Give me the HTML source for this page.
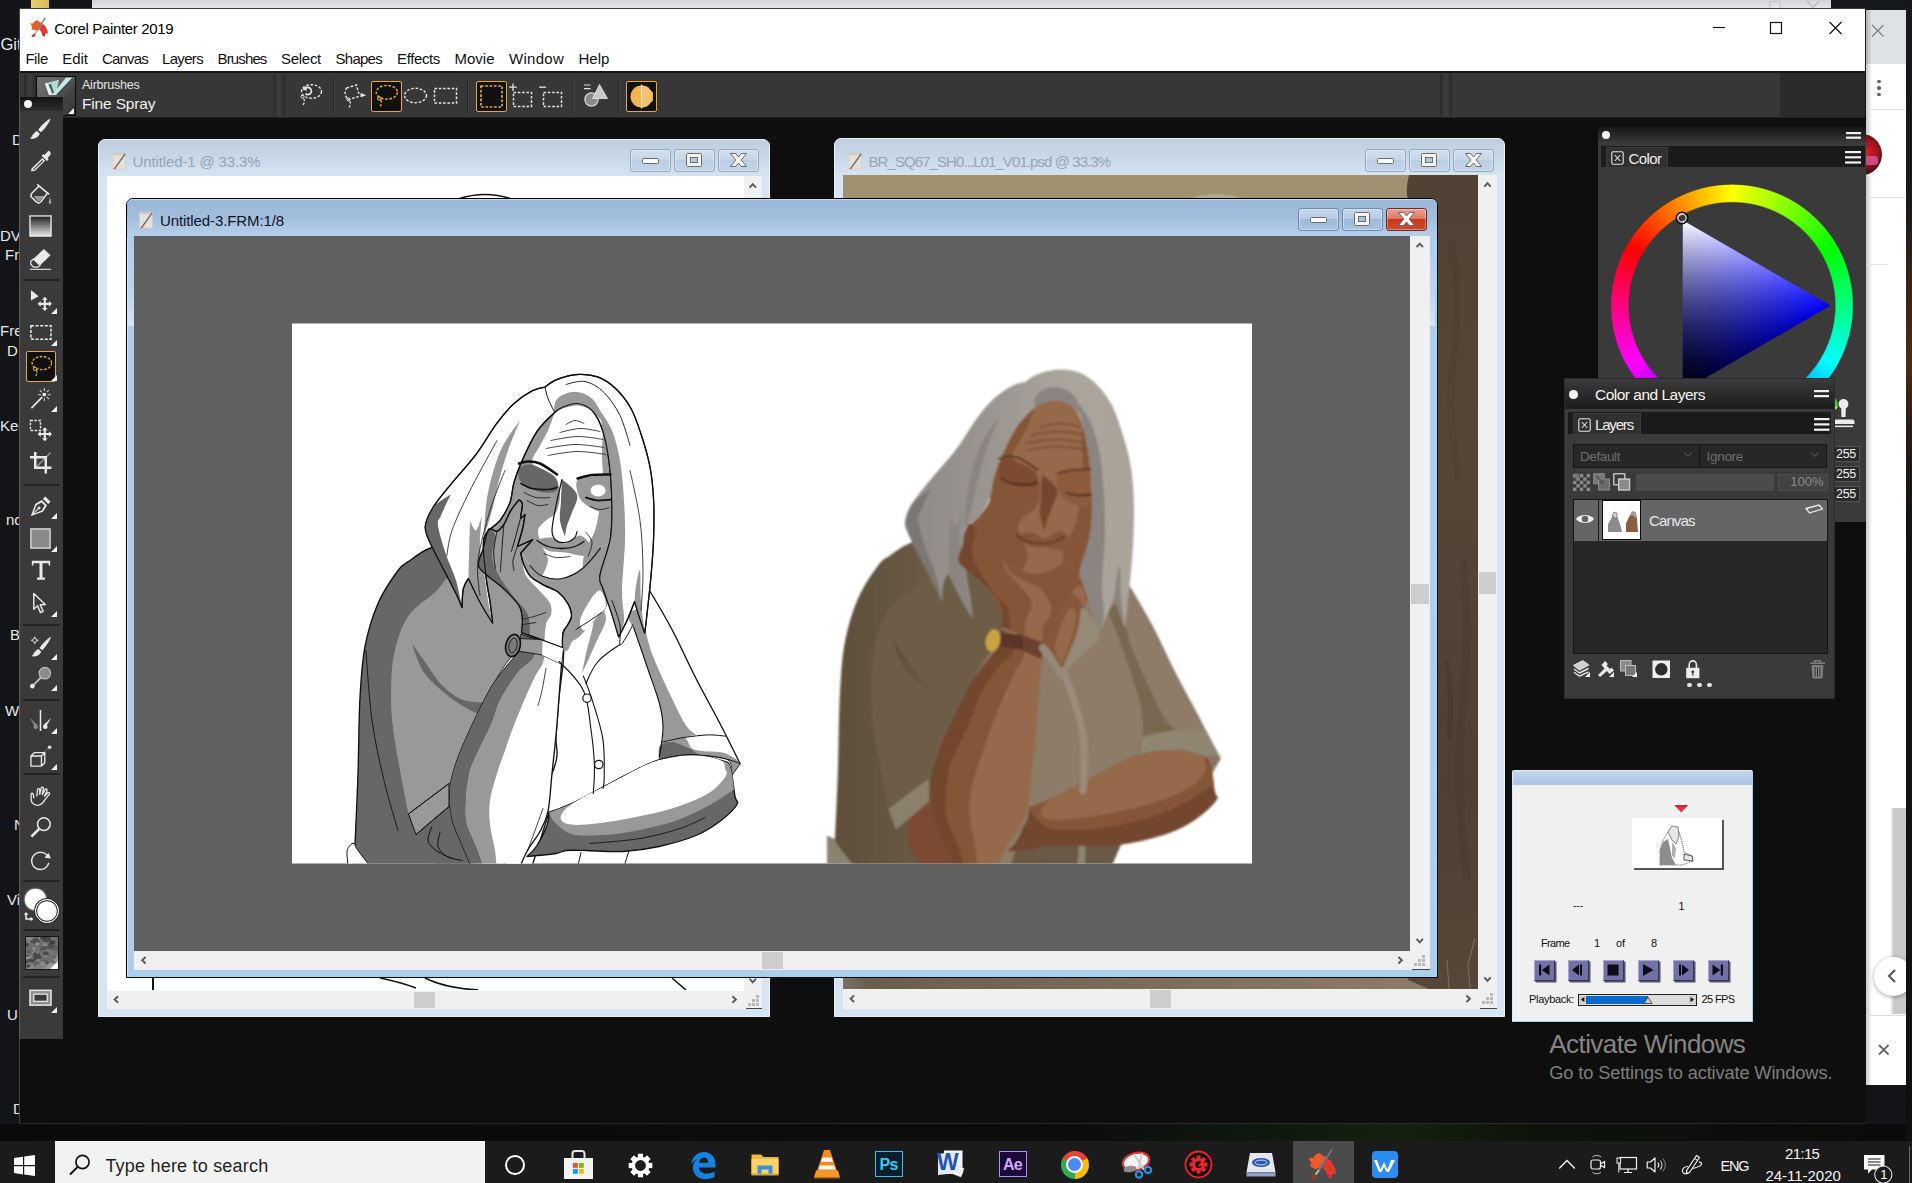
<!DOCTYPE html>
<html>
<head>
<meta charset="utf-8">
<title>Corel Painter 2019</title>
<style>
*{box-sizing:border-box;margin:0;padding:0}
html,body{width:1912px;height:1183px;overflow:hidden;background:#0c0c0f;font-family:"Liberation Sans",sans-serif;}
.abs{position:absolute}
#root{position:absolute;left:0;top:0;width:1912px;height:1183px;overflow:hidden;background:#0c0c0f}
.t{position:absolute;white-space:nowrap;line-height:1}
</style>
</head>
<body>
<div id="root">
<!-- p1_main -->
<div class="abs" style="left:0.00px;top:0.00px;width:1912.00px;height:1183.00px;background:#121417;"></div>
<div class="abs" style="left:0.00px;top:1124.00px;width:1912.00px;height:17.00px;background:linear-gradient(90deg,#0a0a0c 0%,#0c0c0c 55%,#101a10 68%,#15200f 73%,#0e130c 80%,#0a0a0a 100%);"></div>
<div class="abs" style="left:92.00px;top:0.00px;width:1739.00px;height:9.00px;background:linear-gradient(#d3d4da,#e8e9ec);"></div>
<div class="abs" style="left:92.00px;top:8.00px;width:1739.00px;height:1.00px;background:#777;"></div>
<div class="abs" style="left:31.00px;top:0.00px;width:18.00px;height:8.00px;background:linear-gradient(90deg,#e8cf7a,#d9b84d);"></div>
<div class="abs" style="left:1831.00px;top:0.00px;width:81.00px;height:10.00px;background:#16181c;"></div>
<svg class="abs" style="left:1765.00px;top:0.00px;" width="60" height="8" viewBox="0 0 60 8"><rect x="4.8" y="1.5" width="10.6" height="12" rx="2" fill="none" stroke="#c2c3c9" stroke-width="1.2"/><path d="M42 1 L48.2 7.5 L54.4 1" stroke="#b9babf" stroke-width="1.2" fill="none"/></svg>
<div class="abs" style="left:0;top:33px;width:19px;height:22px;overflow:hidden"><div class="t" style="left:0.50px;top:2.53px;font-size:16.50px;color:#e8e8e8;">Git</div></div>
<div class="abs" style="left:0;top:130px;width:19px;height:21px;overflow:hidden"><div class="t" style="left:12.00px;top:2.30px;font-size:15.00px;color:#e8e8e8;">D</div></div>
<div class="abs" style="left:0;top:226px;width:19px;height:21px;overflow:hidden"><div class="t" style="left:0.00px;top:2.30px;font-size:15.00px;color:#e8e8e8;">DV</div></div>
<div class="abs" style="left:0;top:245px;width:19px;height:21px;overflow:hidden"><div class="t" style="left:5.00px;top:2.30px;font-size:15.00px;color:#e8e8e8;">Fr</div></div>
<div class="abs" style="left:0;top:321px;width:19px;height:21px;overflow:hidden"><div class="t" style="left:0.00px;top:2.30px;font-size:15.00px;color:#e8e8e8;">Fre</div></div>
<div class="abs" style="left:0;top:341px;width:19px;height:21px;overflow:hidden"><div class="t" style="left:7.00px;top:2.30px;font-size:15.00px;color:#e8e8e8;">D</div></div>
<div class="abs" style="left:0;top:416px;width:19px;height:21px;overflow:hidden"><div class="t" style="left:0.00px;top:2.30px;font-size:15.00px;color:#e8e8e8;">Kee</div></div>
<div class="abs" style="left:0;top:510px;width:19px;height:21px;overflow:hidden"><div class="t" style="left:6.00px;top:2.30px;font-size:15.00px;color:#e8e8e8;">no</div></div>
<div class="abs" style="left:0;top:625px;width:19px;height:21px;overflow:hidden"><div class="t" style="left:10.00px;top:2.30px;font-size:15.00px;color:#e8e8e8;">B</div></div>
<div class="abs" style="left:0;top:701px;width:19px;height:21px;overflow:hidden"><div class="t" style="left:5.00px;top:2.30px;font-size:15.00px;color:#e8e8e8;">W</div></div>
<div class="abs" style="left:0;top:815px;width:19px;height:21px;overflow:hidden"><div class="t" style="left:14.00px;top:2.30px;font-size:15.00px;color:#e8e8e8;">N</div></div>
<div class="abs" style="left:0;top:890px;width:19px;height:21px;overflow:hidden"><div class="t" style="left:7.00px;top:2.30px;font-size:15.00px;color:#e8e8e8;">Vi</div></div>
<div class="abs" style="left:0;top:1005px;width:19px;height:21px;overflow:hidden"><div class="t" style="left:7.00px;top:2.30px;font-size:15.00px;color:#e8e8e8;">U</div></div>
<div class="abs" style="left:0;top:1099px;width:19px;height:21px;overflow:hidden"><div class="t" style="left:13.00px;top:2.30px;font-size:15.00px;color:#e8e8e8;">D</div></div>
<div class="abs" style="left:1865.50px;top:10.00px;width:40.50px;height:1075.00px;background:#ffffff;"></div>
<div class="abs" style="left:1865.50px;top:10.00px;width:40.50px;height:54.00px;background:#dee1e6;"></div>
<div class="abs" style="left:1865.50px;top:10.00px;width:6.00px;height:1075.00px;background:linear-gradient(90deg,rgba(0,0,0,0.22),rgba(0,0,0,0));"></div>
<svg class="abs" style="left:1870.00px;top:23.00px;" width="16" height="16" viewBox="0 0 16 16"><path d="M2 2 L13.5 13.5 M13.5 2 L2 13.5" stroke="#7d8085" stroke-width="1.3"/></svg>
<div class="abs" style="left:1865.50px;top:108.50px;width:40.50px;height:1.00px;background:#e3e3e3;"></div>
<div class="abs" style="left:1877.2px;top:79.5px;width:3.6px;height:3.6px;border-radius:50%;background:#5f6368"></div>
<div class="abs" style="left:1877.2px;top:86px;width:3.6px;height:3.6px;border-radius:50%;background:#5f6368"></div>
<div class="abs" style="left:1877.2px;top:92.5px;width:3.6px;height:3.6px;border-radius:50%;background:#5f6368"></div>
<div class="abs" style="left:1842px;top:134px;width:40px;height:41px;border-radius:50%;background:radial-gradient(circle at 60% 45%,#d8202a 0%,#a0141c 35%,#4a1014 60%,#1c1012 100%);overflow:hidden"><div class="abs" style="left:22px;top:22px;width:14px;height:9px;background:#d45a9a;border-radius:3px;opacity:0.8"></div></div>
<div class="abs" style="left:1865.50px;top:196.50px;width:40.50px;height:1.00px;background:#e2e2e2;"></div>
<div class="abs" style="left:1865.50px;top:263.50px;width:21.00px;height:1.50px;background:#e6e6e6;"></div>
<div class="abs" style="left:1891.00px;top:808.00px;width:15.00px;height:206.00px;background:#c9c9c9;border-left:2px solid #e6e6e6"></div>
<div class="abs" style="left:1865.50px;top:1014.50px;width:40.50px;height:1.00px;background:#dcdcdc;"></div>
<div class="abs" style="left:1873.5px;top:956.5px;width:39px;height:39px;border-radius:50%;background:#fff;box-shadow:0 1px 4px rgba(0,0,0,0.35)"></div>
<svg class="abs" style="left:1886.00px;top:968.00px;" width="12" height="16" viewBox="0 0 12 16"><path d="M9 2 L3 8 L9 14" fill="none" stroke="#555" stroke-width="2"/></svg>
<svg class="abs" style="left:1877.00px;top:1043.00px;" width="14" height="14" viewBox="0 0 14 14"><path d="M2 2 L11.5 11.5 M11.5 2 L2 11.5" stroke="#666" stroke-width="1.8"/></svg>
<div class="abs" style="left:1906.00px;top:0.00px;width:6.00px;height:1141.00px;background:linear-gradient(#15171b 0%,#1b1a1a 18%,#3a2415 25%,#4a2a14 32%,#2a1a12 38%,#141414 45%,#101010 100%);"></div>
<div class="abs" style="left:19.00px;top:9.00px;width:1846.00px;height:1115.00px;background:#0e0e0e;border-left:1px solid #444"></div>
<div class="abs" style="left:19.00px;top:8.00px;width:1846.00px;height:1.00px;background:#3c3c3c;"></div>
<div class="abs" style="left:19.00px;top:1123.00px;width:1847.00px;height:1.00px;background:#2a2a2a;"></div>
<div class="abs" style="left:20.00px;top:9.00px;width:1845.00px;height:62.00px;background:#ffffff;"></div>
<svg class="abs" style="left:29.00px;top:17.00px;" width="21" height="25" viewBox="0 0 21 25"><path d="M1.2 6.2 L4 6.6 L6 4 L8.5 3 L10 5 L12.5 5.5 L9 12 L6 13.5 L2.5 12 L3 9.5 Z" fill="#f05a28"/>
<path d="M13 7 L15.5 8 L18.5 13.5 L18.8 16.5 L16.5 16.5 L15.8 19.5 L14 19 L12 14.5 L10 12.5 Z" fill="#e03a28"/>
<path d="M15.8 19.5 L14 19 L13 16.5 L15 17 Z" fill="#c8245a"/>
<path d="M16.9 1 L15.7 0.6 L7.4 13.6 L8.6 14.3 Z" fill="#6f7480"/>
<path d="M7.4 13.6 L8.6 14.3 L6.4 17.4 L5.2 16.6 Z" fill="#bda89a"/>
<path d="M5.2 16.6 L6.4 17.4 L5.8 19.6 L2.2 20 L3.4 18 Z" fill="#9a3a24"/></svg>
<div class="t" style="left:54.30px;top:20.90px;font-size:15.00px;color:#000;letter-spacing:-0.338px;">Corel Painter 2019</div>
<div class="t" style="left:25.40px;top:51.00px;font-size:15.00px;color:#111;letter-spacing:-0.443px;">File</div>
<div class="t" style="left:62.30px;top:51.00px;font-size:15.00px;color:#111;letter-spacing:-0.087px;">Edit</div>
<div class="t" style="left:102.00px;top:51.00px;font-size:15.00px;color:#111;letter-spacing:-0.810px;">Canvas</div>
<div class="t" style="left:162.00px;top:51.00px;font-size:15.00px;color:#111;letter-spacing:-0.670px;">Layers</div>
<div class="t" style="left:217.50px;top:51.00px;font-size:15.00px;color:#111;letter-spacing:-0.861px;">Brushes</div>
<div class="t" style="left:281.00px;top:51.00px;font-size:15.00px;color:#111;letter-spacing:-0.282px;">Select</div>
<div class="t" style="left:335.50px;top:51.00px;font-size:15.00px;color:#111;letter-spacing:-0.729px;">Shapes</div>
<div class="t" style="left:397.00px;top:51.00px;font-size:15.00px;color:#111;letter-spacing:-0.368px;">Effects</div>
<div class="t" style="left:454.50px;top:51.00px;font-size:15.00px;color:#111;letter-spacing:-0.003px;">Movie</div>
<div class="t" style="left:509.00px;top:51.00px;font-size:15.00px;color:#111;letter-spacing:0.275px;">Window</div>
<div class="t" style="left:578.50px;top:51.00px;font-size:15.00px;color:#111;letter-spacing:0.038px;">Help</div>
<svg class="abs" style="left:1700.00px;top:14.00px;" width="150" height="30" viewBox="0 0 150 30">
<path d="M13 13.5 H25" stroke="#111" stroke-width="1.1"/>
<rect x="70.5" y="8.5" width="11" height="11" fill="none" stroke="#111" stroke-width="1.2"/>
<path d="M129.5 8 L141.5 20 M141.5 8 L129.5 20" stroke="#111" stroke-width="1.2"/></svg>
<div class="abs" style="left:20.00px;top:71.00px;width:1845.00px;height:2.00px;background:#161616;"></div>
<div class="abs" style="left:20.00px;top:73.00px;width:1760.00px;height:45.00px;background:#373737;"></div>
<div class="abs" style="left:1780.00px;top:73.00px;width:85.00px;height:45.00px;background:#2b2b2b;"></div>
<div class="abs" style="left:20.00px;top:117.00px;width:1845.00px;height:1.00px;background:#222;"></div>
<div class="abs" style="left:24.00px;top:74.00px;width:12.00px;height:43.00px;background:linear-gradient(90deg,#2a2a2a,#3e3e3e 50%,#2a2a2a);"></div>
<div class="abs" style="left:273.00px;top:74.00px;width:12.00px;height:43.00px;background:linear-gradient(90deg,#2a2a2a,#3e3e3e 50%,#2a2a2a);"></div>
<div class="abs" style="left:1440.00px;top:74.00px;width:12.00px;height:43.00px;background:linear-gradient(90deg,#2a2a2a,#3e3e3e 50%,#2a2a2a);"></div>
<div class="abs" style="left:36.00px;top:76.00px;width:40.00px;height:40.00px;background:linear-gradient(135deg,#727272 0%,#5e5e5e 40%,#444242 65%,#3a3838 100%);border:1.6px solid #0a0a0a"></div>
<svg class="abs" style="left:36.00px;top:76.00px;" width="40" height="40" viewBox="0 0 40 40">
<path d="M9 7.5 L23 3.8 L20 19 L13 19 Z" fill="#b9d8d5"/>
<path d="M9 7.5 L11.5 6.9 L15.5 19 L13 19 Z" fill="#e6f2f0"/>
<path d="M12.5 8.5 L15 8 L18 17 L16.5 17.5 Z" fill="#3d5856"/>
<path d="M16 19 L30 1.5 L38.5 1.5 L22 19 Z" fill="#c8e6e3"/>
<path d="M20 19 L36.5 1.5 L38.5 1.5 L23.5 19 Z" fill="#344c4a"/>
<path d="M31 38.4 L38.4 38.4 L38.4 31 Z" fill="#fff" stroke="#0a0a0a" stroke-width="0.8"/></svg>
<div class="t" style="left:82.00px;top:78.92px;font-size:12.50px;color:#e6e6e6;letter-spacing:-0.225px;">Airbrushes</div>
<div class="t" style="left:82.00px;top:96.48px;font-size:15.50px;color:#f0f0f0;letter-spacing:-0.165px;">Fine Spray</div>
<div class="abs" style="left:333.00px;top:77.00px;width:1.00px;height:37.00px;background:#262626;"></div>
<div class="abs" style="left:334.00px;top:77.00px;width:1.00px;height:37.00px;background:#434343;"></div>
<div class="abs" style="left:467.00px;top:77.00px;width:1.00px;height:37.00px;background:#262626;"></div>
<div class="abs" style="left:468.00px;top:77.00px;width:1.00px;height:37.00px;background:#434343;"></div>
<div class="abs" style="left:572.00px;top:77.00px;width:1.00px;height:37.00px;background:#262626;"></div>
<div class="abs" style="left:573.00px;top:77.00px;width:1.00px;height:37.00px;background:#434343;"></div>
<div class="abs" style="left:618.00px;top:77.00px;width:1.00px;height:37.00px;background:#262626;"></div>
<div class="abs" style="left:619.00px;top:77.00px;width:1.00px;height:37.00px;background:#434343;"></div>
<!-- p2_docs -->
<div class="abs" style="left:98.00px;top:138.50px;width:671.50px;height:878.00px;background:#d7e4f2;border:1px solid #e9f0f8;border-radius:7px 7px 0 0;"></div><div class="abs" style="left:99.00px;top:139.50px;width:669.50px;height:36.50px;background:linear-gradient(#bfcedd 0%,#c9d8e8 50%,#d6e3f1 100%);border-radius:6px 6px 0 0;"></div><svg class="abs" style="left:111.50px;top:152.00px;" width="15" height="18" viewBox="0 0 15 18"><rect x="0.5" y="1" width="13" height="16" fill="#e4e0dc" stroke="#d2cdc8" stroke-width="0.6"/>
<rect x="1" y="1" width="12" height="2.2" fill="#cfcac6"/>
<path d="M12.6 1.6 L13.6 2.4 L5 14.5 L3.8 13.8 Z" fill="#6f6a6a"/>
<path d="M5 14.5 L3.8 13.8 L1.6 17 L3 17.2 Z" fill="#c8402e"/></svg><div class="t" style="left:132.50px;top:154.10px;font-size:15.00px;color:#98a4b2;letter-spacing:-0.127px;">Untitled-1 @ 33.3%</div><div class="abs" style="left:629.50px;top:149.00px;width:41.00px;height:23.00px;background:linear-gradient(#d0ddeb 0%,#c8d7e8 45%,#bccee4 50%,#c3d4e8 100%);border:1px solid #94a8c0;border-radius:3px;box-shadow:inset 0 0 0 1px rgba(255,255,255,0.35)"></div><svg class="abs" style="left:629.50px;top:149.00px;" width="41" height="23" viewBox="0 0 41 23"><rect x="12.5" y="9.5" width="16" height="5" rx="1" fill="#fafafa" stroke="#6b6b6b" stroke-width="1"/></svg><div class="abs" style="left:673.50px;top:149.00px;width:41.00px;height:23.00px;background:linear-gradient(#d0ddeb 0%,#c8d7e8 45%,#bccee4 50%,#c3d4e8 100%);border:1px solid #94a8c0;border-radius:3px;box-shadow:inset 0 0 0 1px rgba(255,255,255,0.35)"></div><svg class="abs" style="left:673.50px;top:149.00px;" width="41" height="23" viewBox="0 0 41 23"><rect x="12.5" y="4.5" width="15" height="13" rx="1" fill="#f4f4f4" stroke="#6b6b6b" stroke-width="1"/><rect x="16.5" y="8.5" width="7" height="5" fill="#b5c9e1" stroke="#6b6b6b" stroke-width="1"/></svg><div class="abs" style="left:717.50px;top:149.00px;width:41.00px;height:23.00px;background:linear-gradient(#d0ddeb 0%,#c8d7e8 45%,#bccee4 50%,#c3d4e8 100%);border:1px solid #94a8c0;border-radius:3px;box-shadow:inset 0 0 0 1px rgba(255,255,255,0.35)"></div><svg class="abs" style="left:717.50px;top:149.00px;" width="41" height="23" viewBox="0 0 41 23"><path d="M12.5 4.5 L17.6 4.5 L20.5 8 L23.4 4.5 L28.5 4.5 L23.2 11 L28.5 17.5 L23.4 17.5 L20.5 14 L17.6 17.5 L12.5 17.5 L17.8 11 Z" fill="#f6f6f6" stroke="#6b6b6b" stroke-width="1" stroke-linejoin="round"/></svg><div class="abs" style="left:106.5px;top:176px;width:637.5px;height:814.5px;overflow:hidden;background:#fff"><svg class="abs" style="left:0;top:0" width="637" height="814" viewBox="107 176 637 814">
<path d="M458 199 Q485 190 512 199" fill="none" stroke="#111" stroke-width="1.6"/>
<path d="M153 978 L153 990" stroke="#111" stroke-width="2"/>
<path d="M380 978 Q400 982 416 988" fill="none" stroke="#111" stroke-width="1.4"/>
<path d="M425 978 Q445 988 478 990" fill="none" stroke="#111" stroke-width="1.8"/>
<path d="M672 978 L686 990" stroke="#111" stroke-width="1.6"/>
</svg></div><div class="abs" style="left:744.00px;top:176.00px;width:17.50px;height:832.50px;background:#f0f0f0;"></div><div class="abs" style="left:106.50px;top:990.50px;width:637.50px;height:18.00px;background:#f0f0f0;"></div><div class="abs" style="left:745.00px;top:0.00px;width:15.50px;height:0.00px;background:#cdcdcd;"></div><div class="abs" style="left:414.00px;top:991.50px;width:21.00px;height:16.00px;background:#cdcdcd;"></div><svg class="abs" style="left:0;top:0" width="1912" height="1183"><path d="M749.55 187.6 L752.75 184.1 L755.95 187.6" fill="none" stroke="#5a5a5a" stroke-width="1.9"/><path d="M749.55 978.9 L752.75 982.4 L755.95 978.9" fill="none" stroke="#5a5a5a" stroke-width="1.9"/><path d="M118.1 996.3 L114.6 999.5 L118.1 1002.7" fill="none" stroke="#5a5a5a" stroke-width="1.9"/><path d="M732.4 996.3 L735.9 999.5 L732.4 1002.7" fill="none" stroke="#5a5a5a" stroke-width="1.9"/></svg><svg class="abs" style="left:745.00px;top:991.50px;" width="17" height="17" viewBox="0 0 17 17"><rect x="11" y="3" width="3" height="3" fill="#b8b8b8"/><rect x="7" y="7" width="3" height="3" fill="#b8b8b8"/><rect x="11" y="7" width="3" height="3" fill="#b8b8b8"/><rect x="3" y="11" width="3" height="3" fill="#b8b8b8"/><rect x="7" y="11" width="3" height="3" fill="#b8b8b8"/><rect x="11" y="11" width="3" height="3" fill="#b8b8b8"/></svg><div class="abs" style="left:746.00px;top:1007.50px;width:15.50px;height:1.00px;background:#444;"></div>
<div class="abs" style="left:834.00px;top:138.00px;width:671.00px;height:878.50px;background:#d7e4f2;border:1px solid #e9f0f8;border-radius:7px 7px 0 0;"></div><div class="abs" style="left:835.00px;top:139.00px;width:669.00px;height:36.00px;background:linear-gradient(#bfcedd 0%,#c9d8e8 50%,#d6e3f1 100%);border-radius:6px 6px 0 0;"></div><svg class="abs" style="left:847.50px;top:151.50px;" width="15" height="18" viewBox="0 0 15 18"><rect x="0.5" y="1" width="13" height="16" fill="#e4e0dc" stroke="#d2cdc8" stroke-width="0.6"/>
<rect x="1" y="1" width="12" height="2.2" fill="#cfcac6"/>
<path d="M12.6 1.6 L13.6 2.4 L5 14.5 L3.8 13.8 Z" fill="#6f6a6a"/>
<path d="M5 14.5 L3.8 13.8 L1.6 17 L3 17.2 Z" fill="#c8402e"/></svg><div class="t" style="left:868.50px;top:153.60px;font-size:15.00px;color:#98a4b2;letter-spacing:-0.920px;">BR_SQ67_SH0...L01_V01.psd @ 33.3%</div><div class="abs" style="left:1365.00px;top:148.50px;width:41.00px;height:23.00px;background:linear-gradient(#d0ddeb 0%,#c8d7e8 45%,#bccee4 50%,#c3d4e8 100%);border:1px solid #94a8c0;border-radius:3px;box-shadow:inset 0 0 0 1px rgba(255,255,255,0.35)"></div><svg class="abs" style="left:1365.00px;top:148.50px;" width="41" height="23" viewBox="0 0 41 23"><rect x="12.5" y="9.5" width="16" height="5" rx="1" fill="#fafafa" stroke="#6b6b6b" stroke-width="1"/></svg><div class="abs" style="left:1409.00px;top:148.50px;width:41.00px;height:23.00px;background:linear-gradient(#d0ddeb 0%,#c8d7e8 45%,#bccee4 50%,#c3d4e8 100%);border:1px solid #94a8c0;border-radius:3px;box-shadow:inset 0 0 0 1px rgba(255,255,255,0.35)"></div><svg class="abs" style="left:1409.00px;top:148.50px;" width="41" height="23" viewBox="0 0 41 23"><rect x="12.5" y="4.5" width="15" height="13" rx="1" fill="#f4f4f4" stroke="#6b6b6b" stroke-width="1"/><rect x="16.5" y="8.5" width="7" height="5" fill="#b5c9e1" stroke="#6b6b6b" stroke-width="1"/></svg><div class="abs" style="left:1453.00px;top:148.50px;width:41.00px;height:23.00px;background:linear-gradient(#d0ddeb 0%,#c8d7e8 45%,#bccee4 50%,#c3d4e8 100%);border:1px solid #94a8c0;border-radius:3px;box-shadow:inset 0 0 0 1px rgba(255,255,255,0.35)"></div><svg class="abs" style="left:1453.00px;top:148.50px;" width="41" height="23" viewBox="0 0 41 23"><path d="M12.5 4.5 L17.6 4.5 L20.5 8 L23.4 4.5 L28.5 4.5 L23.2 11 L28.5 17.5 L23.4 17.5 L20.5 14 L17.6 17.5 L12.5 17.5 L17.8 11 Z" fill="#f6f6f6" stroke="#6b6b6b" stroke-width="1" stroke-linejoin="round"/></svg><div class="abs" style="left:842.5px;top:175px;width:635.5px;height:814px;overflow:hidden;background:#a09170"><svg class="abs" style="left:0;top:0" width="636" height="814" viewBox="842 175 636 814">
<defs><linearGradient id="brn" x1="0" y1="0" x2="0" y2="1"><stop offset="0" stop-color="#504234"/><stop offset="0.3" stop-color="#554738"/><stop offset="0.75" stop-color="#4e4033"/><stop offset="1" stop-color="#564739"/></linearGradient>
<linearGradient id="flr" x1="0" y1="0" x2="1" y2="0"><stop offset="0" stop-color="#7a7266"/><stop offset="0.04" stop-color="#6b5d4c"/><stop offset="0.5" stop-color="#7e6d5a"/><stop offset="0.9" stop-color="#8d7b67"/><stop offset="1" stop-color="#7b6a58"/></linearGradient></defs>
<rect x="842" y="175" width="636" height="814" fill="#a09170"/>
<rect x="842" y="970" width="636" height="20" fill="url(#flr)"/>
<path d="M1408 175 Q1404 190 1407 200 L1407 980 L1428 989 L1478 989 L1478 175 Z" fill="url(#brn)"/>
<path d="M1190 198 Q1215 190 1240 198 Z" fill="#b0a78f"/>
<path d="M1450 240 Q1462 300 1452 360 Q1446 420 1458 480" fill="none" stroke="#45382c" stroke-width="7" opacity="0.28"/>
<path d="M1462 560 Q1470 640 1460 720 Q1455 800 1466 880" fill="none" stroke="#433428" stroke-width="8" opacity="0.25"/>
<path d="M1446 660 Q1452 700 1448 740" fill="none" stroke="#3e3027" stroke-width="5" opacity="0.3"/>
<path d="M1474 938 L1467 965 L1469 989 M1446 960 L1448 989" fill="none" stroke="#8a7a68" stroke-width="1" opacity="0.8"/>
</svg></div><div class="abs" style="left:1478.00px;top:175.00px;width:19.00px;height:833.50px;background:#f0f0f0;"></div><div class="abs" style="left:842.50px;top:989.00px;width:635.50px;height:19.50px;background:#f0f0f0;"></div><div class="abs" style="left:1479.00px;top:572.00px;width:17.00px;height:22.00px;background:#cdcdcd;"></div><div class="abs" style="left:1150.00px;top:990.00px;width:21.00px;height:17.50px;background:#cdcdcd;"></div><svg class="abs" style="left:0;top:0" width="1912" height="1183"><path d="M1484.3 186.6 L1487.5 183.1 L1490.7 186.6" fill="none" stroke="#5a5a5a" stroke-width="1.9"/><path d="M1484.3 977.4 L1487.5 980.9 L1490.7 977.4" fill="none" stroke="#5a5a5a" stroke-width="1.9"/><path d="M854.1 995.55 L850.6 998.75 L854.1 1001.95" fill="none" stroke="#5a5a5a" stroke-width="1.9"/><path d="M1466.4 995.55 L1469.9 998.75 L1466.4 1001.95" fill="none" stroke="#5a5a5a" stroke-width="1.9"/></svg><svg class="abs" style="left:1479.00px;top:990.00px;" width="17" height="17" viewBox="0 0 17 17"><rect x="11" y="3" width="3" height="3" fill="#b8b8b8"/><rect x="7" y="7" width="3" height="3" fill="#b8b8b8"/><rect x="11" y="7" width="3" height="3" fill="#b8b8b8"/><rect x="3" y="11" width="3" height="3" fill="#b8b8b8"/><rect x="7" y="11" width="3" height="3" fill="#b8b8b8"/><rect x="11" y="11" width="3" height="3" fill="#b8b8b8"/></svg><div class="abs" style="left:1480.00px;top:1007.50px;width:17.00px;height:1.00px;background:#444;"></div>
<div class="abs" style="left:125.50px;top:197.50px;width:1312.00px;height:780.50px;background:#b1cdea;border:1px solid #000;border-radius:7px 7px 0 0;"></div><div class="abs" style="left:126.50px;top:198.50px;width:1310.00px;height:37.00px;background:linear-gradient(#9bb7d7 0%,#a3bedd 50%,#b6d0ea 100%);border-radius:6px 6px 0 0;border-top:1px solid #c5d9ee"></div><div class="abs" style="left:126.50px;top:975.00px;width:1310.00px;height:2.00px;background:#8fd9f8;"></div><div class="abs" style="left:1434.50px;top:237.50px;width:2.00px;height:738.50px;background:#9adcf7;"></div><div class="abs" style="left:126.50px;top:237.50px;width:1.00px;height:738.50px;background:#d4e6f7;"></div><div class="abs" style="left:127.50px;top:239.50px;width:6.00px;height:86.00px;background:linear-gradient(rgba(255,255,255,0) 0%,rgba(255,255,255,0.15) 60%,rgba(255,255,255,0.5) 100%);"></div><div class="abs" style="left:1428.50px;top:239.50px;width:6.00px;height:86.00px;background:linear-gradient(rgba(255,255,255,0) 0%,rgba(255,255,255,0.15) 60%,rgba(255,255,255,0.5) 100%);"></div><svg class="abs" style="left:139.00px;top:211.00px;" width="15" height="18" viewBox="0 0 15 18"><rect x="0.5" y="1" width="13" height="16" fill="#e4e0dc" stroke="#d2cdc8" stroke-width="0.6"/>
<rect x="1" y="1" width="12" height="2.2" fill="#cfcac6"/>
<path d="M12.6 1.6 L13.6 2.4 L5 14.5 L3.8 13.8 Z" fill="#6f6a6a"/>
<path d="M5 14.5 L3.8 13.8 L1.6 17 L3 17.2 Z" fill="#c8402e"/></svg><div class="t" style="left:160.00px;top:213.10px;font-size:15.00px;color:#0c1424;letter-spacing:-0.104px;">Untitled-3.FRM:1/8</div><div class="abs" style="left:1297.50px;top:208.00px;width:41.00px;height:23.00px;background:linear-gradient(#c3d6ec 0%,#b7cde6 45%,#9fbbdb 50%,#a9c3e0 100%);border:1px solid #6f8cad;border-radius:3px;box-shadow:inset 0 0 0 1px rgba(255,255,255,0.35)"></div><svg class="abs" style="left:1297.50px;top:208.00px;" width="41" height="23" viewBox="0 0 41 23"><rect x="12.5" y="9.5" width="16" height="5" rx="1" fill="#fafafa" stroke="#6b6b6b" stroke-width="1"/></svg><div class="abs" style="left:1341.50px;top:208.00px;width:41.00px;height:23.00px;background:linear-gradient(#c3d6ec 0%,#b7cde6 45%,#9fbbdb 50%,#a9c3e0 100%);border:1px solid #6f8cad;border-radius:3px;box-shadow:inset 0 0 0 1px rgba(255,255,255,0.35)"></div><svg class="abs" style="left:1341.50px;top:208.00px;" width="41" height="23" viewBox="0 0 41 23"><rect x="12.5" y="4.5" width="15" height="13" rx="1" fill="#f4f4f4" stroke="#6b6b6b" stroke-width="1"/><rect x="16.5" y="8.5" width="7" height="5" fill="#a9c2df" stroke="#6b6b6b" stroke-width="1"/></svg><div class="abs" style="left:1385.50px;top:208.00px;width:41.00px;height:23.00px;background:linear-gradient(#e9a090 0%,#dd7a66 45%,#c9381c 50%,#cf4a2c 100%);border:1px solid #6e2a1f;border-radius:3px;box-shadow:inset 0 0 0 1px rgba(255,255,255,0.35)"></div><svg class="abs" style="left:1385.50px;top:208.00px;" width="41" height="23" viewBox="0 0 41 23"><path d="M12.5 4.5 L17.6 4.5 L20.5 8 L23.4 4.5 L28.5 4.5 L23.2 11 L28.5 17.5 L23.4 17.5 L20.5 14 L17.6 17.5 L12.5 17.5 L17.8 11 Z" fill="#f6f6f6" stroke="#6b6b6b" stroke-width="1" stroke-linejoin="round"/></svg><div class="abs" style="left:134px;top:235.5px;width:1276px;height:715px;overflow:hidden;background:#606060"><svg class="abs" style="left:0;top:0" width="1276" height="715" viewBox="134 235.5 1276 715">
<defs><filter id="pb" x="-5%" y="-5%" width="110%" height="110%"><feGaussianBlur stdDeviation="0.9"/></filter><linearGradient id="hairg" x1="0" y1="0" x2="1" y2="0"><stop offset="0" stop-color="#8f8a85"/><stop offset="0.45" stop-color="#9d9892"/><stop offset="0.7" stop-color="#aaa59c"/><stop offset="1" stop-color="#a9a399"/></linearGradient><linearGradient id="backg" x1="0" y1="0" x2="1" y2="0"><stop offset="0" stop-color="#5d4e3a"/><stop offset="0.5" stop-color="#695a44"/><stop offset="1" stop-color="#6d5d47"/></linearGradient><clipPath id="cv"><rect x="292" y="323" width="960" height="540"/></clipPath></defs>
<rect x="292" y="323" width="960" height="540" fill="#fff"/>
<g clip-path="url(#cv)">
<g><path d="M490.0 560.0 C477.0 553.0 450.5 549.8 440.0 548.0 C429.5 546.2 432.0 547.0 427.0 549.0 C422.0 551.0 414.8 556.5 410.0 560.0 C405.2 563.5 403.3 562.8 398.0 570.0 C392.7 577.2 383.5 590.3 378.0 603.0 C372.5 615.7 368.0 630.3 365.0 646.0 C362.0 661.7 361.2 675.8 360.0 697.0 C358.8 718.2 358.8 748.5 358.0 773.0 C357.2 797.5 355.7 827.5 355.0 844.0 C354.3 860.5 354.0 872.0 354.0 872.0 C354.0 872.0 480.0 872.0 480.0 872.0 C480.0 872.0 466.7 853.0 462.0 844.0 C457.3 835.0 454.0 827.3 452.0 818.0 C450.0 808.7 449.2 797.7 450.0 788.0 C450.8 778.3 453.3 770.5 457.0 760.0 C460.7 749.5 466.5 736.8 472.0 725.0 C477.5 713.2 484.5 699.2 490.0 689.0 C495.5 678.8 500.3 671.2 505.0 664.0 C509.7 656.8 514.5 653.8 518.0 646.0 C521.5 638.2 526.0 617.0 526.0 617.0 C526.0 617.0 524.0 599.5 518.0 590.0 C512.0 580.5 503.0 567.0 490.0 560.0 Z" fill="#676767" stroke="#111" stroke-width="1.35" stroke-linejoin="round" />
<path d="M480.0 560.0 C468.7 557.2 457.3 569.8 450.0 575.0 C442.7 580.2 443.0 584.2 436.0 591.0 C429.0 597.8 415.0 605.5 408.0 616.0 C401.0 626.5 396.8 640.5 394.0 654.0 C391.2 667.5 391.0 683.5 391.0 697.0 C391.0 710.5 392.0 720.2 394.0 735.0 C396.0 749.8 400.6 772.9 403.0 786.0 C405.4 799.1 408.5 813.5 408.5 813.5 C408.5 813.5 416.0 834.0 416.0 834.0 C416.0 834.0 443.5 812.5 449.0 806.0 C454.5 799.5 448.8 798.0 449.0 795.0 C449.2 792.0 448.7 793.8 450.0 788.0 C451.3 782.2 453.3 770.5 457.0 760.0 C460.7 749.5 466.5 736.8 472.0 725.0 C477.5 713.2 484.5 699.2 490.0 689.0 C495.5 678.8 500.3 671.2 505.0 664.0 C509.7 656.8 514.5 653.8 518.0 646.0 C521.5 638.2 526.0 617.0 526.0 617.0 C526.0 617.0 525.7 601.5 518.0 592.0 C510.3 582.5 491.3 562.8 480.0 560.0 Z" fill="#999999" />
<path d="M412.0 643.0 C412.0 643.0 417.9 662.9 423.7 671.4 C429.4 679.9 440.1 688.4 446.5 694.0 C452.9 699.6 456.9 701.8 462.0 705.0 C467.1 708.2 477.0 713.0 477.0 713.0 C477.0 713.0 484.6 702.0 484.6 702.0 C484.6 702.0 468.9 702.0 461.7 699.0 C454.5 696.0 447.7 690.5 441.4 684.0 C435.1 677.5 428.9 666.8 424.0 660.0 C419.1 653.2 412.0 643.0 412.0 643.0 Z" fill="#676767" />
<path d="M430.0 822.0 C433.5 815.5 445.3 806.7 449.0 806.0 C452.7 805.3 449.8 811.7 452.0 818.0 C454.2 824.3 458.3 835.0 462.0 844.0 C465.7 853.0 474.0 872.0 474.0 872.0 C474.0 872.0 440.0 872.0 440.0 872.0 C440.0 872.0 429.7 853.3 428.0 845.0 C426.3 836.7 426.5 828.5 430.0 822.0 Z" fill="#676767" />
<path d="M408.5 813.5 L449.0 783.0 L449.0 806.0 L416.0 834.0 Z" fill="#999999" stroke="#111" stroke-width="1" stroke-linejoin="round"/>
<path d="M350.0 845.0 C351.2 843.5 352.7 842.2 354.0 843.0 C355.3 843.8 354.5 845.2 358.0 850.0 C361.5 854.8 375.0 872.0 375.0 872.0 C375.0 872.0 349.0 872.0 349.0 872.0 C349.0 872.0 346.8 856.5 347.0 852.0 C347.2 847.5 348.8 846.5 350.0 845.0 Z" fill="#fff" stroke="#111" stroke-width="1" stroke-linejoin="round" />
<path d="M600.0 590.0 C612.4 585.8 649.5 590.0 649.5 590.0 C649.5 590.0 664.2 614.3 672.0 629.0 C679.8 643.7 687.8 662.0 696.0 678.0 C704.2 694.0 713.7 710.8 721.0 725.0 C728.3 739.2 740.0 763.0 740.0 763.0 C740.0 763.0 732.0 774.0 732.0 774.0 C732.0 774.0 733.3 762.2 728.0 759.0 C722.7 755.8 709.3 755.5 700.0 755.0 C690.7 754.5 680.8 754.5 672.0 756.0 C663.2 757.5 657.3 759.5 647.0 764.0 C636.7 768.5 622.2 776.7 610.0 783.0 C597.8 789.3 584.2 797.2 574.0 802.0 C563.8 806.8 549.0 812.0 549.0 812.0 C549.0 812.0 530.0 872.0 530.0 872.0 C530.0 872.0 500.0 872.0 500.0 872.0 C500.0 872.0 542.7 795.8 552.0 773.0 C561.3 750.2 554.8 747.7 556.0 735.0 C557.2 722.3 557.8 708.8 559.0 697.0 C560.2 685.2 562.0 673.5 563.0 664.0 C564.0 654.5 563.0 648.2 565.0 640.0 C567.0 631.8 569.2 623.3 575.0 615.0 C580.8 606.7 587.6 594.2 600.0 590.0 Z" fill="#fff" stroke="#111" stroke-width="1.35" stroke-linejoin="round" />
<path d="M628.0 615.0 C629.0 612.0 636.0 605.7 640.0 612.0 C644.0 618.3 646.7 638.7 652.0 653.0 C657.3 667.3 666.3 686.0 672.0 698.0 C677.7 710.0 682.0 719.0 686.0 725.0 C690.0 731.0 696.0 734.0 696.0 734.0 C696.0 734.0 689.7 735.7 684.0 737.0 C678.3 738.3 662.0 742.0 662.0 742.0 C662.0 742.0 663.5 733.5 663.0 727.0 C662.5 720.5 661.7 713.2 659.0 703.0 C656.3 692.8 651.2 678.2 647.0 666.0 C642.8 653.8 637.2 638.5 634.0 630.0 C630.8 621.5 627.0 618.0 628.0 615.0 Z" fill="#999999" />
<path d="M660.0 745.0 C662.2 742.0 667.0 740.5 672.0 741.0 C677.0 741.5 685.3 745.8 690.0 748.0 C694.7 750.2 703.0 752.7 700.0 754.0 C697.0 755.3 678.8 755.2 672.0 756.0 C665.2 756.8 659.0 759.0 659.0 759.0 C659.0 759.0 657.8 748.0 660.0 745.0 Z" fill="#676767" />
<path d="M663.0 740.0 C665.0 739.3 678.8 735.5 684.0 737.0 C689.2 738.5 687.7 746.5 694.0 749.0 C700.3 751.5 715.2 750.5 722.0 752.0 C728.8 753.5 732.0 756.2 735.0 758.0 C738.0 759.8 740.0 763.0 740.0 763.0 C740.0 763.0 732.0 774.0 732.0 774.0 C732.0 774.0 733.3 762.3 728.0 759.0 C722.7 755.7 706.3 755.8 700.0 754.0 C693.7 752.2 694.7 750.2 690.0 748.0 C685.3 745.8 676.5 742.3 672.0 741.0 C667.5 739.7 661.0 740.7 663.0 740.0 Z" fill="#999999" />
<path d="M598.0 604.0 C595.7 606.0 594.0 621.8 592.0 630.0 C590.0 638.2 587.7 645.8 586.0 653.0 C584.3 660.2 582.0 673.0 582.0 673.0 C582.0 673.0 585.5 665.5 588.0 660.0 C590.5 654.5 594.0 647.0 597.0 640.0 C600.0 633.0 605.8 624.0 606.0 618.0 C606.2 612.0 600.3 602.0 598.0 604.0 Z" fill="#999999" />
<path d="M554.7 412.0 C561.5 407.3 571.2 403.2 577.5 403.0 C583.8 402.8 588.5 406.0 592.7 410.7 C597.0 415.4 599.8 416.2 603.0 431.0 C606.2 445.8 610.5 481.8 611.8 499.5 C613.0 517.2 612.0 522.8 610.5 537.5 C609.0 552.2 603.6 576.8 603.0 588.0 C602.4 599.2 609.2 598.8 607.0 605.0 C604.8 611.2 595.7 619.2 590.0 625.0 C584.3 630.8 577.5 635.8 573.0 640.0 C568.5 644.2 570.8 652.5 563.0 650.0 C555.2 647.5 535.4 635.3 526.0 625.0 C516.6 614.7 513.2 598.3 506.5 588.0 C499.8 577.7 489.8 571.4 486.0 563.0 C482.2 554.6 481.7 544.7 484.0 537.5 C486.3 530.3 495.3 526.2 500.0 520.0 C504.7 513.8 508.4 509.8 512.0 500.0 C515.6 490.2 517.5 472.5 521.7 461.0 C525.9 449.5 531.5 439.2 537.0 431.0 C542.5 422.8 548.0 416.7 554.7 412.0 Z" fill="#999999" />
<path d="M545.0 578.0 C545.0 575.0 555.7 579.7 562.0 578.0 C568.3 576.3 576.3 573.0 582.6 568.0 C588.9 563.0 596.6 544.7 600.0 548.0 C603.4 551.3 601.8 578.5 603.0 588.0 C604.2 597.5 609.2 598.8 607.0 605.0 C604.8 611.2 595.7 619.2 590.0 625.0 C584.3 630.8 577.2 639.7 573.0 640.0 C568.8 640.3 565.2 631.5 565.0 627.0 C564.8 622.5 572.5 618.2 572.0 613.0 C571.5 607.8 566.5 601.8 562.0 596.0 C557.5 590.2 545.0 581.0 545.0 578.0 Z" fill="#999999" />
<path d="M590.0 600.0 C593.3 595.0 597.3 589.2 600.0 590.0 C602.7 590.8 606.3 600.8 606.0 605.0 C605.7 609.2 601.5 610.8 598.0 615.0 C594.5 619.2 588.0 629.2 585.0 630.0 C582.0 630.8 579.2 625.0 580.0 620.0 C580.8 615.0 586.7 605.0 590.0 600.0 Z" fill="#fff" />
<path d="M549.0 812.0 C549.0 812.0 563.8 806.8 574.0 802.0 C584.2 797.2 597.8 789.3 610.0 783.0 C622.2 776.7 636.7 768.4 647.0 764.0 C657.3 759.6 663.8 758.1 672.0 756.5 C680.2 754.9 687.8 754.0 696.0 754.6 C704.2 755.2 715.3 758.1 721.0 760.0 C726.7 761.9 727.7 760.0 730.0 766.0 C732.3 772.0 733.8 789.7 735.0 796.0 C736.2 802.3 739.3 800.0 737.0 804.0 C734.7 808.0 727.8 814.8 721.0 820.0 C714.2 825.2 706.3 830.7 696.0 835.0 C685.7 839.3 671.2 843.3 659.0 846.0 C646.8 848.7 635.2 850.3 623.0 851.0 C610.8 851.7 595.5 850.2 586.0 850.0 C576.5 849.8 571.0 849.5 566.0 850.0 C561.0 850.5 562.5 852.0 556.0 853.0 C549.5 854.0 527.0 856.0 527.0 856.0 C527.0 856.0 533.7 850.2 537.0 845.0 C540.3 839.8 545.0 830.5 547.0 825.0 C549.0 819.5 549.0 812.0 549.0 812.0 Z" fill="#676767" stroke="#111" stroke-width="1.35" stroke-linejoin="round" />
<path d="M549.0 812.0 C549.0 812.0 563.8 806.8 574.0 802.0 C584.2 797.2 597.8 789.3 610.0 783.0 C622.2 776.7 636.7 768.4 647.0 764.0 C657.3 759.6 663.8 758.1 672.0 756.5 C680.2 754.9 687.8 754.0 696.0 754.6 C704.2 755.2 715.3 758.1 721.0 760.0 C726.7 761.9 727.8 761.2 730.0 766.0 C732.2 770.8 734.0 789.0 734.0 789.0 C734.0 789.0 718.3 800.1 708.0 805.5 C697.7 810.9 686.2 817.0 672.0 821.5 C657.8 826.0 637.3 830.2 623.0 832.5 C608.7 834.8 595.0 835.0 586.0 835.0 C577.0 835.0 574.2 834.7 569.0 832.5 C563.8 830.3 558.3 825.4 555.0 822.0 C551.7 818.6 549.0 812.0 549.0 812.0 Z" fill="#999999" />
<path d="M561.0 815.0 C562.3 811.5 565.8 807.3 574.0 802.0 C582.2 796.7 597.8 789.3 610.0 783.0 C622.2 776.7 636.7 768.4 647.0 764.0 C657.3 759.6 663.8 758.1 672.0 756.5 C680.2 754.9 687.8 754.0 696.0 754.6 C704.2 755.2 716.2 757.8 721.0 760.0 C725.8 762.2 724.2 765.3 725.0 768.0 C725.8 770.7 728.3 771.8 725.5 776.0 C722.7 780.2 716.9 787.7 708.0 793.0 C699.1 798.3 686.2 803.7 672.0 808.0 C657.8 812.3 637.3 816.3 623.0 819.0 C608.7 821.7 595.5 823.3 586.0 824.0 C576.5 824.7 570.2 824.5 566.0 823.0 C561.8 821.5 559.7 818.5 561.0 815.0 Z" fill="#fff" />
<path d="M521.0 634.0 C521.0 634.0 520.7 645.3 518.0 651.0 C515.3 656.7 509.7 661.7 505.0 668.0 C500.3 674.3 495.5 679.5 490.0 689.0 C484.5 698.5 477.5 713.2 472.0 725.0 C466.5 736.8 460.7 749.5 457.0 760.0 C453.3 770.5 450.8 778.3 450.0 788.0 C449.2 797.7 450.0 808.7 452.0 818.0 C454.0 827.3 458.3 835.0 462.0 844.0 C465.7 853.0 474.0 872.0 474.0 872.0 C474.0 872.0 517.5 872.0 517.5 872.0 C517.5 872.0 524.2 855.8 528.0 849.0 C531.8 842.2 536.7 837.3 540.0 831.0 C543.3 824.7 546.0 820.7 548.0 811.0 C550.0 801.3 550.7 785.7 552.0 773.0 C553.3 760.3 554.8 747.7 556.0 735.0 C557.2 722.3 558.1 708.8 559.0 697.0 C559.9 685.2 560.9 672.3 561.5 664.0 C562.1 655.7 562.5 647.0 562.5 647.0 C562.5 647.0 521.0 634.0 521.0 634.0 Z" fill="#fff" stroke="#111" stroke-width="1.35" stroke-linejoin="round" />
<path d="M537.0 640.0 C537.0 640.0 536.2 652.7 533.0 658.0 C529.8 663.3 523.5 665.0 518.0 672.0 C512.5 679.0 504.3 691.7 500.0 700.0 C495.7 708.3 496.3 712.0 492.0 722.0 C487.7 732.0 477.8 751.2 474.0 760.0 C470.2 768.8 470.3 768.3 469.0 775.0 C467.7 781.7 466.3 792.0 466.0 800.0 C465.7 808.0 465.0 814.7 467.0 823.0 C469.0 831.3 475.0 841.8 478.0 850.0 C481.0 858.2 485.0 872.0 485.0 872.0 C485.0 872.0 497.0 872.0 497.0 872.0 C497.0 872.0 496.2 858.0 495.0 850.0 C493.8 842.0 490.8 832.3 490.0 824.0 C489.2 815.7 488.8 808.5 490.0 800.0 C491.2 791.5 494.5 781.3 497.0 773.0 C499.5 764.7 502.0 758.5 505.0 750.0 C508.0 741.5 510.3 733.7 515.0 722.0 C519.7 710.3 528.3 690.0 533.0 680.0 C537.7 670.0 540.8 668.2 543.0 662.0 C545.2 655.8 546.0 643.0 546.0 643.0 C546.0 643.0 537.0 640.0 537.0 640.0 Z" fill="#999999" />
<path d="M521.0 634.0 C521.0 634.0 520.7 645.3 518.0 651.0 C515.3 656.7 509.7 661.7 505.0 668.0 C500.3 674.3 495.5 679.5 490.0 689.0 C484.5 698.5 477.5 713.2 472.0 725.0 C466.5 736.8 460.7 749.5 457.0 760.0 C453.3 770.5 450.8 778.3 450.0 788.0 C449.2 797.7 450.0 808.7 452.0 818.0 C454.0 827.3 458.3 835.0 462.0 844.0 C465.7 853.0 474.0 872.0 474.0 872.0 C474.0 872.0 485.0 872.0 485.0 872.0 C485.0 872.0 481.0 858.2 478.0 850.0 C475.0 841.8 469.0 831.3 467.0 823.0 C465.0 814.7 465.7 808.0 466.0 800.0 C466.3 792.0 467.7 781.7 469.0 775.0 C470.3 768.3 470.2 768.8 474.0 760.0 C477.8 751.2 487.7 732.0 492.0 722.0 C496.3 712.0 495.7 708.3 500.0 700.0 C504.3 691.7 512.5 679.0 518.0 672.0 C523.5 665.0 529.8 663.3 533.0 658.0 C536.2 652.7 537.0 640.0 537.0 640.0 C537.0 640.0 521.0 634.0 521.0 634.0 Z" fill="#676767" />
<path d="M554.7 412.0 C558.9 408.0 558.2 408.5 562.0 407.0 C565.8 405.5 572.4 402.4 577.5 403.0 C582.6 403.6 588.5 406.0 592.7 410.7 C597.0 415.4 600.3 422.6 603.0 431.0 C605.7 439.4 607.5 449.6 609.0 461.0 C610.5 472.4 611.5 486.8 611.8 499.5 C612.0 512.2 612.4 529.5 610.5 537.5 C608.6 545.5 603.8 544.0 600.4 547.7 C597.0 551.5 593.0 556.6 590.0 560.0 C587.0 563.4 587.3 565.0 582.6 568.0 C577.9 571.0 568.8 576.7 562.0 578.0 C555.2 579.3 547.3 577.8 542.0 575.6 C536.7 573.4 533.5 569.3 530.0 565.0 C526.5 560.7 524.0 555.8 521.0 550.0 C518.0 544.2 513.8 538.0 512.0 530.0 C510.2 522.0 509.7 510.0 510.0 502.0 C510.3 494.0 512.0 488.8 514.0 482.0 C516.0 475.2 517.9 469.5 521.7 461.0 C525.5 452.5 531.5 439.2 537.0 431.0 C542.5 422.8 550.5 416.0 554.7 412.0 Z" fill="#fff" />
<path d="M554.7 412.0 C554.7 412.0 542.5 422.8 537.0 431.0 C531.5 439.2 525.5 452.5 521.7 461.0 C517.9 469.5 516.0 475.2 514.0 482.0 C512.0 488.8 510.3 494.0 510.0 502.0 C509.7 510.0 510.2 522.0 512.0 530.0 C513.8 538.0 518.0 544.2 521.0 550.0 C524.0 555.8 526.5 560.7 530.0 565.0 C533.5 569.3 542.0 575.6 542.0 575.6 C542.0 575.6 548.0 565.1 548.0 560.0 C548.0 554.9 543.7 550.0 542.0 545.0 C540.3 540.0 537.3 534.2 538.0 530.0 C538.7 525.8 543.0 523.0 546.0 520.0 C549.0 517.0 553.7 516.2 556.0 512.0 C558.3 507.8 560.0 500.7 560.0 495.0 C560.0 489.3 558.5 482.2 556.0 478.0 C553.5 473.8 549.0 472.7 545.0 470.0 C541.0 467.3 532.8 466.2 532.0 462.0 C531.2 457.8 537.3 450.3 540.0 445.0 C542.7 439.7 545.5 435.5 548.0 430.0 C550.5 424.5 554.7 412.0 554.7 412.0 Z" fill="#999999" />
<path d="M603.0 431.0 C603.0 431.0 607.5 449.6 609.0 461.0 C610.5 472.4 611.5 486.8 611.8 499.5 C612.0 512.2 612.4 529.5 610.5 537.5 C608.6 545.5 603.8 544.0 600.4 547.7 C597.0 551.5 593.0 556.6 590.0 560.0 C587.0 563.4 582.6 568.0 582.6 568.0 C582.6 568.0 582.9 556.3 585.0 550.0 C587.1 543.7 592.5 537.5 595.0 530.0 C597.5 522.5 598.7 513.3 600.0 505.0 C601.3 496.7 602.7 488.3 603.0 480.0 C603.3 471.7 602.0 463.2 602.0 455.0 C602.0 446.8 603.0 431.0 603.0 431.0 Z" fill="#999999" />
<path d="M519.0 468.0 C520.7 465.3 525.7 463.7 530.0 464.0 C534.3 464.3 540.7 467.7 545.0 470.0 C549.3 472.3 554.0 474.7 556.0 478.0 C558.0 481.3 558.8 487.7 557.0 490.0 C555.2 492.3 549.5 492.3 545.0 492.0 C540.5 491.7 534.2 490.0 530.0 488.0 C525.8 486.0 521.8 483.3 520.0 480.0 C518.2 476.7 517.3 470.7 519.0 468.0 Z" fill="#676767" />
<path d="M577.0 480.0 C579.0 476.3 586.5 476.7 592.0 476.0 C597.5 475.3 606.8 472.0 610.0 476.0 C613.2 480.0 611.7 494.0 611.0 500.0 C610.3 506.0 609.2 510.7 606.0 512.0 C602.8 513.3 596.3 510.3 592.0 508.0 C587.7 505.7 582.5 502.7 580.0 498.0 C577.5 493.3 575.0 483.7 577.0 480.0 Z" fill="#999999" />
<path d="M562.0 479.0 C562.0 479.0 575.3 488.5 577.0 494.0 C578.7 499.5 573.7 506.8 572.0 512.0 C570.3 517.2 568.2 521.0 567.0 525.0 C565.8 529.0 565.0 536.0 565.0 536.0 C565.0 536.0 560.7 526.0 560.0 520.0 C559.3 514.0 560.7 506.8 561.0 500.0 C561.3 493.2 562.0 479.0 562.0 479.0 Z" fill="#676767" />
<path d="M538.0 540.0 C538.7 537.8 547.5 536.5 552.0 537.0 C556.5 537.5 560.3 543.3 565.0 543.0 C569.7 542.7 575.8 534.7 580.0 535.0 C584.2 535.3 589.2 541.7 590.0 545.0 C590.8 548.3 589.2 553.8 585.0 555.0 C580.8 556.2 571.2 552.8 565.0 552.0 C558.8 551.2 552.5 552.0 548.0 550.0 C543.5 548.0 537.3 542.2 538.0 540.0 Z" fill="#999999" />
<path d="M545.0 386.6 C545.0 386.6 551.6 381.1 557.0 379.0 C562.4 376.9 570.7 374.4 577.5 374.0 C584.3 373.6 591.6 374.2 598.0 376.5 C604.4 378.8 610.1 382.8 615.6 388.0 C621.1 393.2 626.8 400.4 631.0 408.0 C635.2 415.6 637.8 423.8 641.0 433.5 C644.2 443.2 647.9 455.5 650.0 466.5 C652.1 477.5 653.0 487.7 653.6 499.5 C654.2 511.3 654.0 524.8 653.6 537.5 C653.2 550.2 652.1 562.9 651.0 575.6 C649.9 588.3 648.0 604.1 647.0 613.6 C646.0 623.1 644.7 632.6 644.7 632.6 C644.7 632.6 640.1 618.9 638.4 613.6 C636.7 608.3 634.6 601.0 634.6 601.0 C634.6 601.0 629.7 614.1 627.0 620.0 C624.3 625.9 618.6 636.4 618.6 636.4 C618.6 636.4 614.4 621.7 611.8 613.6 C609.2 605.5 605.0 594.4 603.0 588.0 C601.0 581.6 598.8 583.4 600.0 575.0 C601.2 566.6 608.5 550.1 610.5 537.5 C612.5 524.9 612.0 512.2 611.8 499.5 C611.5 486.8 610.5 472.4 609.0 461.0 C607.5 449.6 605.7 439.4 603.0 431.0 C600.3 422.6 597.0 415.4 592.7 410.7 C588.5 406.0 582.6 403.6 577.5 403.0 C572.4 402.4 565.8 405.5 562.0 407.0 C558.2 408.5 554.7 412.0 554.7 412.0 C554.7 412.0 542.5 422.8 537.0 431.0 C531.5 439.2 525.5 452.5 521.7 461.0 C517.9 469.5 516.0 475.2 514.0 482.0 C512.0 488.8 512.3 495.7 510.0 502.0 C507.7 508.3 504.3 514.1 500.0 520.0 C495.7 525.9 486.3 528.2 484.0 537.5 C481.7 546.8 485.0 565.0 486.0 575.6 C487.0 586.2 488.9 593.2 490.0 601.0 C491.1 608.8 492.6 622.5 492.6 622.5 C492.6 622.5 485.0 610.9 481.0 603.5 C477.0 596.1 468.5 578.0 468.5 578.0 C468.5 578.0 464.5 583.2 463.4 588.0 C462.3 592.8 462.0 607.0 462.0 607.0 C462.0 607.0 459.6 600.3 456.0 593.0 C452.4 585.7 445.3 572.2 440.6 563.0 C435.9 553.8 430.5 543.8 428.0 537.5 C425.5 531.2 424.6 530.1 425.4 525.0 C426.2 519.9 428.8 513.8 433.0 507.0 C437.2 500.2 443.5 492.8 450.7 484.0 C457.9 475.2 468.4 464.1 476.0 454.0 C483.6 443.9 490.1 431.9 496.4 423.4 C502.7 414.9 508.1 408.5 514.0 403.0 C519.9 397.5 526.8 393.1 532.0 390.4 C537.2 387.7 545.0 386.6 545.0 386.6 Z" fill="#fff" stroke="#111" stroke-width="1.35" stroke-linejoin="round" />
<path d="M554.0 411.0 C554.0 411.0 554.0 403.0 556.0 400.0 C558.0 397.0 562.0 394.3 566.0 393.0 C570.0 391.7 575.7 391.2 580.0 392.0 C584.3 392.8 588.7 395.0 592.0 398.0 C595.3 401.0 597.8 405.5 600.0 410.0 C602.2 414.5 605.0 425.0 605.0 425.0 C605.0 425.0 599.8 417.8 597.0 415.0 C594.2 412.2 591.3 409.7 588.0 408.0 C584.7 406.3 580.7 405.2 577.0 405.0 C573.3 404.8 569.8 406.0 566.0 407.0 C562.2 408.0 554.0 411.0 554.0 411.0 Z" fill="#999999" />
<path d="M600.0 410.0 C600.0 410.0 601.5 422.5 603.0 431.0 C604.5 439.5 607.5 449.6 609.0 461.0 C610.5 472.4 611.5 486.8 611.8 499.5 C612.0 512.2 612.5 524.9 610.5 537.5 C608.5 550.1 601.2 566.6 600.0 575.0 C598.8 583.4 601.0 581.6 603.0 588.0 C605.0 594.4 609.2 605.5 611.8 613.6 C614.4 621.7 618.6 636.4 618.6 636.4 C618.6 636.4 623.4 627.7 624.0 620.0 C624.6 612.3 621.8 603.3 622.0 590.0 C622.2 576.7 624.7 555.0 625.0 540.0 C625.3 525.0 624.8 513.3 624.0 500.0 C623.2 486.7 622.0 471.7 620.0 460.0 C618.0 448.3 615.3 438.3 612.0 430.0 C608.7 421.7 600.0 410.0 600.0 410.0 Z" fill="#999999" />
<path d="M634.6 601.0 C634.6 601.0 636.7 608.3 638.4 613.6 C640.1 618.9 644.7 632.6 644.7 632.6 C644.7 632.6 641.8 610.4 641.0 600.0 C640.2 589.6 640.8 572.5 640.0 570.0 C639.2 567.5 636.9 579.8 636.0 585.0 C635.1 590.2 634.6 601.0 634.6 601.0 Z" fill="#999999" />
<path d="M425.4 525.0 C426.2 519.9 428.8 512.2 433.0 507.0 C437.2 501.8 450.7 494.0 450.7 494.0 C450.7 494.0 443.1 509.8 441.0 515.0 C438.9 520.2 437.2 518.7 438.0 525.0 C438.8 531.3 442.6 543.5 445.6 552.7 C448.6 561.9 453.3 571.0 456.0 580.0 C458.7 589.0 462.0 607.0 462.0 607.0 C462.0 607.0 459.6 600.3 456.0 593.0 C452.4 585.7 445.3 572.2 440.6 563.0 C435.9 553.8 430.5 543.8 428.0 537.5 C425.5 531.2 424.6 530.1 425.4 525.0 Z" fill="#676767" />
<path d="M520.0 420.0 C520.0 420.0 507.7 435.8 503.0 445.0 C498.3 454.2 494.8 465.0 492.0 475.0 C489.2 485.0 487.3 494.7 486.0 505.0 C484.7 515.3 484.0 537.0 484.0 537.0 C484.0 537.0 489.5 519.5 492.0 510.0 C494.5 500.5 496.3 490.0 499.0 480.0 C501.7 470.0 504.5 460.0 508.0 450.0 C511.5 440.0 520.0 420.0 520.0 420.0 Z" fill="#999999" />
<path d="M470.0 520.0 C470.0 520.0 468.5 578.0 468.5 578.0 C468.5 578.0 477.0 596.1 481.0 603.5 C485.0 610.9 492.6 622.5 492.6 622.5 C492.6 622.5 489.4 608.8 488.0 600.0 C486.6 591.2 485.3 579.2 484.0 570.0 C482.7 560.8 480.3 554.2 480.0 545.0 C479.7 535.8 482.0 515.0 482.0 515.0 C482.0 515.0 478.0 529.2 476.0 530.0 C474.0 530.8 470.0 520.0 470.0 520.0 Z" fill="#999999" />
<path d="M519.0 499.4 C519.0 499.4 513.1 506.3 510.6 510.4 C508.1 514.5 506.1 520.6 503.8 524.0 C501.5 527.4 499.5 529.9 497.0 530.7 C494.5 531.5 490.9 526.2 488.6 529.0 C486.4 531.8 485.2 541.7 483.5 547.6 C481.8 553.5 477.9 560.1 478.5 564.6 C479.1 569.1 482.8 570.8 487.0 574.7 C491.2 578.6 498.5 583.2 503.8 588.2 C509.1 593.2 515.9 599.9 519.0 605.0 C522.1 610.1 522.0 614.2 522.4 618.7 C522.8 623.2 521.6 632.0 521.6 632.0 C521.6 632.0 562.5 647.0 562.5 647.0 C562.5 647.0 562.1 636.1 563.0 632.2 C563.9 628.3 566.6 626.6 568.0 623.8 C569.4 621.0 571.5 618.7 571.5 615.3 C571.5 611.9 570.2 607.5 568.0 603.5 C565.8 599.5 561.9 594.7 558.0 591.6 C554.1 588.5 548.9 587.4 544.4 584.9 C539.9 582.4 534.3 579.8 530.9 576.4 C527.5 573.0 525.7 568.5 524.0 564.6 C522.3 560.7 520.7 552.7 520.7 552.7 C520.7 552.7 532.6 539.2 532.6 539.2 C532.6 539.2 517.4 546.0 517.4 546.0 C517.4 546.0 521.1 534.4 522.4 529.0 C523.7 523.6 525.0 513.8 525.0 513.8 C525.0 513.8 521.1 518.9 520.7 517.2 C520.3 515.5 522.7 506.7 522.4 503.7 C522.1 500.7 519.0 499.4 519.0 499.4 Z" fill="#999999" stroke="#111" stroke-width="1.35" stroke-linejoin="round" />
<path d="M488.6 529.0 C486.6 531.0 485.2 541.7 483.5 547.6 C481.8 553.5 477.9 560.1 478.5 564.6 C479.1 569.1 482.8 570.8 487.0 574.7 C491.2 578.6 498.5 583.2 503.8 588.2 C509.1 593.2 515.9 599.9 519.0 605.0 C522.1 610.1 522.0 614.2 522.4 618.7 C522.8 623.2 521.6 632.0 521.6 632.0 C521.6 632.0 530.0 634.0 530.0 634.0 C530.0 634.0 530.2 619.8 527.5 613.6 C524.8 607.4 518.8 603.2 514.0 596.7 C509.2 590.2 502.4 581.5 498.7 574.7 C495.0 567.9 492.6 562.5 492.0 556.0 C491.4 549.5 496.0 540.3 495.4 535.8 C494.8 531.3 490.6 527.0 488.6 529.0 Z" fill="#676767" />
<path d="M522.4 559.5 C522.1 557.8 522.6 561.8 524.0 564.6 C525.4 567.4 527.5 573.0 530.9 576.4 C534.3 579.8 539.9 582.4 544.4 584.9 C548.9 587.4 554.1 588.5 558.0 591.6 C561.9 594.7 565.8 599.5 568.0 603.5 C570.2 607.5 571.5 611.9 571.5 615.3 C571.5 618.7 569.4 621.0 568.0 623.8 C566.6 626.6 563.9 628.3 563.0 632.2 C562.1 636.1 562.5 647.0 562.5 647.0 C562.5 647.0 544.4 642.4 544.4 642.4 C544.4 642.4 544.9 628.6 546.0 623.8 C547.1 619.0 550.6 617.3 551.2 613.6 C551.8 609.9 551.8 606.0 549.5 601.8 C547.2 597.6 541.6 592.7 537.6 588.2 C533.6 583.7 528.3 579.5 525.8 574.7 C523.3 569.9 522.7 561.2 522.4 559.5 Z" fill="#fff" />
<path d="M520.7 638.0 L541.0 639.0 L563.0 647.4 L561.3 663.5 L541.0 654.2 L519.0 650.8 Z" fill="#999999" stroke="#111" stroke-width="0.9"/>
<path d="M542.7 639.5 L563.0 647.4 L561.3 663.5 L542.0 654.6 Z" fill="#fff"/>
<ellipse cx="513" cy="645" rx="7.2" ry="11.3" transform="rotate(12 513 645)" fill="#7a7a7a" stroke="#111" stroke-width="1.6"/>
<ellipse cx="513" cy="645" rx="4" ry="7.4" transform="rotate(12 513 645)" fill="none" stroke="#222" stroke-width="0.9"/><path d="M545.0 386.6 C545.0 386.6 551.6 381.1 557.0 379.0 C562.4 376.9 570.7 374.4 577.5 374.0 C584.3 373.6 591.6 374.2 598.0 376.5 C604.4 378.8 610.1 382.8 615.6 388.0 C621.1 393.2 626.8 400.4 631.0 408.0 C635.2 415.6 637.8 423.8 641.0 433.5 C644.2 443.2 647.9 455.5 650.0 466.5 C652.1 477.5 653.0 487.7 653.6 499.5 C654.2 511.3 654.0 524.8 653.6 537.5 C653.2 550.2 652.1 562.9 651.0 575.6 C649.9 588.3 648.0 604.1 647.0 613.6 C646.0 623.1 644.7 632.6 644.7 632.6 C644.7 632.6 640.1 618.9 638.4 613.6 C636.7 608.3 634.6 601.0 634.6 601.0 C634.6 601.0 629.7 614.1 627.0 620.0 C624.3 625.9 618.6 636.4 618.6 636.4 C618.6 636.4 614.4 621.7 611.8 613.6 C609.2 605.5 605.0 594.4 603.0 588.0 C601.0 581.6 598.8 583.4 600.0 575.0 C601.2 566.6 608.5 550.1 610.5 537.5 C612.5 524.9 612.0 512.2 611.8 499.5 C611.5 486.8 610.5 472.4 609.0 461.0 C607.5 449.6 605.7 439.4 603.0 431.0 C600.3 422.6 597.0 415.4 592.7 410.7 C588.5 406.0 582.6 403.6 577.5 403.0 C572.4 402.4 565.8 405.5 562.0 407.0 C558.2 408.5 554.7 412.0 554.7 412.0 C554.7 412.0 542.5 422.8 537.0 431.0 C531.5 439.2 525.5 452.5 521.7 461.0 C517.9 469.5 516.0 475.2 514.0 482.0 C512.0 488.8 512.3 495.7 510.0 502.0 C507.7 508.3 504.3 514.1 500.0 520.0 C495.7 525.9 486.3 528.2 484.0 537.5 C481.7 546.8 485.0 565.0 486.0 575.6 C487.0 586.2 488.9 593.2 490.0 601.0 C491.1 608.8 492.6 622.5 492.6 622.5 C492.6 622.5 485.0 610.9 481.0 603.5 C477.0 596.1 468.5 578.0 468.5 578.0 C468.5 578.0 464.5 583.2 463.4 588.0 C462.3 592.8 462.0 607.0 462.0 607.0 C462.0 607.0 459.6 600.3 456.0 593.0 C452.4 585.7 445.3 572.2 440.6 563.0 C435.9 553.8 430.5 543.8 428.0 537.5 C425.5 531.2 424.6 530.1 425.4 525.0 C426.2 519.9 428.8 513.8 433.0 507.0 C437.2 500.2 443.5 492.8 450.7 484.0 C457.9 475.2 468.4 464.1 476.0 454.0 C483.6 443.9 490.1 431.9 496.4 423.4 C502.7 414.9 508.1 408.5 514.0 403.0 C519.9 397.5 526.8 393.1 532.0 390.4 C537.2 387.7 545.0 386.6 545.0 386.6 Z" fill="none" stroke="#111" stroke-width="1.1" stroke-linejoin="round"/>
<path d="M519.0 499.4 C519.0 499.4 513.1 506.3 510.6 510.4 C508.1 514.5 506.1 520.6 503.8 524.0 C501.5 527.4 499.5 529.9 497.0 530.7 C494.5 531.5 490.9 526.2 488.6 529.0 C486.4 531.8 485.2 541.7 483.5 547.6 C481.8 553.5 477.9 560.1 478.5 564.6 C479.1 569.1 482.8 570.8 487.0 574.7 C491.2 578.6 498.5 583.2 503.8 588.2 C509.1 593.2 515.9 599.9 519.0 605.0 C522.1 610.1 522.0 614.2 522.4 618.7 C522.8 623.2 521.6 632.0 521.6 632.0 C521.6 632.0 562.5 647.0 562.5 647.0 C562.5 647.0 562.1 636.1 563.0 632.2 C563.9 628.3 566.6 626.6 568.0 623.8 C569.4 621.0 571.5 618.7 571.5 615.3 C571.5 611.9 570.2 607.5 568.0 603.5 C565.8 599.5 561.9 594.7 558.0 591.6 C554.1 588.5 548.9 587.4 544.4 584.9 C539.9 582.4 534.3 579.8 530.9 576.4 C527.5 573.0 525.7 568.5 524.0 564.6 C522.3 560.7 520.7 552.7 520.7 552.7 C520.7 552.7 532.6 539.2 532.6 539.2 C532.6 539.2 517.4 546.0 517.4 546.0 C517.4 546.0 521.1 534.4 522.4 529.0 C523.7 523.6 525.0 513.8 525.0 513.8 C525.0 513.8 521.1 518.9 520.7 517.2 C520.3 515.5 522.7 506.7 522.4 503.7 C522.1 500.7 519.0 499.4 519.0 499.4 Z" fill="none" stroke="#111" stroke-width="1.1" stroke-linejoin="round"/>
<path d="M545.0 386.6 C545.0 386.6 546.4 393.8 548.0 398.0 C549.6 402.2 554.7 412.0 554.7 412.0" fill="none" stroke="#111" stroke-width="1" stroke-linecap="round" />
<path d="M566.0 384.0 C566.0 384.0 578.7 379.7 585.0 381.0 C591.3 382.3 598.2 386.3 604.0 392.0 C609.8 397.7 615.7 406.2 620.0 415.0 C624.3 423.8 630.0 445.0 630.0 445.0" fill="none" stroke="#111" stroke-width="0.9" stroke-linecap="round" />
<path d="M630.0 470.0 C630.0 470.0 637.8 503.3 640.0 520.0 C642.2 536.7 642.8 555.0 643.0 570.0 C643.2 585.0 641.0 610.0 641.0 610.0" fill="none" stroke="#111" stroke-width="0.8" stroke-linecap="round" />
<path d="M497.0 440.0 C497.0 440.0 477.5 475.0 470.0 490.0 C462.5 505.0 455.8 519.2 452.0 530.0 C448.2 540.8 447.0 555.0 447.0 555.0" fill="none" stroke="#111" stroke-width="0.8" stroke-linecap="round" />
<path d="M505.0 470.0 C505.0 470.0 494.5 495.0 490.0 510.0 C485.5 525.0 479.7 545.8 478.0 560.0 C476.3 574.2 480.0 595.0 480.0 595.0" fill="none" stroke="#111" stroke-width="0.8" stroke-linecap="round" />
<path d="M519.0 463.0 C519.0 463.0 524.5 461.0 528.0 461.0 C531.5 461.0 535.2 460.8 540.0 463.0 C544.8 465.2 557.0 474.0 557.0 474.0" fill="none" stroke="#111" stroke-width="2.6" stroke-linecap="round" />
<path d="M577.5 478.0 C577.5 478.0 586.5 475.2 592.0 474.5 C597.5 473.8 610.5 474.0 610.5 474.0" fill="none" stroke="#111" stroke-width="2.4" stroke-linecap="round" />
<path d="M521.0 483.0 C521.0 483.0 527.5 487.0 532.0 488.0 C536.5 489.0 543.8 489.2 548.0 489.0 C552.2 488.8 557.0 487.0 557.0 487.0" fill="none" stroke="#111" stroke-width="1.6" stroke-linecap="round" />
<path d="M586.0 497.0 C586.0 497.0 593.8 499.7 598.0 500.0 C602.2 500.3 611.0 499.0 611.0 499.0" fill="none" stroke="#111" stroke-width="1.6" stroke-linecap="round" />
<ellipse cx="598" cy="490" rx="7.5" ry="6" fill="#fff"/>
<path d="M586.0 497.0 C586.0 497.0 593.8 499.7 598.0 500.0 C602.2 500.3 611.0 499.0 611.0 499.0" fill="none" stroke="#111" stroke-width="1.6" stroke-linecap="round" />
<path d="M524.0 492.0 C524.0 492.0 531.7 496.2 536.0 497.0 C540.3 497.8 550.0 497.0 550.0 497.0" fill="none" stroke="#111" stroke-width="0.8" stroke-linecap="round" />
<path d="M527.0 500.0 C527.0 500.0 534.5 504.3 538.0 505.0 C541.5 505.7 548.0 504.0 548.0 504.0" fill="none" stroke="#111" stroke-width="0.8" stroke-linecap="round" />
<path d="M590.0 506.0 C590.0 506.0 596.8 508.8 600.0 509.0 C603.2 509.2 609.0 507.0 609.0 507.0" fill="none" stroke="#111" stroke-width="0.8" stroke-linecap="round" />
<path d="M560.0 432.0 C560.0 432.0 573.3 428.2 580.0 428.0 C586.7 427.8 600.0 431.0 600.0 431.0" fill="none" stroke="#111" stroke-width="0.8" stroke-linecap="round" />
<path d="M551.0 440.0 C551.0 440.0 568.3 436.2 577.0 436.0 C585.7 435.8 603.0 439.0 603.0 439.0" fill="none" stroke="#111" stroke-width="0.8" stroke-linecap="round" />
<path d="M546.0 448.0 C546.0 448.0 565.3 444.2 575.0 444.0 C584.7 443.8 604.0 447.0 604.0 447.0" fill="none" stroke="#111" stroke-width="0.8" stroke-linecap="round" />
<path d="M548.0 455.0 C548.0 455.0 567.3 451.2 577.0 451.0 C586.7 450.8 606.0 454.0 606.0 454.0" fill="none" stroke="#111" stroke-width="0.8" stroke-linecap="round" />
<path d="M566.0 424.0 C566.0 424.0 572.0 420.2 575.0 420.0 C578.0 419.8 584.0 423.0 584.0 423.0" fill="none" stroke="#111" stroke-width="0.8" stroke-linecap="round" />
<path d="M562.0 479.0 C562.0 479.0 557.7 496.5 556.0 505.0 C554.3 513.5 552.0 524.2 552.0 530.0 C552.0 535.8 553.8 538.0 556.0 540.0 C558.2 542.0 562.0 542.3 565.0 542.0 C568.0 541.7 572.0 539.8 574.0 538.0 C576.0 536.2 577.0 531.0 577.0 531.0" fill="none" stroke="#111" stroke-width="1.2" stroke-linecap="round" />
<path d="M537.0 540.0 C537.0 540.0 543.8 544.7 548.0 546.0 C552.2 547.3 557.5 548.0 562.0 548.0 C566.5 548.0 571.3 547.2 575.0 546.0 C578.7 544.8 584.0 541.0 584.0 541.0" fill="none" stroke="#111" stroke-width="1.3" stroke-linecap="round" />
<path d="M544.0 553.0 C544.0 553.0 551.7 556.5 556.0 557.0 C560.3 557.5 570.0 556.0 570.0 556.0" fill="none" stroke="#111" stroke-width="0.8" stroke-linecap="round" />
<path d="M586.0 532.0 C586.0 532.0 591.7 538.0 592.0 542.0 C592.3 546.0 588.0 556.0 588.0 556.0" fill="none" stroke="#111" stroke-width="0.8" stroke-linecap="round" />
<path d="M530.0 565.0 C530.0 565.0 536.7 573.4 542.0 575.6 C547.3 577.8 555.2 579.3 562.0 578.0 C568.8 576.7 576.2 573.0 582.6 568.0 C589.0 563.0 600.4 547.7 600.4 547.7" fill="none" stroke="#111" stroke-width="1.1" stroke-linecap="round" />
<path d="M520.7 517.2 C520.7 517.2 517.2 530.2 515.7 535.8 C514.2 541.4 511.4 551.0 511.4 551.0" fill="none" stroke="#111" stroke-width="1" stroke-linecap="round" />
<path d="M503.8 524.0 C503.8 524.0 502.6 539.7 502.0 547.6 C501.4 555.5 500.4 571.3 500.4 571.3" fill="none" stroke="#111" stroke-width="0.9" stroke-linecap="round" />
<path d="M497.0 530.7 C497.0 530.7 494.0 544.8 493.7 551.0 C493.4 557.2 495.4 568.0 495.4 568.0" fill="none" stroke="#111" stroke-width="0.9" stroke-linecap="round" />
<path d="M517.4 546.0 C517.4 546.0 513.6 556.0 513.0 560.0 C512.4 564.0 514.0 570.0 514.0 570.0" fill="none" stroke="#111" stroke-width="0.9" stroke-linecap="round" />
<path d="M524.0 564.6 C524.0 564.6 527.5 573.0 530.9 576.4 C534.3 579.8 539.9 582.4 544.4 584.9 C548.9 587.4 554.1 588.5 558.0 591.6 C561.9 594.7 565.8 599.5 568.0 603.5 C570.2 607.5 571.5 611.9 571.5 615.3 C571.5 618.7 569.4 621.0 568.0 623.8 C566.6 626.6 563.9 628.3 563.0 632.2 C562.1 636.1 562.5 647.0 562.5 647.0" fill="none" stroke="#111" stroke-width="1.1" stroke-linecap="round" />
<path d="M522.4 618.7 C522.4 618.7 530.1 617.1 534.0 616.0 C537.9 614.9 546.0 612.0 546.0 612.0" fill="none" stroke="#111" stroke-width="0.8" stroke-linecap="round" />
<path d="M523.0 624.0 L536.0 622.0" fill="none" stroke="#111" stroke-width="0.8" stroke-linecap="round" />
<path d="M576.0 629.0 C576.0 629.0 585.7 622.8 590.0 620.0 C594.3 617.2 601.7 612.0 601.7 612.0" fill="none" stroke="#111" stroke-width="1" stroke-linecap="round" />
<path d="M620.0 644.0 C620.0 644.0 603.7 654.5 598.0 661.0 C592.3 667.5 586.0 683.0 586.0 683.0" fill="none" stroke="#111" stroke-width="1.1" stroke-linecap="round" />
<path d="M612.0 600.0 C612.0 600.0 618.7 617.7 620.0 625.0 C621.3 632.3 619.0 642.0 620.0 644.0 C621.0 646.0 623.8 640.3 626.0 637.0 C628.2 633.7 633.0 624.0 633.0 624.0" fill="none" stroke="#111" stroke-width="1" stroke-linecap="round" />
<path d="M583.4 675.6 C583.4 675.6 589.9 692.0 593.2 702.6 C596.5 713.2 601.2 727.2 603.0 739.4 C604.8 751.6 604.2 767.9 604.2 776.0 C604.2 784.1 603.0 788.0 603.0 788.0" fill="none" stroke="#111" stroke-width="1.1" stroke-linecap="round" />
<path d="M559.0 661.0 C559.0 661.0 578.1 679.0 583.4 690.0 C588.7 701.0 588.9 714.7 590.7 727.0 C592.5 739.3 594.0 753.0 594.4 764.0 C594.8 775.0 593.2 793.0 593.2 793.0" fill="none" stroke="#111" stroke-width="1.1" stroke-linecap="round" />
<circle cx="587" cy="697.7" r="4.2" fill="#fff" stroke="#111" stroke-width="1.2"/><circle cx="598.8" cy="764" r="4.2" fill="#fff" stroke="#111" stroke-width="1.2"/>
<path d="M633.6 626.6 C633.6 626.6 642.7 653.3 647.0 666.0 C651.3 678.7 656.7 692.4 659.4 702.6 C662.1 712.8 663.0 718.0 663.0 727.0 C663.0 736.0 659.4 756.5 659.4 756.5" fill="none" stroke="#111" stroke-width="1.1" stroke-linecap="round" />
<path d="M661.8 741.8 C661.8 741.8 676.2 738.2 684.0 737.0 C691.8 735.8 701.5 734.6 708.4 734.4 C715.3 734.2 725.5 735.7 725.5 735.7" fill="none" stroke="#111" stroke-width="1" stroke-linecap="round" />
<path d="M659.4 759.0 C659.4 759.0 675.8 755.2 684.0 754.6 C692.2 754.0 701.1 754.6 708.4 755.3 C715.7 756.0 722.7 757.7 728.0 759.0 C733.3 760.3 740.0 763.0 740.0 763.0" fill="none" stroke="#111" stroke-width="1" stroke-linecap="round" />
<path d="M546.0 668.0 C546.0 668.0 543.3 683.8 542.0 690.0 C540.7 696.2 538.0 705.0 538.0 705.0" fill="none" stroke="#111" stroke-width="0.8" stroke-linecap="round" />
<path d="M543.0 808.0 C543.0 808.0 537.5 823.2 535.0 830.0 C532.5 836.8 528.0 849.0 528.0 849.0" fill="none" stroke="#111" stroke-width="0.8" stroke-linecap="round" />
<path d="M590.0 843.0 C590.0 843.0 625.0 840.5 640.0 838.0 C655.0 835.5 669.2 831.5 680.0 828.0 C690.8 824.5 705.0 817.0 705.0 817.0" fill="none" stroke="#111" stroke-width="0.9" stroke-linecap="round" />
<path d="M581.0 852.0 L578.5 863.0" fill="none" stroke="#111" stroke-width="1" stroke-linecap="round" />
<path d="M628.7 851.0 L625.0 863.0" fill="none" stroke="#111" stroke-width="1" stroke-linecap="round" />
<path d="M432.0 826.0 C432.0 826.0 427.3 836.0 428.0 840.0 C428.7 844.0 432.0 847.0 436.0 850.0 C440.0 853.0 452.0 858.0 452.0 858.0" fill="none" stroke="#111" stroke-width="1" stroke-linecap="round" />
<path d="M440.0 832.0 C440.0 832.0 436.8 842.0 438.0 846.0 C439.2 850.0 443.0 853.7 447.0 856.0 C451.0 858.3 462.0 860.0 462.0 860.0" fill="none" stroke="#111" stroke-width="1" stroke-linecap="round" />
<path d="M408.5 813.5 L449.0 783.0" fill="none" stroke="#111" stroke-width="0.9" stroke-linecap="round" />
<path d="M416.0 834.0 L449.0 806.0" fill="none" stroke="#111" stroke-width="0.9" stroke-linecap="round" />
<path d="M366.0 650.0 C366.0 650.0 369.0 698.3 372.0 720.0 C375.0 741.7 379.7 761.7 384.0 780.0 C388.3 798.3 398.0 830.0 398.0 830.0" fill="none" stroke="#111" stroke-width="0.9" stroke-linecap="round" /></g>
<g transform="translate(480,-5)" filter="url(#pb)"><path d="M347 840 L360 846 L378 870 L347 870 Z" fill="#8b8270"/><path d="M470 600 L600 590 L650 600 L700 700 L660 780 L560 870 L450 870 L440 700 Z" fill="#8a7864"/><path d="M500 870 L530 845 L548 825 L600 835 L645 840 L632 870 Z" fill="#6a5a44"/><path d="M603.5 835 L601 870" stroke="#8f8571" stroke-width="7" fill="none"/><path d="M660 742 L726 735 L741 763 L733 777 L700 768 L660 761 Z" fill="#8f8571"/><path d="M490.0 560.0 C477.0 553.0 450.5 549.8 440.0 548.0 C429.5 546.2 432.0 547.0 427.0 549.0 C422.0 551.0 414.8 556.5 410.0 560.0 C405.2 563.5 403.3 562.8 398.0 570.0 C392.7 577.2 383.5 590.3 378.0 603.0 C372.5 615.7 368.0 630.3 365.0 646.0 C362.0 661.7 361.2 675.8 360.0 697.0 C358.8 718.2 358.8 748.5 358.0 773.0 C357.2 797.5 355.7 827.5 355.0 844.0 C354.3 860.5 354.0 872.0 354.0 872.0 C354.0 872.0 480.0 872.0 480.0 872.0 C480.0 872.0 466.7 853.0 462.0 844.0 C457.3 835.0 454.0 827.3 452.0 818.0 C450.0 808.7 449.2 797.7 450.0 788.0 C450.8 778.3 453.3 770.5 457.0 760.0 C460.7 749.5 466.5 736.8 472.0 725.0 C477.5 713.2 484.5 699.2 490.0 689.0 C495.5 678.8 500.3 671.2 505.0 664.0 C509.7 656.8 514.5 653.8 518.0 646.0 C521.5 638.2 526.0 617.0 526.0 617.0 C526.0 617.0 524.0 599.5 518.0 590.0 C512.0 580.5 503.0 567.0 490.0 560.0 Z" fill="url(#backg)" />
<path d="M480.0 560.0 C468.7 557.2 457.3 569.8 450.0 575.0 C442.7 580.2 443.0 584.2 436.0 591.0 C429.0 597.8 415.0 605.5 408.0 616.0 C401.0 626.5 396.8 640.5 394.0 654.0 C391.2 667.5 391.0 683.5 391.0 697.0 C391.0 710.5 392.0 720.2 394.0 735.0 C396.0 749.8 400.6 772.9 403.0 786.0 C405.4 799.1 408.5 813.5 408.5 813.5 C408.5 813.5 416.0 834.0 416.0 834.0 C416.0 834.0 443.5 812.5 449.0 806.0 C454.5 799.5 448.8 798.0 449.0 795.0 C449.2 792.0 448.7 793.8 450.0 788.0 C451.3 782.2 453.3 770.5 457.0 760.0 C460.7 749.5 466.5 736.8 472.0 725.0 C477.5 713.2 484.5 699.2 490.0 689.0 C495.5 678.8 500.3 671.2 505.0 664.0 C509.7 656.8 514.5 653.8 518.0 646.0 C521.5 638.2 526.0 617.0 526.0 617.0 C526.0 617.0 525.7 601.5 518.0 592.0 C510.3 582.5 491.3 562.8 480.0 560.0 Z" fill="#6d5d47" />
<path d="M412.0 643.0 C412.0 643.0 417.9 662.9 423.7 671.4 C429.4 679.9 440.1 688.4 446.5 694.0 C452.9 699.6 456.9 701.8 462.0 705.0 C467.1 708.2 477.0 713.0 477.0 713.0 C477.0 713.0 484.6 702.0 484.6 702.0 C484.6 702.0 468.9 702.0 461.7 699.0 C454.5 696.0 447.7 690.5 441.4 684.0 C435.1 677.5 428.9 666.8 424.0 660.0 C419.1 653.2 412.0 643.0 412.0 643.0 Z" fill="url(#backg)" />
<path d="M430.0 822.0 C433.5 815.5 445.3 806.7 449.0 806.0 C452.7 805.3 449.8 811.7 452.0 818.0 C454.2 824.3 458.3 835.0 462.0 844.0 C465.7 853.0 474.0 872.0 474.0 872.0 C474.0 872.0 440.0 872.0 440.0 872.0 C440.0 872.0 429.7 853.3 428.0 845.0 C426.3 836.7 426.5 828.5 430.0 822.0 Z" fill="#7c4a30" />
<path d="M408.5 813.5 L449.0 783.0 L449.0 806.0 L416.0 834.0 Z" fill="#8b806c" />
<path d="M350.0 845.0 C351.2 843.5 352.7 842.2 354.0 843.0 C355.3 843.8 354.5 845.2 358.0 850.0 C361.5 854.8 375.0 872.0 375.0 872.0 C375.0 872.0 349.0 872.0 349.0 872.0 C349.0 872.0 346.8 856.5 347.0 852.0 C347.2 847.5 348.8 846.5 350.0 845.0 Z" fill="#8c8270" />
<path d="M600.0 590.0 C612.4 585.8 649.5 590.0 649.5 590.0 C649.5 590.0 664.2 614.3 672.0 629.0 C679.8 643.7 687.8 662.0 696.0 678.0 C704.2 694.0 713.7 710.8 721.0 725.0 C728.3 739.2 740.0 763.0 740.0 763.0 C740.0 763.0 732.0 774.0 732.0 774.0 C732.0 774.0 733.3 762.2 728.0 759.0 C722.7 755.8 709.3 755.5 700.0 755.0 C690.7 754.5 680.8 754.5 672.0 756.0 C663.2 757.5 657.3 759.5 647.0 764.0 C636.7 768.5 622.2 776.7 610.0 783.0 C597.8 789.3 584.2 797.2 574.0 802.0 C563.8 806.8 549.0 812.0 549.0 812.0 C549.0 812.0 530.0 872.0 530.0 872.0 C530.0 872.0 500.0 872.0 500.0 872.0 C500.0 872.0 542.7 795.8 552.0 773.0 C561.3 750.2 554.8 747.7 556.0 735.0 C557.2 722.3 557.8 708.8 559.0 697.0 C560.2 685.2 562.0 673.5 563.0 664.0 C564.0 654.5 563.0 648.2 565.0 640.0 C567.0 631.8 569.2 623.3 575.0 615.0 C580.8 606.7 587.6 594.2 600.0 590.0 Z" fill="#8e7c68" />
<path d="M628.0 615.0 C629.0 612.0 636.0 605.7 640.0 612.0 C644.0 618.3 646.7 638.7 652.0 653.0 C657.3 667.3 666.3 686.0 672.0 698.0 C677.7 710.0 682.0 719.0 686.0 725.0 C690.0 731.0 696.0 734.0 696.0 734.0 C696.0 734.0 689.7 735.7 684.0 737.0 C678.3 738.3 662.0 742.0 662.0 742.0 C662.0 742.0 663.5 733.5 663.0 727.0 C662.5 720.5 661.7 713.2 659.0 703.0 C656.3 692.8 651.2 678.2 647.0 666.0 C642.8 653.8 637.2 638.5 634.0 630.0 C630.8 621.5 627.0 618.0 628.0 615.0 Z" fill="#78684f" />
<path d="M660.0 745.0 C662.2 742.0 667.0 740.5 672.0 741.0 C677.0 741.5 685.3 745.8 690.0 748.0 C694.7 750.2 703.0 752.7 700.0 754.0 C697.0 755.3 678.8 755.2 672.0 756.0 C665.2 756.8 659.0 759.0 659.0 759.0 C659.0 759.0 657.8 748.0 660.0 745.0 Z" fill="#7d705c" />
<path d="M663.0 740.0 C665.0 739.3 678.8 735.5 684.0 737.0 C689.2 738.5 687.7 746.5 694.0 749.0 C700.3 751.5 715.2 750.5 722.0 752.0 C728.8 753.5 732.0 756.2 735.0 758.0 C738.0 759.8 740.0 763.0 740.0 763.0 C740.0 763.0 732.0 774.0 732.0 774.0 C732.0 774.0 733.3 762.3 728.0 759.0 C722.7 755.7 706.3 755.8 700.0 754.0 C693.7 752.2 694.7 750.2 690.0 748.0 C685.3 745.8 676.5 742.3 672.0 741.0 C667.5 739.7 661.0 740.7 663.0 740.0 Z" fill="#857360" />
<path d="M661.8 741.8 C661.8 741.8 676.2 738.2 684.0 737.0 C691.8 735.8 701.5 734.6 708.4 734.4 C715.3 734.2 725.5 735.7 725.5 735.7 C725.5 735.7 741.0 763.0 741.0 763.0 C741.0 763.0 733.4 760.3 728.0 759.0 C722.6 757.7 715.7 756.0 708.4 755.3 C701.1 754.6 692.2 754.0 684.0 754.6 C675.8 755.2 659.4 759.0 659.4 759.0 C659.4 759.0 661.8 741.8 661.8 741.8 Z" fill="#8f8571" />
<path d="M598.0 604.0 C595.7 606.0 594.0 621.8 592.0 630.0 C590.0 638.2 587.7 645.8 586.0 653.0 C584.3 660.2 582.0 673.0 582.0 673.0 C582.0 673.0 585.5 665.5 588.0 660.0 C590.5 654.5 594.0 647.0 597.0 640.0 C600.0 633.0 605.8 624.0 606.0 618.0 C606.2 612.0 600.3 602.0 598.0 604.0 Z" fill="#78684f" />
<path d="M554.7 412.0 C561.5 407.3 571.2 403.2 577.5 403.0 C583.8 402.8 588.5 406.0 592.7 410.7 C597.0 415.4 599.8 416.2 603.0 431.0 C606.2 445.8 610.5 481.8 611.8 499.5 C613.0 517.2 612.0 522.8 610.5 537.5 C609.0 552.2 603.6 576.8 603.0 588.0 C602.4 599.2 609.2 598.8 607.0 605.0 C604.8 611.2 595.7 619.2 590.0 625.0 C584.3 630.8 577.5 635.8 573.0 640.0 C568.5 644.2 570.8 652.5 563.0 650.0 C555.2 647.5 535.4 635.3 526.0 625.0 C516.6 614.7 513.2 598.3 506.5 588.0 C499.8 577.7 489.8 571.4 486.0 563.0 C482.2 554.6 481.7 544.7 484.0 537.5 C486.3 530.3 495.3 526.2 500.0 520.0 C504.7 513.8 508.4 509.8 512.0 500.0 C515.6 490.2 517.5 472.5 521.7 461.0 C525.9 449.5 531.5 439.2 537.0 431.0 C542.5 422.8 548.0 416.7 554.7 412.0 Z" fill="#855438" />
<path d="M545.0 578.0 C545.0 575.0 555.7 579.7 562.0 578.0 C568.3 576.3 576.3 573.0 582.6 568.0 C588.9 563.0 596.6 544.7 600.0 548.0 C603.4 551.3 601.8 578.5 603.0 588.0 C604.2 597.5 609.2 598.8 607.0 605.0 C604.8 611.2 595.7 619.2 590.0 625.0 C584.3 630.8 577.2 639.7 573.0 640.0 C568.8 640.3 565.2 631.5 565.0 627.0 C564.8 622.5 572.5 618.2 572.0 613.0 C571.5 607.8 566.5 601.8 562.0 596.0 C557.5 590.2 545.0 581.0 545.0 578.0 Z" fill="#855438" />
<path d="M590.0 600.0 C593.3 595.0 597.3 589.2 600.0 590.0 C602.7 590.8 606.3 600.8 606.0 605.0 C605.7 609.2 601.5 610.8 598.0 615.0 C594.5 619.2 588.0 629.2 585.0 630.0 C582.0 630.8 579.2 625.0 580.0 620.0 C580.8 615.0 586.7 605.0 590.0 600.0 Z" fill="#96694b" />
<path d="M549.0 812.0 C549.0 812.0 563.8 806.8 574.0 802.0 C584.2 797.2 597.8 789.3 610.0 783.0 C622.2 776.7 636.7 768.4 647.0 764.0 C657.3 759.6 663.8 758.1 672.0 756.5 C680.2 754.9 687.8 754.0 696.0 754.6 C704.2 755.2 715.3 758.1 721.0 760.0 C726.7 761.9 727.7 760.0 730.0 766.0 C732.3 772.0 733.8 789.7 735.0 796.0 C736.2 802.3 739.3 800.0 737.0 804.0 C734.7 808.0 727.8 814.8 721.0 820.0 C714.2 825.2 706.3 830.7 696.0 835.0 C685.7 839.3 671.2 843.3 659.0 846.0 C646.8 848.7 635.2 850.3 623.0 851.0 C610.8 851.7 595.5 850.2 586.0 850.0 C576.5 849.8 571.0 849.5 566.0 850.0 C561.0 850.5 562.5 852.0 556.0 853.0 C549.5 854.0 527.0 856.0 527.0 856.0 C527.0 856.0 533.7 850.2 537.0 845.0 C540.3 839.8 545.0 830.5 547.0 825.0 C549.0 819.5 549.0 812.0 549.0 812.0 Z" fill="#73462e" />
<path d="M549.0 812.0 C549.0 812.0 563.8 806.8 574.0 802.0 C584.2 797.2 597.8 789.3 610.0 783.0 C622.2 776.7 636.7 768.4 647.0 764.0 C657.3 759.6 663.8 758.1 672.0 756.5 C680.2 754.9 687.8 754.0 696.0 754.6 C704.2 755.2 715.3 758.1 721.0 760.0 C726.7 761.9 727.8 761.2 730.0 766.0 C732.2 770.8 734.0 789.0 734.0 789.0 C734.0 789.0 718.3 800.1 708.0 805.5 C697.7 810.9 686.2 817.0 672.0 821.5 C657.8 826.0 637.3 830.2 623.0 832.5 C608.7 834.8 595.0 835.0 586.0 835.0 C577.0 835.0 574.2 834.7 569.0 832.5 C563.8 830.3 558.3 825.4 555.0 822.0 C551.7 818.6 549.0 812.0 549.0 812.0 Z" fill="#855438" />
<path d="M561.0 815.0 C562.3 811.5 565.8 807.3 574.0 802.0 C582.2 796.7 597.8 789.3 610.0 783.0 C622.2 776.7 636.7 768.4 647.0 764.0 C657.3 759.6 663.8 758.1 672.0 756.5 C680.2 754.9 687.8 754.0 696.0 754.6 C704.2 755.2 716.2 757.8 721.0 760.0 C725.8 762.2 724.2 765.3 725.0 768.0 C725.8 770.7 728.3 771.8 725.5 776.0 C722.7 780.2 716.9 787.7 708.0 793.0 C699.1 798.3 686.2 803.7 672.0 808.0 C657.8 812.3 637.3 816.3 623.0 819.0 C608.7 821.7 595.5 823.3 586.0 824.0 C576.5 824.7 570.2 824.5 566.0 823.0 C561.8 821.5 559.7 818.5 561.0 815.0 Z" fill="#96694b" />
<path d="M521.0 634.0 C521.0 634.0 520.7 645.3 518.0 651.0 C515.3 656.7 509.7 661.7 505.0 668.0 C500.3 674.3 495.5 679.5 490.0 689.0 C484.5 698.5 477.5 713.2 472.0 725.0 C466.5 736.8 460.7 749.5 457.0 760.0 C453.3 770.5 450.8 778.3 450.0 788.0 C449.2 797.7 450.0 808.7 452.0 818.0 C454.0 827.3 458.3 835.0 462.0 844.0 C465.7 853.0 474.0 872.0 474.0 872.0 C474.0 872.0 517.5 872.0 517.5 872.0 C517.5 872.0 524.2 855.8 528.0 849.0 C531.8 842.2 536.7 837.3 540.0 831.0 C543.3 824.7 546.0 820.7 548.0 811.0 C550.0 801.3 550.7 785.7 552.0 773.0 C553.3 760.3 554.8 747.7 556.0 735.0 C557.2 722.3 558.1 708.8 559.0 697.0 C559.9 685.2 560.9 672.3 561.5 664.0 C562.1 655.7 562.5 647.0 562.5 647.0 C562.5 647.0 521.0 634.0 521.0 634.0 Z" fill="#96694b" />
<path d="M537.0 640.0 C537.0 640.0 536.2 652.7 533.0 658.0 C529.8 663.3 523.5 665.0 518.0 672.0 C512.5 679.0 504.3 691.7 500.0 700.0 C495.7 708.3 496.3 712.0 492.0 722.0 C487.7 732.0 477.8 751.2 474.0 760.0 C470.2 768.8 470.3 768.3 469.0 775.0 C467.7 781.7 466.3 792.0 466.0 800.0 C465.7 808.0 465.0 814.7 467.0 823.0 C469.0 831.3 475.0 841.8 478.0 850.0 C481.0 858.2 485.0 872.0 485.0 872.0 C485.0 872.0 497.0 872.0 497.0 872.0 C497.0 872.0 496.2 858.0 495.0 850.0 C493.8 842.0 490.8 832.3 490.0 824.0 C489.2 815.7 488.8 808.5 490.0 800.0 C491.2 791.5 494.5 781.3 497.0 773.0 C499.5 764.7 502.0 758.5 505.0 750.0 C508.0 741.5 510.3 733.7 515.0 722.0 C519.7 710.3 528.3 690.0 533.0 680.0 C537.7 670.0 540.8 668.2 543.0 662.0 C545.2 655.8 546.0 643.0 546.0 643.0 C546.0 643.0 537.0 640.0 537.0 640.0 Z" fill="#855438" />
<path d="M521.0 634.0 C521.0 634.0 520.7 645.3 518.0 651.0 C515.3 656.7 509.7 661.7 505.0 668.0 C500.3 674.3 495.5 679.5 490.0 689.0 C484.5 698.5 477.5 713.2 472.0 725.0 C466.5 736.8 460.7 749.5 457.0 760.0 C453.3 770.5 450.8 778.3 450.0 788.0 C449.2 797.7 450.0 808.7 452.0 818.0 C454.0 827.3 458.3 835.0 462.0 844.0 C465.7 853.0 474.0 872.0 474.0 872.0 C474.0 872.0 485.0 872.0 485.0 872.0 C485.0 872.0 481.0 858.2 478.0 850.0 C475.0 841.8 469.0 831.3 467.0 823.0 C465.0 814.7 465.7 808.0 466.0 800.0 C466.3 792.0 467.7 781.7 469.0 775.0 C470.3 768.3 470.2 768.8 474.0 760.0 C477.8 751.2 487.7 732.0 492.0 722.0 C496.3 712.0 495.7 708.3 500.0 700.0 C504.3 691.7 512.5 679.0 518.0 672.0 C523.5 665.0 529.8 663.3 533.0 658.0 C536.2 652.7 537.0 640.0 537.0 640.0 C537.0 640.0 521.0 634.0 521.0 634.0 Z" fill="#73462e" />
<path d="M554.7 412.0 C558.9 408.0 558.2 408.5 562.0 407.0 C565.8 405.5 572.4 402.4 577.5 403.0 C582.6 403.6 588.5 406.0 592.7 410.7 C597.0 415.4 600.3 422.6 603.0 431.0 C605.7 439.4 607.5 449.6 609.0 461.0 C610.5 472.4 611.5 486.8 611.8 499.5 C612.0 512.2 612.4 529.5 610.5 537.5 C608.6 545.5 603.8 544.0 600.4 547.7 C597.0 551.5 593.0 556.6 590.0 560.0 C587.0 563.4 587.3 565.0 582.6 568.0 C577.9 571.0 568.8 576.7 562.0 578.0 C555.2 579.3 547.3 577.8 542.0 575.6 C536.7 573.4 533.5 569.3 530.0 565.0 C526.5 560.7 524.0 555.8 521.0 550.0 C518.0 544.2 513.8 538.0 512.0 530.0 C510.2 522.0 509.7 510.0 510.0 502.0 C510.3 494.0 512.0 488.8 514.0 482.0 C516.0 475.2 517.9 469.5 521.7 461.0 C525.5 452.5 531.5 439.2 537.0 431.0 C542.5 422.8 550.5 416.0 554.7 412.0 Z" fill="#96694b" />
<path d="M554.7 412.0 C554.7 412.0 542.5 422.8 537.0 431.0 C531.5 439.2 525.5 452.5 521.7 461.0 C517.9 469.5 516.0 475.2 514.0 482.0 C512.0 488.8 510.3 494.0 510.0 502.0 C509.7 510.0 510.2 522.0 512.0 530.0 C513.8 538.0 518.0 544.2 521.0 550.0 C524.0 555.8 526.5 560.7 530.0 565.0 C533.5 569.3 542.0 575.6 542.0 575.6 C542.0 575.6 548.0 565.1 548.0 560.0 C548.0 554.9 543.7 550.0 542.0 545.0 C540.3 540.0 537.3 534.2 538.0 530.0 C538.7 525.8 543.0 523.0 546.0 520.0 C549.0 517.0 553.7 516.2 556.0 512.0 C558.3 507.8 560.0 500.7 560.0 495.0 C560.0 489.3 558.5 482.2 556.0 478.0 C553.5 473.8 549.0 472.7 545.0 470.0 C541.0 467.3 532.8 466.2 532.0 462.0 C531.2 457.8 537.3 450.3 540.0 445.0 C542.7 439.7 545.5 435.5 548.0 430.0 C550.5 424.5 554.7 412.0 554.7 412.0 Z" fill="#855438" />
<path d="M603.0 431.0 C603.0 431.0 607.5 449.6 609.0 461.0 C610.5 472.4 611.5 486.8 611.8 499.5 C612.0 512.2 612.4 529.5 610.5 537.5 C608.6 545.5 603.8 544.0 600.4 547.7 C597.0 551.5 593.0 556.6 590.0 560.0 C587.0 563.4 582.6 568.0 582.6 568.0 C582.6 568.0 582.9 556.3 585.0 550.0 C587.1 543.7 592.5 537.5 595.0 530.0 C597.5 522.5 598.7 513.3 600.0 505.0 C601.3 496.7 602.7 488.3 603.0 480.0 C603.3 471.7 602.0 463.2 602.0 455.0 C602.0 446.8 603.0 431.0 603.0 431.0 Z" fill="#855438" />
<path d="M519.0 468.0 C520.7 465.3 525.7 463.7 530.0 464.0 C534.3 464.3 540.7 467.7 545.0 470.0 C549.3 472.3 554.0 474.7 556.0 478.0 C558.0 481.3 558.8 487.7 557.0 490.0 C555.2 492.3 549.5 492.3 545.0 492.0 C540.5 491.7 534.2 490.0 530.0 488.0 C525.8 486.0 521.8 483.3 520.0 480.0 C518.2 476.7 517.3 470.7 519.0 468.0 Z" fill="#7c4c32" />
<path d="M577.0 480.0 C579.0 476.3 586.5 476.7 592.0 476.0 C597.5 475.3 606.8 472.0 610.0 476.0 C613.2 480.0 611.7 494.0 611.0 500.0 C610.3 506.0 609.2 510.7 606.0 512.0 C602.8 513.3 596.3 510.3 592.0 508.0 C587.7 505.7 582.5 502.7 580.0 498.0 C577.5 493.3 575.0 483.7 577.0 480.0 Z" fill="#8c5c3e" />
<path d="M562.0 479.0 C562.0 479.0 575.3 488.5 577.0 494.0 C578.7 499.5 573.7 506.8 572.0 512.0 C570.3 517.2 568.2 521.0 567.0 525.0 C565.8 529.0 565.0 536.0 565.0 536.0 C565.0 536.0 560.7 526.0 560.0 520.0 C559.3 514.0 560.7 506.8 561.0 500.0 C561.3 493.2 562.0 479.0 562.0 479.0 Z" fill="#73462e" />
<path d="M538.0 540.0 C538.7 537.8 547.5 536.5 552.0 537.0 C556.5 537.5 560.3 543.3 565.0 543.0 C569.7 542.7 575.8 534.7 580.0 535.0 C584.2 535.3 589.2 541.7 590.0 545.0 C590.8 548.3 589.2 553.8 585.0 555.0 C580.8 556.2 571.2 552.8 565.0 552.0 C558.8 551.2 552.5 552.0 548.0 550.0 C543.5 548.0 537.3 542.2 538.0 540.0 Z" fill="#855438" />
<path d="M545.0 386.6 C545.0 386.6 551.6 381.1 557.0 379.0 C562.4 376.9 570.7 374.4 577.5 374.0 C584.3 373.6 591.6 374.2 598.0 376.5 C604.4 378.8 610.1 382.8 615.6 388.0 C621.1 393.2 626.8 400.4 631.0 408.0 C635.2 415.6 637.8 423.8 641.0 433.5 C644.2 443.2 647.9 455.5 650.0 466.5 C652.1 477.5 653.0 487.7 653.6 499.5 C654.2 511.3 654.0 524.8 653.6 537.5 C653.2 550.2 652.1 562.9 651.0 575.6 C649.9 588.3 648.0 604.1 647.0 613.6 C646.0 623.1 644.7 632.6 644.7 632.6 C644.7 632.6 640.1 618.9 638.4 613.6 C636.7 608.3 634.6 601.0 634.6 601.0 C634.6 601.0 629.7 614.1 627.0 620.0 C624.3 625.9 618.6 636.4 618.6 636.4 C618.6 636.4 614.4 621.7 611.8 613.6 C609.2 605.5 605.0 594.4 603.0 588.0 C601.0 581.6 598.8 583.4 600.0 575.0 C601.2 566.6 608.5 550.1 610.5 537.5 C612.5 524.9 612.0 512.2 611.8 499.5 C611.5 486.8 610.5 472.4 609.0 461.0 C607.5 449.6 605.7 439.4 603.0 431.0 C600.3 422.6 597.0 415.4 592.7 410.7 C588.5 406.0 582.6 403.6 577.5 403.0 C572.4 402.4 565.8 405.5 562.0 407.0 C558.2 408.5 554.7 412.0 554.7 412.0 C554.7 412.0 542.5 422.8 537.0 431.0 C531.5 439.2 525.5 452.5 521.7 461.0 C517.9 469.5 516.0 475.2 514.0 482.0 C512.0 488.8 512.3 495.7 510.0 502.0 C507.7 508.3 504.3 514.1 500.0 520.0 C495.7 525.9 486.3 528.2 484.0 537.5 C481.7 546.8 485.0 565.0 486.0 575.6 C487.0 586.2 488.9 593.2 490.0 601.0 C491.1 608.8 492.6 622.5 492.6 622.5 C492.6 622.5 485.0 610.9 481.0 603.5 C477.0 596.1 468.5 578.0 468.5 578.0 C468.5 578.0 464.5 583.2 463.4 588.0 C462.3 592.8 462.0 607.0 462.0 607.0 C462.0 607.0 459.6 600.3 456.0 593.0 C452.4 585.7 445.3 572.2 440.6 563.0 C435.9 553.8 430.5 543.8 428.0 537.5 C425.5 531.2 424.6 530.1 425.4 525.0 C426.2 519.9 428.8 513.8 433.0 507.0 C437.2 500.2 443.5 492.8 450.7 484.0 C457.9 475.2 468.4 464.1 476.0 454.0 C483.6 443.9 490.1 431.9 496.4 423.4 C502.7 414.9 508.1 408.5 514.0 403.0 C519.9 397.5 526.8 393.1 532.0 390.4 C537.2 387.7 545.0 386.6 545.0 386.6 Z" fill="url(#hairg)" />
<path d="M554.0 411.0 C554.0 411.0 554.0 403.0 556.0 400.0 C558.0 397.0 562.0 394.3 566.0 393.0 C570.0 391.7 575.7 391.2 580.0 392.0 C584.3 392.8 588.7 395.0 592.0 398.0 C595.3 401.0 597.8 405.5 600.0 410.0 C602.2 414.5 605.0 425.0 605.0 425.0 C605.0 425.0 599.8 417.8 597.0 415.0 C594.2 412.2 591.3 409.7 588.0 408.0 C584.7 406.3 580.7 405.2 577.0 405.0 C573.3 404.8 569.8 406.0 566.0 407.0 C562.2 408.0 554.0 411.0 554.0 411.0 Z" fill="#8a8580" />
<path d="M600.0 410.0 C600.0 410.0 601.5 422.5 603.0 431.0 C604.5 439.5 607.5 449.6 609.0 461.0 C610.5 472.4 611.5 486.8 611.8 499.5 C612.0 512.2 612.5 524.9 610.5 537.5 C608.5 550.1 601.2 566.6 600.0 575.0 C598.8 583.4 601.0 581.6 603.0 588.0 C605.0 594.4 609.2 605.5 611.8 613.6 C614.4 621.7 618.6 636.4 618.6 636.4 C618.6 636.4 623.4 627.7 624.0 620.0 C624.6 612.3 621.8 603.3 622.0 590.0 C622.2 576.7 624.7 555.0 625.0 540.0 C625.3 525.0 624.8 513.3 624.0 500.0 C623.2 486.7 622.0 471.7 620.0 460.0 C618.0 448.3 615.3 438.3 612.0 430.0 C608.7 421.7 600.0 410.0 600.0 410.0 Z" fill="#8a8580" />
<path d="M634.6 601.0 C634.6 601.0 636.7 608.3 638.4 613.6 C640.1 618.9 644.7 632.6 644.7 632.6 C644.7 632.6 641.8 610.4 641.0 600.0 C640.2 589.6 640.8 572.5 640.0 570.0 C639.2 567.5 636.9 579.8 636.0 585.0 C635.1 590.2 634.6 601.0 634.6 601.0 Z" fill="#8a8580" />
<path d="M425.4 525.0 C426.2 519.9 428.8 512.2 433.0 507.0 C437.2 501.8 450.7 494.0 450.7 494.0 C450.7 494.0 443.1 509.8 441.0 515.0 C438.9 520.2 437.2 518.7 438.0 525.0 C438.8 531.3 442.6 543.5 445.6 552.7 C448.6 561.9 453.3 571.0 456.0 580.0 C458.7 589.0 462.0 607.0 462.0 607.0 C462.0 607.0 459.6 600.3 456.0 593.0 C452.4 585.7 445.3 572.2 440.6 563.0 C435.9 553.8 430.5 543.8 428.0 537.5 C425.5 531.2 424.6 530.1 425.4 525.0 Z" fill="#7d7771" />
<path d="M520.0 420.0 C520.0 420.0 507.7 435.8 503.0 445.0 C498.3 454.2 494.8 465.0 492.0 475.0 C489.2 485.0 487.3 494.7 486.0 505.0 C484.7 515.3 484.0 537.0 484.0 537.0 C484.0 537.0 489.5 519.5 492.0 510.0 C494.5 500.5 496.3 490.0 499.0 480.0 C501.7 470.0 504.5 460.0 508.0 450.0 C511.5 440.0 520.0 420.0 520.0 420.0 Z" fill="#8a8580" />
<path d="M470.0 520.0 C470.0 520.0 468.5 578.0 468.5 578.0 C468.5 578.0 477.0 596.1 481.0 603.5 C485.0 610.9 492.6 622.5 492.6 622.5 C492.6 622.5 489.4 608.8 488.0 600.0 C486.6 591.2 485.3 579.2 484.0 570.0 C482.7 560.8 480.3 554.2 480.0 545.0 C479.7 535.8 482.0 515.0 482.0 515.0 C482.0 515.0 478.0 529.2 476.0 530.0 C474.0 530.8 470.0 520.0 470.0 520.0 Z" fill="#8a8580" />
<path d="M519.0 499.4 C519.0 499.4 513.1 506.3 510.6 510.4 C508.1 514.5 506.1 520.6 503.8 524.0 C501.5 527.4 499.5 529.9 497.0 530.7 C494.5 531.5 490.9 526.2 488.6 529.0 C486.4 531.8 485.2 541.7 483.5 547.6 C481.8 553.5 477.9 560.1 478.5 564.6 C479.1 569.1 482.8 570.8 487.0 574.7 C491.2 578.6 498.5 583.2 503.8 588.2 C509.1 593.2 515.9 599.9 519.0 605.0 C522.1 610.1 522.0 614.2 522.4 618.7 C522.8 623.2 521.6 632.0 521.6 632.0 C521.6 632.0 562.5 647.0 562.5 647.0 C562.5 647.0 562.1 636.1 563.0 632.2 C563.9 628.3 566.6 626.6 568.0 623.8 C569.4 621.0 571.5 618.7 571.5 615.3 C571.5 611.9 570.2 607.5 568.0 603.5 C565.8 599.5 561.9 594.7 558.0 591.6 C554.1 588.5 548.9 587.4 544.4 584.9 C539.9 582.4 534.3 579.8 530.9 576.4 C527.5 573.0 525.7 568.5 524.0 564.6 C522.3 560.7 520.7 552.7 520.7 552.7 C520.7 552.7 532.6 539.2 532.6 539.2 C532.6 539.2 517.4 546.0 517.4 546.0 C517.4 546.0 521.1 534.4 522.4 529.0 C523.7 523.6 525.0 513.8 525.0 513.8 C525.0 513.8 521.1 518.9 520.7 517.2 C520.3 515.5 522.7 506.7 522.4 503.7 C522.1 500.7 519.0 499.4 519.0 499.4 Z" fill="#855438" />
<path d="M488.6 529.0 C486.6 531.0 485.2 541.7 483.5 547.6 C481.8 553.5 477.9 560.1 478.5 564.6 C479.1 569.1 482.8 570.8 487.0 574.7 C491.2 578.6 498.5 583.2 503.8 588.2 C509.1 593.2 515.9 599.9 519.0 605.0 C522.1 610.1 522.0 614.2 522.4 618.7 C522.8 623.2 521.6 632.0 521.6 632.0 C521.6 632.0 530.0 634.0 530.0 634.0 C530.0 634.0 530.2 619.8 527.5 613.6 C524.8 607.4 518.8 603.2 514.0 596.7 C509.2 590.2 502.4 581.5 498.7 574.7 C495.0 567.9 492.6 562.5 492.0 556.0 C491.4 549.5 496.0 540.3 495.4 535.8 C494.8 531.3 490.6 527.0 488.6 529.0 Z" fill="#73462e" />
<path d="M522.4 559.5 C522.1 557.8 522.6 561.8 524.0 564.6 C525.4 567.4 527.5 573.0 530.9 576.4 C534.3 579.8 539.9 582.4 544.4 584.9 C548.9 587.4 554.1 588.5 558.0 591.6 C561.9 594.7 565.8 599.5 568.0 603.5 C570.2 607.5 571.5 611.9 571.5 615.3 C571.5 618.7 569.4 621.0 568.0 623.8 C566.6 626.6 563.9 628.3 563.0 632.2 C562.1 636.1 562.5 647.0 562.5 647.0 C562.5 647.0 544.4 642.4 544.4 642.4 C544.4 642.4 544.9 628.6 546.0 623.8 C547.1 619.0 550.6 617.3 551.2 613.6 C551.8 609.9 551.8 606.0 549.5 601.8 C547.2 597.6 541.6 592.7 537.6 588.2 C533.6 583.7 528.3 579.5 525.8 574.7 C523.3 569.9 522.7 561.2 522.4 559.5 Z" fill="#96694b" />
<path d="M520.7 638.0 L541.0 639.0 L563.0 647.4 L561.3 663.5 L541.0 654.2 L519.0 650.8 Z" fill="#5b3627" />
<path d="M542.7 639.5 L563.0 647.4 L561.3 663.5 L542.0 654.6 Z" fill="#6a3f2d"/>
<ellipse cx="513" cy="645" rx="7.2" ry="11.3" transform="rotate(12 513 645)" fill="#c9a340" /><path d="M583.4 675.6 C583.4 675.6 589.9 692.0 593.2 702.6 C596.5 713.2 601.2 727.2 603.0 739.4 C604.8 751.6 604.2 766.7 604.2 776.0 C604.2 785.3 603.0 795.0 603.0 795.0" fill="none" stroke="#9a8c7b" stroke-width="7" stroke-linecap="round" />
<path d="M563.0 648.0 C564.2 654.0 580.0 676.0 580.0 676.0 C580.0 676.0 593.3 650.7 597.0 640.0 C600.7 629.3 603.2 618.7 602.0 612.0 C600.8 605.3 594.8 595.3 590.0 600.0 C585.2 604.7 577.5 632.0 573.0 640.0 C568.5 648.0 561.8 642.0 563.0 648.0 Z" fill="#86563a"/>
<path d="M575.0 650.0 C574.0 658.8 582.0 668.0 582.0 668.0 C582.0 668.0 589.7 648.3 592.0 640.0 C594.3 631.7 596.7 622.2 596.0 618.0 C595.3 613.8 591.5 609.7 588.0 615.0 C584.5 620.3 576.0 641.2 575.0 650.0 Z" fill="#96694b"/>
<path d="M602.0 612.0 C604.2 611.0 609.2 618.5 612.0 622.0 C614.8 625.5 618.0 629.2 619.0 633.0 C620.0 636.8 620.2 641.2 618.0 645.0 C615.8 648.8 610.0 652.3 606.0 656.0 C602.0 659.7 598.0 663.3 594.0 667.0 C590.0 670.7 582.0 678.0 582.0 678.0 C582.0 678.0 584.7 668.8 586.0 665.0 C587.3 661.2 588.3 659.2 590.0 655.0 C591.7 650.8 594.5 644.5 596.0 640.0 C597.5 635.5 598.0 632.7 599.0 628.0 C600.0 623.3 599.8 613.0 602.0 612.0 Z" fill="#958a77"/>
<path d="M559.0 653.0 C558.3 650.0 561.8 646.2 566.0 650.0 C570.2 653.8 584.0 676.0 584.0 676.0 C584.0 676.0 582.3 684.3 580.0 683.0 C577.7 681.7 573.5 673.0 570.0 668.0 C566.5 663.0 559.7 656.0 559.0 653.0 Z" fill="#958a77"/>
<path d="M519.0 463.0 C519.0 463.0 524.5 461.0 528.0 461.0 C531.5 461.0 535.2 460.8 540.0 463.0 C544.8 465.2 557.0 474.0 557.0 474.0" fill="none" stroke="#5e3522" stroke-width="2.2" stroke-linecap="round" />
<path d="M577.5 478.0 C577.5 478.0 586.5 475.2 592.0 474.5 C597.5 473.8 610.5 474.0 610.5 474.0" fill="none" stroke="#5e3522" stroke-width="2" stroke-linecap="round" />
<path d="M521.0 483.0 C521.0 483.0 527.5 487.0 532.0 488.0 C536.5 489.0 543.8 489.2 548.0 489.0 C552.2 488.8 557.0 487.0 557.0 487.0" fill="none" stroke="#4a281a" stroke-width="1.8" stroke-linecap="round" />
<path d="M586.0 497.0 C586.0 497.0 593.8 499.7 598.0 500.0 C602.2 500.3 611.0 499.0 611.0 499.0" fill="none" stroke="#4a281a" stroke-width="1.8" stroke-linecap="round" />
<path d="M537.0 540.0 C537.0 540.0 543.8 544.7 548.0 546.0 C552.2 547.3 557.5 548.0 562.0 548.0 C566.5 548.0 571.3 547.2 575.0 546.0 C578.7 544.8 584.0 541.0 584.0 541.0" fill="none" stroke="#6a3a28" stroke-width="2.2" stroke-linecap="round" />
<path d="M560.0 432.0 C560.0 432.0 573.3 428.2 580.0 428.0 C586.7 427.8 600.0 431.0 600.0 431.0" fill="none" stroke="#7a4a32" stroke-width="1.6" stroke-linecap="round" />
<path d="M551.0 440.0 C551.0 440.0 568.3 436.2 577.0 436.0 C585.7 435.8 603.0 439.0 603.0 439.0" fill="none" stroke="#7a4a32" stroke-width="1.6" stroke-linecap="round" />
<path d="M546.0 448.0 C546.0 448.0 565.3 444.2 575.0 444.0 C584.7 443.8 604.0 447.0 604.0 447.0" fill="none" stroke="#7a4a32" stroke-width="1.6" stroke-linecap="round" />
<path d="M548.0 455.0 C548.0 455.0 567.3 451.2 577.0 451.0 C586.7 450.8 606.0 454.0 606.0 454.0" fill="none" stroke="#7a4a32" stroke-width="1.6" stroke-linecap="round" /></g>
</g></svg></div><div class="abs" style="left:1410.00px;top:235.50px;width:19.50px;height:734.50px;background:#f0f0f0;"></div><div class="abs" style="left:134.00px;top:950.50px;width:1276.00px;height:19.50px;background:#f0f0f0;"></div><div class="abs" style="left:1411.00px;top:584.00px;width:17.50px;height:20.00px;background:#cdcdcd;"></div><div class="abs" style="left:762.00px;top:951.50px;width:21.00px;height:17.50px;background:#cdcdcd;"></div><svg class="abs" style="left:0;top:0" width="1912" height="1183"><path d="M1416.55 247.1 L1419.75 243.6 L1422.95 247.1" fill="none" stroke="#5a5a5a" stroke-width="1.9"/><path d="M1416.55 938.9 L1419.75 942.4 L1422.95 938.9" fill="none" stroke="#5a5a5a" stroke-width="1.9"/><path d="M145.6 957.05 L142.1 960.25 L145.6 963.45" fill="none" stroke="#5a5a5a" stroke-width="1.9"/><path d="M1398.4 957.05 L1401.9 960.25 L1398.4 963.45" fill="none" stroke="#5a5a5a" stroke-width="1.9"/></svg><svg class="abs" style="left:1411.00px;top:951.50px;" width="17" height="17" viewBox="0 0 17 17"><rect x="11" y="3" width="3" height="3" fill="#b8b8b8"/><rect x="7" y="7" width="3" height="3" fill="#b8b8b8"/><rect x="11" y="7" width="3" height="3" fill="#b8b8b8"/><rect x="3" y="11" width="3" height="3" fill="#b8b8b8"/><rect x="7" y="11" width="3" height="3" fill="#b8b8b8"/><rect x="11" y="11" width="3" height="3" fill="#b8b8b8"/></svg><div class="abs" style="left:1412.00px;top:969.00px;width:17.50px;height:1.00px;background:#444;"></div>
<!-- p4_toolbox -->
<div class="abs" style="left:20.00px;top:97.00px;width:43.00px;height:942.00px;background:#3a3a3a;"></div>
<div class="abs" style="left:19.00px;top:97.00px;width:1.00px;height:942.00px;background:#5a5a5a;"></div>
<div class="abs" style="left:20.00px;top:97.00px;width:43.00px;height:14.00px;background:linear-gradient(#141414,#2e2e2e);"></div>
<div class="abs" style="left:24px;top:100px;width:8px;height:8px;border-radius:50%;background:#f4f4f4"></div>
<div class="abs" style="left:23.00px;top:278.50px;width:37.00px;height:2.20px;background:#222;border-radius:1px"></div>
<div class="abs" style="left:23.00px;top:483.50px;width:37.00px;height:2.20px;background:#222;border-radius:1px"></div>
<div class="abs" style="left:23.00px;top:624.00px;width:37.00px;height:2.20px;background:#222;border-radius:1px"></div>
<div class="abs" style="left:23.00px;top:699.00px;width:37.00px;height:2.20px;background:#222;border-radius:1px"></div>
<div class="abs" style="left:23.00px;top:773.00px;width:37.00px;height:2.20px;background:#222;border-radius:1px"></div>
<div class="abs" style="left:23.00px;top:880.00px;width:37.00px;height:2.20px;background:#222;border-radius:1px"></div>
<div class="abs" style="left:23.00px;top:928.50px;width:37.00px;height:2.20px;background:#222;border-radius:1px"></div>
<div class="abs" style="left:23.00px;top:976.00px;width:37.00px;height:2.20px;background:#222;border-radius:1px"></div>
<svg class="abs" style="left:29.00px;top:116.50px;" width="23" height="23" viewBox="0 0 24 24"><path d="M22.5 1.5 C19 3 12 9.5 9.5 13.5 L12.5 16 C16 12.5 21.5 6 22.5 1.5 Z" fill="#e9e9e9"/><path d="M8.3 14.6 L11.2 17.2 C10.5 20.5 6.5 23.5 1 22.5 C3.5 21 3 17.5 8.3 14.6 Z" fill="#e9e9e9"/></svg>
<svg class="abs" style="left:29.00px;top:148.50px;" width="23" height="23" viewBox="0 0 24 24"><path d="M20.8 1.8 C22.8 2.8 23.2 5 22 6.4 L19.3 9.3 L20.6 10.6 L18.7 12.5 L13.2 7 L15.1 5.1 L16.2 6.2 L19 3.2 C19.4 2.5 20 2 20.8 1.8 Z" fill="#e9e9e9"/><path d="M14 9.5 L16.8 12.3 L6 23 L2.2 23.2 L2.4 20.5 Z M13.9 11.6 L4.1 21.3 L5 22 L14.8 12.5 Z" fill="#e9e9e9" fill-rule="evenodd"/></svg>
<svg class="abs" style="left:29.00px;top:181.50px;" width="23" height="23" viewBox="0 0 24 24"><path d="M8.5 2.5 L21 13 M10.5 4.2 L3.2 11.5 C1.8 13 1.8 15 3.2 16.5 L7.5 20.6 C9 22 11 22 12.4 20.6 L19.3 11.6" fill="none" stroke="#e9e9e9" stroke-width="1.6" stroke-linejoin="round"/><path d="M4.8 14.5 L16.2 14.5 L11.2 19.6 C10.4 20.3 9.4 20.3 8.7 19.6 Z" fill="#9a9a9a"/><path d="M21.8 15.5 L23.4 22.5 L20.4 22.5 Z" fill="#aaa"/></svg>
<svg class="abs" style="left:29.00px;top:214.50px;" width="23" height="23" viewBox="0 0 24 24"><defs><linearGradient id="tgr" x1="0" y1="0" x2="0" y2="1"><stop offset="0" stop-color="#1a1a1a"/><stop offset="1" stop-color="#e6e6e6"/></linearGradient></defs><rect x="1" y="1" width="22" height="21" fill="url(#tgr)" stroke="#e9e9e9" stroke-width="1.4"/></svg>
<svg class="abs" style="left:29.00px;top:246.50px;" width="23" height="23" viewBox="0 0 24 24"><path d="M15.5 2 L22.5 8.5 L11.5 19 L4.5 12.5 Z" fill="#e9e9e9"/><path d="M4.5 12.5 L11.5 19 L9.3 21 L4.8 21 L1.8 18 L1.8 15 Z" fill="none" stroke="#e9e9e9" stroke-width="1.3"/><path d="M1 23.3 H23" stroke="#e9e9e9" stroke-width="1.1"/></svg>
<svg class="abs" style="left:29.00px;top:288.50px;" width="23" height="23" viewBox="0 0 24 24"><path d="M2 1 L2 12 L10 7.5 Z" fill="#e9e9e9"/><path d="M16.5 8 L19.5 11.2 L17.6 11.2 L17.6 14.4 L20.8 14.4 L20.8 12.5 L24 15.5 L20.8 18.5 L20.8 16.6 L17.6 16.6 L17.6 19.8 L19.5 19.8 L16.5 23 L13.5 19.8 L15.4 19.8 L15.4 16.6 L12.2 16.6 L12.2 18.5 L9 15.5 L12.2 12.5 L12.2 14.4 L15.4 14.4 L15.4 11.2 L13.5 11.2 Z" fill="#e9e9e9"/></svg>
<svg class="abs" style="left:48.00px;top:305.00px;" width="10" height="10" viewBox="0 0 10 10"><path d="M9 9 L3 9 L9 3 Z" fill="#f0f0f0"/></svg>
<svg class="abs" style="left:29.00px;top:321.00px;" width="23" height="23" viewBox="0 0 24 24"><rect x="2" y="5" width="21" height="14" fill="none" stroke="#e9e9e9" stroke-width="1.6" stroke-dasharray="3.2 1.6"/></svg>
<svg class="abs" style="left:48.00px;top:337.00px;" width="10" height="10" viewBox="0 0 10 10"><path d="M9 9 L3 9 L9 3 Z" fill="#f0f0f0"/></svg>
<div class="abs" style="left:25.50px;top:351.00px;width:30.50px;height:30.50px;background:#111;border:1.6px solid #e9a540;border-radius:2px"></div>
<svg class="abs" style="left:29.00px;top:354.00px;" width="23" height="23" viewBox="0 0 24 24"><ellipse cx="13.5" cy="9.5" rx="10.2" ry="6.8" fill="none" stroke="#e8a93a" stroke-width="1.5" stroke-dasharray="2.6 1.6"/><circle cx="6.3" cy="15.5" r="1.7" fill="none" stroke="#e8a93a" stroke-width="1.1"/><path d="M7.5 17 C9 18.5 8.5 21 6.5 23.5" fill="none" stroke="#e8a93a" stroke-width="1.4" stroke-dasharray="2.4 1.5"/></svg>
<svg class="abs" style="left:48.00px;top:372.00px;" width="10" height="10" viewBox="0 0 10 10"><path d="M9 9 L3 9 L9 3 Z" fill="#f0f0f0"/></svg>
<svg class="abs" style="left:29.00px;top:386.50px;" width="23" height="23" viewBox="0 0 24 24"><path d="M2.5 22 L13.8 10.5" stroke="#e9e9e9" stroke-width="1.7"/><rect x="14.2" y="6.2" width="3.4" height="3.4" fill="#e9e9e9"/><path d="M16 1 V4.2 M16 11.5 V14.5 M9.5 8 H12.5 M19.5 8 H22.8 M11.2 3.2 L13.4 5.4 M20.8 3.2 L18.6 5.4 M18.6 10.4 L20.8 12.6" stroke="#cfcfcf" stroke-width="1.1"/></svg>
<svg class="abs" style="left:48.00px;top:403.00px;" width="10" height="10" viewBox="0 0 10 10"><path d="M9 9 L3 9 L9 3 Z" fill="#f0f0f0"/></svg>
<svg class="abs" style="left:29.00px;top:418.50px;" width="23" height="23" viewBox="0 0 24 24"><rect x="1.5" y="1.5" width="10.5" height="10.5" fill="none" stroke="#e9e9e9" stroke-width="1.5" stroke-dasharray="2.6 1.5"/><path d="M16.5 8.5 L19.5 11.7 L17.6 11.7 L17.6 14.6 L20.8 14.6 L20.8 12.7 L24 15.7 L20.8 18.7 L20.8 16.8 L17.6 16.8 L17.6 20 L19.5 20 L16.5 23.2 L13.5 20 L15.4 20 L15.4 16.8 L12.2 16.8 L12.2 18.7 L9 15.7 L12.2 12.7 L12.2 14.6 L15.4 14.6 L15.4 11.7 L13.5 11.7 Z" fill="#e9e9e9"/></svg>
<svg class="abs" style="left:29.00px;top:451.00px;" width="23" height="23" viewBox="0 0 24 24"><path d="M22.5 1.5 L8 16.5" stroke="#9a9a9a" stroke-width="1.4"/><path d="M6.5 1 V17.5 H23.5 M1 6.5 H17.5 V23.5" fill="none" stroke="#e9e9e9" stroke-width="2.6"/></svg>
<svg class="abs" style="left:29.00px;top:495.00px;" width="23" height="23" viewBox="0 0 24 24"><path d="M17 1.5 L22.5 7 L20 9.5 L14.5 4 Z" fill="#e9e9e9"/><path d="M13.2 5.2 L18.8 10.8 L14.5 17.5 L2 22 L6.5 9.5 Z M7.8 10.8 L4.3 19.7 L13.3 16.3 L16.3 11 L13 7.7 Z" fill="#e9e9e9" fill-rule="evenodd"/><path d="M3 21 L10 14" stroke="#e9e9e9" stroke-width="1.2"/><circle cx="10.5" cy="13.5" r="1.5" fill="#e9e9e9"/></svg>
<svg class="abs" style="left:48.00px;top:510.00px;" width="10" height="10" viewBox="0 0 10 10"><path d="M9 9 L3 9 L9 3 Z" fill="#f0f0f0"/></svg>
<svg class="abs" style="left:29.00px;top:527.00px;" width="23" height="23" viewBox="0 0 24 24"><rect x="2" y="2" width="20" height="20" fill="#8a8a8a" stroke="#d9d9d9" stroke-width="1.5"/></svg>
<svg class="abs" style="left:48.00px;top:543.00px;" width="10" height="10" viewBox="0 0 10 10"><path d="M9 9 L3 9 L9 3 Z" fill="#f0f0f0"/></svg>
<svg class="abs" style="left:29.50px;top:558.50px;" width="22" height="22" viewBox="0 0 24 24"><path d="M2 2 H22 V7 H20.3 V4.6 H13.6 V20.3 H16.3 V22.5 H7.7 V20.3 H10.4 V4.6 H3.7 V7 H2 Z" fill="#e9e9e9"/></svg>
<svg class="abs" style="left:29.00px;top:591.50px;" width="23" height="23" viewBox="0 0 24 24"><path d="M5 1.5 L5 18 L9 14.4 L12 21.5 L14.8 20.3 L11.8 13.3 L17 13 Z" fill="none" stroke="#e9e9e9" stroke-width="1.5" stroke-linejoin="round"/></svg>
<svg class="abs" style="left:48.00px;top:608.00px;" width="10" height="10" viewBox="0 0 10 10"><path d="M9 9 L3 9 L9 3 Z" fill="#f0f0f0"/></svg>
<svg class="abs" style="left:29.00px;top:634.50px;" width="23" height="23" viewBox="0 0 24 24"><path d="M23 1.5 C19.5 3.5 13.5 9.5 11 13.5 L13.8 16 C17 12.5 22 6 23 1.5 Z" fill="#e9e9e9"/><path d="M9.8 14.6 L12.6 17.2 C12 20.5 8 23 2.5 22.3 C5 21 4.5 17.5 9.8 14.6 Z" fill="#e9e9e9"/><path d="M6 1.5 V9.5 M2 5.5 H10" stroke="#e9e9e9" stroke-width="1.1"/><circle cx="6" cy="5.5" r="2.1" fill="#3a3a3a" stroke="#e9e9e9" stroke-width="1"/></svg>
<svg class="abs" style="left:48.00px;top:651.00px;" width="10" height="10" viewBox="0 0 10 10"><path d="M9 9 L3 9 L9 3 Z" fill="#f0f0f0"/></svg>
<svg class="abs" style="left:29.00px;top:665.50px;" width="23" height="23" viewBox="0 0 24 24"><circle cx="16.5" cy="7.5" r="6" fill="#8a8a8a" stroke="#bdbdbd" stroke-width="1.2"/><path d="M12.5 12 L4 20.5" stroke="#bdbdbd" stroke-width="2"/><circle cx="3.5" cy="21" r="2.4" fill="#e9e9e9"/></svg>
<svg class="abs" style="left:48.00px;top:682.00px;" width="10" height="10" viewBox="0 0 10 10"><path d="M9 9 L3 9 L9 3 Z" fill="#f0f0f0"/></svg>
<svg class="abs" style="left:29.00px;top:708.50px;" width="23" height="23" viewBox="0 0 24 24"><path d="M12 1 V23" stroke="#e9e9e9" stroke-width="1.6"/><path d="M1.5 9 C3 11.5 5.5 14 8.5 16 L7 18 C4.5 16 2.2 12.5 1.5 9 Z" fill="#8a8a8a"/><circle cx="7" cy="18.5" r="2.4" fill="#8a8a8a"/><path d="M22.5 9 C21 11.5 18.5 14 15.5 16 L17 18 C19.5 16 21.8 12.5 22.5 9 Z" fill="#e9e9e9"/><circle cx="17" cy="18.5" r="2.4" fill="#e9e9e9"/></svg>
<svg class="abs" style="left:48.00px;top:725.00px;" width="10" height="10" viewBox="0 0 10 10"><path d="M9 9 L3 9 L9 3 Z" fill="#f0f0f0"/></svg>
<svg class="abs" style="left:29.00px;top:744.50px;" width="23" height="23" viewBox="0 0 24 24"><path d="M2 11.5 L5.5 8 H16.5 L13 11.5 Z M2 11.5 H13 V22 H2 Z M13 11.5 L16.5 8 V18.5 L13 22" fill="none" stroke="#e9e9e9" stroke-width="1.4" stroke-linejoin="round"/><path d="M16 7 L20.5 2.8" stroke="#9a9a9a" stroke-width="1" stroke-dasharray="1.5 1.5"/><circle cx="21.5" cy="2.3" r="1.9" fill="#e9e9e9"/></svg>
<svg class="abs" style="left:48.00px;top:761.00px;" width="10" height="10" viewBox="0 0 10 10"><path d="M9 9 L3 9 L9 3 Z" fill="#f0f0f0"/></svg>
<svg class="abs" style="left:29.00px;top:784.50px;" width="23" height="23" viewBox="0 0 24 24"><path d="M8.2 12.5 L6.8 6.2 C6.5 4.6 8.6 4 9.1 5.6 L10.5 10 L10 3.4 C9.9 1.7 12.2 1.6 12.4 3.2 L13.2 9.6 L14.3 3.6 C14.6 2 16.8 2.4 16.6 4 L15.8 10.4 L18 6 C18.7 4.6 20.6 5.5 20 7 L17.4 14 C16.5 18.5 14.5 21.5 10.5 22 C7 22.3 4.6 20.5 3.6 17.8 L2 13 C1.5 11.4 3.4 10.7 4.2 12.2 L5.8 15.4" fill="none" stroke="#e9e9e9" stroke-width="1.4" stroke-linejoin="round" stroke-linecap="round" transform="rotate(18 12 12)"/></svg>
<svg class="abs" style="left:29.00px;top:816.00px;" width="23" height="23" viewBox="0 0 24 24"><circle cx="15.5" cy="8.5" r="6.6" fill="none" stroke="#e9e9e9" stroke-width="1.6"/><path d="M10.6 13.4 L2.5 21.5" stroke="#e9e9e9" stroke-width="2.8"/></svg>
<svg class="abs" style="left:29.00px;top:849.00px;" width="23" height="23" viewBox="0 0 24 24"><path d="M19.8 8.2 A9 9 0 1 0 20.6 14.5" fill="none" stroke="#e9e9e9" stroke-width="1.5"/><path d="M16.2 9.2 L22.8 9.8 L20.4 3.8 Z" fill="#e9e9e9"/></svg>
<svg class="abs" style="left:29.00px;top:985.50px;" width="23" height="23" viewBox="0 0 24 24"><rect x="1" y="4.5" width="22" height="15.5" fill="#8f8f8f" stroke="#e9e9e9" stroke-width="1.5"/><rect x="5" y="8.5" width="14" height="7.5" fill="#3a3a3a" stroke="#e9e9e9" stroke-width="1.3"/></svg>
<svg class="abs" style="left:48.00px;top:1004.00px;" width="10" height="10" viewBox="0 0 10 10"><path d="M9 9 L3 9 L9 3 Z" fill="#f0f0f0"/></svg>
<div class="abs" style="left:25px;top:889px;width:21px;height:21px;border-radius:50%;background:#fff;box-shadow:0 0 1.5px 0.5px #ddd"></div>
<div class="abs" style="left:34.5px;top:898.5px;width:24px;height:24px;border-radius:50%;background:#fff;border:1.3px solid #f5f5f5;box-shadow:inset 0 0 0 1.2px #333,0 0 0 1px #2c2c2c"></div>
<svg class="abs" style="left:23.00px;top:911.00px;" width="12" height="12" viewBox="0 0 12 12"><path d="M3 1 L0.8 3.8 H2.3 V8.8 H7.5 V10.3 L10.5 8 L7.5 5.8 V7.3 H3.8 V3.8 H5.3 Z" fill="#f0f0f0"/></svg>
<svg class="abs" style="left:24.50px;top:935.50px;" width="34" height="34" viewBox="0 0 34 34"><rect width="34" height="34" fill="#6e6e6e"/><ellipse cx="11.0" cy="5.1" rx="3.5" ry="3.1" fill="#4a4a4a" opacity="0.8"/><ellipse cx="3.2" cy="19.8" rx="4.2" ry="2.2" fill="#8c8c8c" opacity="0.8"/><ellipse cx="14.7" cy="2.4" rx="1.8" ry="0.9" fill="#a3a3a3" opacity="0.8"/><ellipse cx="19.2" cy="32.2" rx="3.4" ry="3.3" fill="#787878" opacity="0.8"/><ellipse cx="19.6" cy="13.5" rx="4.4" ry="3.4" fill="#4a4a4a" opacity="0.8"/><ellipse cx="4.5" cy="14.3" rx="3.1" ry="2.0" fill="#787878" opacity="0.8"/><ellipse cx="27.7" cy="6.1" rx="3.2" ry="1.9" fill="#3d3d3d" opacity="0.8"/><ellipse cx="3.3" cy="24.2" rx="3.2" ry="1.9" fill="#787878" opacity="0.8"/><ellipse cx="23.1" cy="14.5" rx="2.4" ry="2.3" fill="#787878" opacity="0.8"/><ellipse cx="12.3" cy="8.4" rx="2.0" ry="1.3" fill="#959595" opacity="0.8"/><ellipse cx="19.5" cy="17.9" rx="4.1" ry="3.0" fill="#3d3d3d" opacity="0.8"/><ellipse cx="20.7" cy="2.5" rx="3.0" ry="2.7" fill="#8c8c8c" opacity="0.8"/><ellipse cx="5.2" cy="16.6" rx="1.6" ry="0.9" fill="#3d3d3d" opacity="0.8"/><ellipse cx="19.0" cy="26.8" rx="4.0" ry="3.4" fill="#5d5d5d" opacity="0.8"/><ellipse cx="20.2" cy="19.7" rx="2.9" ry="1.6" fill="#959595" opacity="0.8"/><ellipse cx="9.2" cy="23.7" rx="1.7" ry="1.4" fill="#3d3d3d" opacity="0.8"/><ellipse cx="22.0" cy="33.8" rx="4.0" ry="3.4" fill="#5d5d5d" opacity="0.8"/><ellipse cx="30.2" cy="11.8" rx="4.3" ry="2.5" fill="#5d5d5d" opacity="0.8"/><ellipse cx="4.0" cy="2.0" rx="3.8" ry="3.3" fill="#8c8c8c" opacity="0.8"/><ellipse cx="13.5" cy="31.2" rx="3.0" ry="2.2" fill="#8c8c8c" opacity="0.8"/><ellipse cx="18.7" cy="30.0" rx="4.0" ry="3.1" fill="#959595" opacity="0.8"/><ellipse cx="24.0" cy="33.5" rx="3.5" ry="3.5" fill="#a3a3a3" opacity="0.8"/><ellipse cx="5.1" cy="6.0" rx="2.2" ry="1.1" fill="#8c8c8c" opacity="0.8"/><ellipse cx="28.3" cy="6.2" rx="2.3" ry="1.7" fill="#8c8c8c" opacity="0.8"/><ellipse cx="12.6" cy="19.3" rx="4.4" ry="4.1" fill="#3d3d3d" opacity="0.8"/><ellipse cx="32.3" cy="22.3" rx="3.7" ry="3.5" fill="#a3a3a3" opacity="0.8"/><ellipse cx="26.5" cy="29.7" rx="3.9" ry="2.7" fill="#a3a3a3" opacity="0.8"/><ellipse cx="13.4" cy="16.4" rx="2.7" ry="1.4" fill="#8c8c8c" opacity="0.8"/><ellipse cx="7.1" cy="5.5" rx="2.5" ry="1.4" fill="#4a4a4a" opacity="0.8"/><ellipse cx="19.3" cy="18.2" rx="4.3" ry="2.2" fill="#787878" opacity="0.8"/><ellipse cx="29.7" cy="20.9" rx="1.9" ry="1.9" fill="#5d5d5d" opacity="0.8"/><ellipse cx="20.5" cy="16.1" rx="1.8" ry="1.8" fill="#a3a3a3" opacity="0.8"/><ellipse cx="15.8" cy="16.5" rx="1.8" ry="1.5" fill="#4a4a4a" opacity="0.8"/><ellipse cx="25.2" cy="16.3" rx="3.6" ry="1.8" fill="#787878" opacity="0.8"/><ellipse cx="32.3" cy="18.0" rx="1.9" ry="1.9" fill="#787878" opacity="0.8"/><ellipse cx="25.8" cy="10.1" rx="3.4" ry="2.9" fill="#4a4a4a" opacity="0.8"/><ellipse cx="8.9" cy="12.5" rx="2.0" ry="1.2" fill="#959595" opacity="0.8"/><ellipse cx="18.4" cy="17.1" rx="3.4" ry="3.1" fill="#787878" opacity="0.8"/><ellipse cx="33.5" cy="29.0" rx="3.9" ry="2.7" fill="#959595" opacity="0.8"/><ellipse cx="27.3" cy="6.8" rx="3.0" ry="1.5" fill="#3d3d3d" opacity="0.8"/><ellipse cx="0.9" cy="9.5" rx="2.3" ry="1.8" fill="#3d3d3d" opacity="0.8"/><ellipse cx="11.7" cy="27.5" rx="3.7" ry="3.6" fill="#5d5d5d" opacity="0.8"/><ellipse cx="12.4" cy="7.5" rx="2.2" ry="1.5" fill="#8c8c8c" opacity="0.8"/><ellipse cx="16.4" cy="33.5" rx="3.3" ry="2.5" fill="#4a4a4a" opacity="0.8"/><ellipse cx="22.2" cy="27.2" rx="1.8" ry="1.0" fill="#3d3d3d" opacity="0.8"/><ellipse cx="13.2" cy="24.2" rx="2.1" ry="1.5" fill="#8c8c8c" opacity="0.8"/><ellipse cx="21.6" cy="2.9" rx="4.3" ry="3.0" fill="#3d3d3d" opacity="0.8"/><ellipse cx="13.6" cy="32.2" rx="3.7" ry="3.7" fill="#8c8c8c" opacity="0.8"/><ellipse cx="0.9" cy="20.1" rx="2.9" ry="1.7" fill="#3d3d3d" opacity="0.8"/><ellipse cx="28.1" cy="33.3" rx="3.5" ry="2.0" fill="#5d5d5d" opacity="0.8"/><ellipse cx="18.6" cy="0.7" rx="3.9" ry="3.2" fill="#3d3d3d" opacity="0.8"/><ellipse cx="17.9" cy="31.7" rx="2.8" ry="1.7" fill="#959595" opacity="0.8"/><ellipse cx="29.7" cy="1.0" rx="2.1" ry="1.3" fill="#787878" opacity="0.8"/><ellipse cx="19.9" cy="8.8" rx="2.8" ry="1.5" fill="#8c8c8c" opacity="0.8"/><ellipse cx="25.2" cy="30.5" rx="3.5" ry="3.3" fill="#959595" opacity="0.8"/><ellipse cx="14.3" cy="31.2" rx="3.0" ry="1.7" fill="#787878" opacity="0.8"/><ellipse cx="17.4" cy="29.7" rx="3.8" ry="1.9" fill="#787878" opacity="0.8"/><ellipse cx="27.2" cy="5.9" rx="2.9" ry="1.6" fill="#3d3d3d" opacity="0.8"/><ellipse cx="2.1" cy="23.2" rx="3.1" ry="2.8" fill="#a3a3a3" opacity="0.8"/><ellipse cx="3.6" cy="19.1" rx="2.2" ry="1.2" fill="#5d5d5d" opacity="0.8"/><ellipse cx="3.3" cy="15.4" rx="1.6" ry="1.1" fill="#4a4a4a" opacity="0.8"/><ellipse cx="20.8" cy="17.2" rx="3.0" ry="1.9" fill="#3d3d3d" opacity="0.8"/><ellipse cx="17.3" cy="27.5" rx="3.0" ry="2.6" fill="#8c8c8c" opacity="0.8"/><ellipse cx="29.8" cy="32.0" rx="2.3" ry="2.2" fill="#787878" opacity="0.8"/><ellipse cx="6.9" cy="15.2" rx="2.7" ry="2.0" fill="#a3a3a3" opacity="0.8"/><ellipse cx="2.5" cy="8.2" rx="1.7" ry="1.1" fill="#3d3d3d" opacity="0.8"/><ellipse cx="4.2" cy="26.4" rx="4.3" ry="3.6" fill="#3d3d3d" opacity="0.8"/><ellipse cx="4.9" cy="30.0" rx="4.4" ry="3.8" fill="#8c8c8c" opacity="0.8"/><ellipse cx="3.2" cy="30.1" rx="2.0" ry="1.8" fill="#3d3d3d" opacity="0.8"/><ellipse cx="5.5" cy="14.7" rx="3.0" ry="2.2" fill="#5d5d5d" opacity="0.8"/><path d="M33 33 L33 25 L25 33 Z" fill="#fff"/><rect x="0.5" y="0.5" width="33" height="33" fill="none" stroke="#141414"/></svg>
<!-- p5_propicons -->
<div class="abs" style="left:371.00px;top:81.00px;width:30.50px;height:30.50px;background:#111;border:1.6px solid #e9a540;border-radius:2px"></div>
<div class="abs" style="left:476.00px;top:81.00px;width:30.50px;height:30.50px;background:#111;border:1.6px solid #e9a540;border-radius:2px"></div>
<div class="abs" style="left:626.00px;top:81.00px;width:30.50px;height:30.50px;background:#111;border:1.6px solid #e9a540;border-radius:2px"></div>
<svg class="abs" style="left:297.00px;top:82.00px;" width="28" height="30" viewBox="0 0 28 30"><ellipse cx="14.5" cy="9.5" rx="10" ry="6.8" fill="none" stroke="#e4e4e4" stroke-width="1.4" stroke-dasharray="2.6 1.7"/><path d="M8.2 6.5 A3.6 3.6 0 1 1 8.5 11.8" fill="none" stroke="#e4e4e4" stroke-width="1.8"/><path d="M5 7.6 L9.4 4 L9.8 8.8 Z" fill="#e4e4e4"/><circle cx="5.5" cy="14.6" r="1.5" fill="none" stroke="#e4e4e4" stroke-width="1"/><path d="M6.6 16.5 C8 18.5 7.5 21 5.8 23.5" fill="none" stroke="#e4e4e4" stroke-width="1.3" stroke-dasharray="2.6 1.7"/></svg>
<svg class="abs" style="left:341.00px;top:82.00px;" width="30" height="30" viewBox="0 0 30 30"><path d="M5.5 6 L15.5 3 L17.5 11 L23 13.2 L7 17.5 C3.5 14 3.5 9 5.5 6 Z" fill="none" stroke="#e4e4e4" stroke-width="1.4" stroke-dasharray="2.6 1.7"/><path d="M19.5 11 L25.5 13.3 L19.8 15 Z" fill="#e4e4e4"/><circle cx="7.4" cy="17.3" r="1.5" fill="none" stroke="#e4e4e4" stroke-width="1"/><path d="M8.6 19 C10 21 9.5 23.5 7.8 26" fill="none" stroke="#e4e4e4" stroke-width="1.3" stroke-dasharray="2.6 1.7"/></svg>
<svg class="abs" style="left:373.00px;top:83.00px;" width="27" height="27" viewBox="0 0 27 27"><ellipse cx="13.8" cy="9.3" rx="10.6" ry="6.9" fill="none" stroke="#e8a93a" stroke-width="1.5" stroke-dasharray="2.6 1.7"/><circle cx="6.3" cy="15.4" r="1.6" fill="none" stroke="#e8a93a" stroke-width="1.1"/><path d="M7.5 17 C9 19 8.6 21.5 6.8 24" fill="none" stroke="#e8a93a" stroke-width="1.4" stroke-dasharray="2.6 1.7"/></svg>
<svg class="abs" style="left:402.00px;top:84.00px;" width="28" height="24" viewBox="0 0 28 24"><ellipse cx="13.5" cy="11.5" rx="11" ry="7.2" fill="none" stroke="#e4e4e4" stroke-width="1.4" stroke-dasharray="2.6 1.7"/></svg>
<svg class="abs" style="left:432.00px;top:84.00px;" width="28" height="24" viewBox="0 0 28 24"><rect x="2.5" y="4.5" width="22" height="14.5" fill="none" stroke="#e4e4e4" stroke-width="1.5" stroke-dasharray="2.6 1.7"/></svg>
<svg class="abs" style="left:476.00px;top:81.00px;" width="31" height="31" viewBox="0 0 31 31"><rect x="5" y="5" width="21" height="21" fill="none" stroke="#e8a93a" stroke-width="1.7" stroke-dasharray="2.6 1.7"/></svg>
<svg class="abs" style="left:508.00px;top:82.00px;" width="28" height="30" viewBox="0 0 28 30"><path d="M5 1.5 V9 M1.2 5.2 H8.8" stroke="#e4e4e4" stroke-width="1.3"/><rect x="5.5" y="10.5" width="18" height="14" fill="none" stroke="#e4e4e4" stroke-width="1.5" stroke-dasharray="2.6 1.7"/></svg>
<svg class="abs" style="left:538.00px;top:82.00px;" width="28" height="30" viewBox="0 0 28 30"><path d="M1.2 5.2 H8" stroke="#e4e4e4" stroke-width="1.3"/><rect x="5.5" y="10.5" width="18" height="14" fill="none" stroke="#e4e4e4" stroke-width="1.5" stroke-dasharray="2.6 1.7"/></svg>
<svg class="abs" style="left:582.00px;top:82.00px;" width="28" height="30" viewBox="0 0 28 30"><path d="M2 3 H8.5 M2 6.6 H8.5" stroke="#e4e4e4" stroke-width="1.2"/><circle cx="9.5" cy="17.5" r="6.6" fill="#8a8a8a" stroke="#d5d5d5" stroke-width="1.3"/><path d="M17.5 2.5 L25.5 16.5 H10.5 Z" fill="#c9c9c9" stroke="#e8e8e8" stroke-width="0.8"/></svg>
<svg class="abs" style="left:626.00px;top:81.00px;" width="31" height="31" viewBox="0 0 31 31"><circle cx="15.5" cy="15.5" r="11" fill="#f4b454"/><path d="M15.5 4.5 A11 11 0 0 1 15.5 26.5 Z" fill="#f7c270"/><path d="M15.5 3.5 V27.5" stroke="#fbe0b0" stroke-width="1.2"/><path d="M25 10 L27 11.5 L27 19.5 L25 21" fill="#f4b454"/></svg>
<!-- p6_panels -->
<div class="abs" style="left:1598.00px;top:127.00px;width:267.50px;height:395.00px;background:#3a3a3a;"></div>
<div class="abs" style="left:1598.00px;top:127.00px;width:267.50px;height:15.00px;background:linear-gradient(#161616,#383838);"></div>
<div class="abs" style="left:1602px;top:131px;width:8px;height:8px;border-radius:50%;background:#f4f4f4"></div>
<svg class="abs" style="left:1846.00px;top:131.50px;" width="15" height="9.2" viewBox="0 0 15 9.2"><rect x="0" y="0" width="15" height="2.2" fill="#f2f2f2"/><rect x="0" y="4.6" width="15" height="2.2" fill="#f2f2f2"/></svg>
<div class="abs" style="left:1601.00px;top:145.50px;width:264.00px;height:21.50px;background:#1b1b1b;"></div>
<div class="abs" style="left:1606.00px;top:146.50px;width:62.00px;height:20.50px;background:#303030;border:1px solid #3c3c3c;border-bottom:none"></div>
<svg class="abs" style="left:1610.50px;top:151.00px;" width="13" height="14" viewBox="0 0 13 14"><rect x="0.8" y="0.8" width="11.4" height="12.4" rx="1.5" fill="none" stroke="#e6e6e6" stroke-width="1.1"/><path d="M3.8 4 L9.2 10 M9.2 4 L3.8 10" stroke="#e6e6e6" stroke-width="1.1"/></svg>
<div class="t" style="left:1628.50px;top:150.90px;font-size:15.00px;color:#ececec;letter-spacing:-0.569px;">Color</div>
<svg class="abs" style="left:1845.00px;top:150.50px;" width="16" height="15.6" viewBox="0 0 16 15.6"><rect x="0" y="0" width="16" height="2.2" fill="#f2f2f2"/><rect x="0" y="5.2" width="16" height="2.2" fill="#f2f2f2"/><rect x="0" y="10.4" width="16" height="2.2" fill="#f2f2f2"/></svg>
<div class="abs" style="left:1610.3px;top:183.9px;width:243.4px;height:243.4px;border-radius:50%;background:conic-gradient(from -60deg,#ff0000,#ffff00,#00ff00,#00ffff,#0000ff,#ff00ff,#ff0000);-webkit-mask:radial-gradient(circle closest-side,transparent 84.5274%,#000 85.7274%,#000 99%,transparent 100%);mask:radial-gradient(circle closest-side,transparent 84.5274%,#000 85.7274%,#000 99%,transparent 100%)"></div>
<svg class="abs" style="left:0;top:0" width="1912" height="540"><defs><linearGradient id="tw" gradientUnits="userSpaceOnUse" x1="1682.75" y1="220.296" x2="1756.62" y2="348.252"><stop offset="0" stop-color="#fff"/><stop offset="1" stop-color="#fff" stop-opacity="0"/></linearGradient><linearGradient id="tb" gradientUnits="userSpaceOnUse" x1="1682.75" y1="390.904" x2="1756.62" y2="262.948"><stop offset="0" stop-color="#000"/><stop offset="1" stop-color="#000" stop-opacity="0"/></linearGradient></defs><polygon points="1830.5,305.6 1682.75,220.296 1682.75,390.904" fill="#0000ff"/><polygon points="1830.5,305.6 1682.75,220.296 1682.75,390.904" fill="url(#tw)"/><polygon points="1830.5,305.6 1682.75,220.296 1682.75,390.904" fill="url(#tb)"/><circle cx="1682" cy="218" r="5.6" fill="none" stroke="#111" stroke-width="1.6"/><circle cx="1682" cy="218" r="4.1" fill="none" stroke="#eee" stroke-width="1.2"/></svg>
<svg class="abs" style="left:1832.00px;top:395.00px;" width="26" height="34" viewBox="0 0 26 34"><path d="M2 2.5 C5 4.5 6.5 8.5 5.5 13 L2 15.5 Z" fill="#35d13c"/><path d="M2 10 L5.6 12.5 L2 15.5 Z" fill="#d8e030"/><circle cx="11.5" cy="9" r="4.9" fill="#ececec"/><path d="M9.2 12 H13.8 L13.6 22 H9.4 Z" fill="#ececec"/><path d="M2 24.5 H20 Q22.5 24.5 22.5 27 V29 H2 Z" fill="#ececec"/><rect x="2" y="30.6" width="19" height="1.5" fill="#ececec"/></svg>
<div class="abs" style="left:1834.00px;top:445.50px;width:26.00px;height:16.80px;background:#2a2a2a;border:1px solid #555"></div>
<div class="t" style="left:1836.00px;top:448.12px;font-size:12.50px;color:#f0f0f0;letter-spacing:-0.285px;">255</div>
<div class="abs" style="left:1834.00px;top:465.50px;width:26.00px;height:16.80px;background:#2a2a2a;border:1px solid #555"></div>
<div class="t" style="left:1836.00px;top:468.12px;font-size:12.50px;color:#f0f0f0;letter-spacing:-0.285px;">255</div>
<div class="abs" style="left:1834.00px;top:485.50px;width:26.00px;height:16.80px;background:#2a2a2a;border:1px solid #555"></div>
<div class="t" style="left:1836.00px;top:488.12px;font-size:12.50px;color:#f0f0f0;letter-spacing:-0.285px;">255</div>
<div class="abs" style="left:1565.00px;top:379.00px;width:269.00px;height:318.50px;background:#3a3a3a;box-shadow:0 0 0 1px #2a2a2a"></div>
<div class="abs" style="left:1565.00px;top:379.00px;width:269.00px;height:30.00px;background:linear-gradient(#3c3c3c 0%,#2c2c2c 45%,#1d1d1d 100%);"></div>
<div class="abs" style="left:1569px;top:390px;width:8.5px;height:8.5px;border-radius:50%;background:#f4f4f4"></div>
<div class="t" style="left:1595.00px;top:387.38px;font-size:15.50px;color:#f4f4f4;letter-spacing:-0.502px;">Color and Layers</div>
<svg class="abs" style="left:1814.00px;top:390.00px;" width="15" height="10" viewBox="0 0 15 10"><rect x="0" y="0" width="15" height="2.2" fill="#f2f2f2"/><rect x="0" y="5" width="15" height="2.2" fill="#f2f2f2"/></svg>
<div class="abs" style="left:1568.00px;top:412.00px;width:263.00px;height:22.00px;background:#1b1b1b;"></div>
<div class="abs" style="left:1573.00px;top:413.00px;width:67.50px;height:21.00px;background:#303030;border:1px solid #3c3c3c;border-bottom:none"></div>
<svg class="abs" style="left:1577.50px;top:418.00px;" width="13" height="14" viewBox="0 0 13 14"><rect x="0.8" y="0.8" width="11.4" height="12.4" rx="1.5" fill="none" stroke="#e6e6e6" stroke-width="1.1"/><path d="M3.8 4 L9.2 10 M9.2 4 L3.8 10" stroke="#e6e6e6" stroke-width="1.1"/></svg>
<div class="t" style="left:1595.00px;top:417.30px;font-size:15.00px;color:#ececec;letter-spacing:-1.170px;">Layers</div>
<svg class="abs" style="left:1814.00px;top:417.50px;" width="15.5" height="15.9" viewBox="0 0 15.5 15.9"><rect x="0" y="0" width="15.5" height="2.2" fill="#f2f2f2"/><rect x="0" y="5.3" width="15.5" height="2.2" fill="#f2f2f2"/><rect x="0" y="10.6" width="15.5" height="2.2" fill="#f2f2f2"/></svg>
<div class="abs" style="left:1572.50px;top:443.50px;width:254.50px;height:24.00px;background:#272727;border:1px solid #161616"></div>
<div class="abs" style="left:1699.00px;top:443.50px;width:1.40px;height:24.00px;background:#161616;"></div>
<div class="t" style="left:1580.00px;top:449.87px;font-size:13.50px;color:#6e6e6e;letter-spacing:-0.396px;">Default</div>
<div class="t" style="left:1706.50px;top:449.87px;font-size:13.50px;color:#6e6e6e;letter-spacing:-0.296px;">Ignore</div>
<svg class="abs" style="left:1683.00px;top:451.00px;" width="10" height="8" viewBox="0 0 10 8"><path d="M1.5 1.8 L5 5.2 L8.5 1.8" fill="none" stroke="#4a4a4a" stroke-width="1.4"/></svg>
<svg class="abs" style="left:1810.00px;top:451.00px;" width="10" height="8" viewBox="0 0 10 8"><path d="M1.5 1.8 L5 5.2 L8.5 1.8" fill="none" stroke="#4a4a4a" stroke-width="1.4"/></svg>
<svg class="abs" style="left:1573.00px;top:473.00px;" width="18" height="19" viewBox="0 0 18 19"><rect x="0" y="1" width="3.4" height="3.4" fill="#8a8a8a"/><rect x="0" y="7.8" width="3.4" height="3.4" fill="#8a8a8a"/><rect x="0" y="14.6" width="3.4" height="3.4" fill="#8a8a8a"/><rect x="3.4" y="4.4" width="3.4" height="3.4" fill="#8a8a8a"/><rect x="3.4" y="11.2" width="3.4" height="3.4" fill="#8a8a8a"/><rect x="6.8" y="1" width="3.4" height="3.4" fill="#8a8a8a"/><rect x="6.8" y="7.8" width="3.4" height="3.4" fill="#8a8a8a"/><rect x="6.8" y="14.6" width="3.4" height="3.4" fill="#8a8a8a"/><rect x="10.2" y="4.4" width="3.4" height="3.4" fill="#8a8a8a"/><rect x="10.2" y="11.2" width="3.4" height="3.4" fill="#8a8a8a"/><rect x="13.6" y="1" width="3.4" height="3.4" fill="#8a8a8a"/><rect x="13.6" y="7.8" width="3.4" height="3.4" fill="#8a8a8a"/><rect x="13.6" y="14.6" width="3.4" height="3.4" fill="#8a8a8a"/><rect x="1.5" y="1.5" width="4.5" height="4" fill="#777"/><path d="M2.3 2 V0.8 H5.2 V2" stroke="#777" fill="none"/></svg>
<svg class="abs" style="left:1593.00px;top:473.00px;" width="18" height="19" viewBox="0 0 18 19"><rect x="0.7" y="0.7" width="10.5" height="10" fill="#777" stroke="#8c8c8c"/><rect x="5.5" y="6" width="11" height="11" fill="#6c6c6c" stroke="#8c8c8c"/><path d="M3 3 L10 10 M10 10 V6.5 M10 10 H6.5" stroke="#555" stroke-width="1.3"/></svg>
<svg class="abs" style="left:1613.00px;top:473.00px;" width="18" height="19" viewBox="0 0 18 19"><rect x="0.8" y="0.8" width="11" height="11" fill="#3a3a3a" stroke="#d0d0d0" stroke-width="1.3"/><rect x="5.6" y="6" width="11" height="11" fill="#8a8a8a" stroke="#d0d0d0" stroke-width="1.3"/></svg>
<div class="abs" style="left:1635.50px;top:473.50px;width:138.00px;height:17.50px;background:#4b4b4b;"></div>
<div class="abs" style="left:1778.00px;top:473.50px;width:50.00px;height:17.50px;background:#424242;border:1px solid #4c4c4c"></div>
<div class="t" style="left:1790.25px;top:474.60px;font-size:13.00px;color:#8c8c8c;">100%</div>
<div class="abs" style="left:1572.50px;top:498.50px;width:255.50px;height:155.50px;background:#272727;border:1.3px solid #141414"></div>
<div class="abs" style="left:1573.50px;top:499.50px;width:253.50px;height:41.50px;background:#656565;"></div>
<div class="abs" style="left:1597.80px;top:499.50px;width:1.40px;height:41.50px;background:#1c1c1c;"></div>
<svg class="abs" style="left:1575.00px;top:512.00px;" width="20" height="14" viewBox="0 0 20 14"><path d="M1 7 C4.5 1.8 15.5 1.8 19 7 C15.5 12.2 4.5 12.2 1 7 Z" fill="#f2f2f2"/><circle cx="10" cy="7" r="3.3" fill="#656565"/></svg>
<div class="abs" style="left:1601.50px;top:500.20px;width:39.50px;height:39.50px;background:#fff;border:1.2px solid #0e0e0e"></div>
<svg class="abs" style="left:1603.00px;top:502.00px;" width="36" height="36" viewBox="0 0 36 36"><path d="M5 30 L5 22 L8 17 L10 13 L13 12 L15 17 L17 22 L19 30 Z" fill="#8c8c8c"/><path d="M9 14 L11 10 L14 11 L14 17 Z" fill="#d0d0d0" stroke="#555" stroke-width="0.6"/><path d="M23 30 L23 21 L26 15 L29 10 L33 11 L34 17 L35 30 Z" fill="#8b5e43"/><path d="M26 15 L29 9 L33 10 L33 16 L29 13 Z" fill="#a39d95"/></svg>
<div class="t" style="left:1649.00px;top:513.30px;font-size:15.00px;color:#e8e8e8;letter-spacing:-0.893px;">Canvas</div>
<svg class="abs" style="left:1804.00px;top:503.00px;" width="20" height="12" viewBox="0 0 20 12"><path d="M2 5.5 L15 2 L18.5 6 L5.5 9.8 Z" fill="none" stroke="#ededed" stroke-width="1.3"/></svg>
<svg class="abs" style="left:1572.00px;top:659.00px;" width="20" height="20" viewBox="0 0 20 20"><path d="M2 6.5 L11 2 L16.5 6 L7.5 10.8 Z M2 10 L7.5 14 L16.5 9.5 M2 13.2 L7.5 17.2 L16.5 12.8" fill="none" stroke="#e8e8e8" stroke-width="1.4" stroke-linejoin="round"/><path d="M2 6.5 L11 2 L16.5 6 L7.5 10.8 Z" fill="#cfcfcf"/><path d="M18 18 L18 13 L13 18 Z" fill="#f0f0f0"/></svg>
<svg class="abs" style="left:1596.00px;top:659.00px;" width="20" height="20" viewBox="0 0 20 20"><path d="M9 2 L12 5 L10.5 6.5 L14 10 L15.5 8.5 L18 11.5 L13.5 15 L11 12 L4 18 L2 16 L8.5 9.5 L5.5 6 Z" fill="#e8e8e8"/><path d="M18 18 L18 13 L13 18 Z" fill="#f0f0f0"/></svg>
<svg class="abs" style="left:1619.00px;top:659.00px;" width="20" height="20" viewBox="0 0 20 20"><rect x="1.5" y="1.5" width="10.5" height="10.5" fill="#8a8a8a" stroke="#bdbdbd"/><rect x="6.5" y="6.5" width="10" height="10" fill="#777" stroke="#bdbdbd"/><path d="M18 18 L18 13 L13 18 Z" fill="#f0f0f0"/></svg>
<svg class="abs" style="left:1652.00px;top:659.50px;" width="19" height="19" viewBox="0 0 19 19"><rect x="0.5" y="0.5" width="17.5" height="17.5" fill="#ededed"/><circle cx="9.3" cy="9.3" r="6.2" fill="#2c2c2c"/></svg>
<svg class="abs" style="left:1685.00px;top:658.50px;" width="16" height="21" viewBox="0 0 16 21"><path d="M4.2 9 V5.5 A3.6 3.6 0 0 1 11.4 5.5 V9" fill="none" stroke="#ededed" stroke-width="1.6"/><rect x="1.2" y="8.8" width="13.2" height="10.4" fill="#ededed"/><circle cx="7.8" cy="12.8" r="1.4" fill="#333"/><rect x="7.2" y="13.2" width="1.2" height="3.4" fill="#333"/></svg>
<svg class="abs" style="left:1809.00px;top:659.00px;" width="17" height="21" viewBox="0 0 17 21"><path d="M1 4.2 H16 M5.5 4 V1.8 H11.5 V4" fill="none" stroke="#7e7e7e" stroke-width="1.5"/><path d="M2.6 6 H14.4 L13.6 19.5 H3.4 Z" fill="#7e7e7e"/><path d="M6.2 8 V17.5 M8.5 8 V17.5 M10.8 8 V17.5" stroke="#3a3a3a" stroke-width="1"/></svg>
<div class="abs" style="left:1687.2px;top:682.7px;width:4.6px;height:4.6px;border-radius:50%;background:#e4e4e4"></div>
<div class="abs" style="left:1697px;top:682.7px;width:4.6px;height:4.6px;border-radius:50%;background:#e4e4e4"></div>
<div class="abs" style="left:1707px;top:682.7px;width:4.6px;height:4.6px;border-radius:50%;background:#e4e4e4"></div>
<div class="abs" style="left:1512.00px;top:769.50px;width:240.50px;height:252.00px;background:#f0f0f0;border:1px solid #a8d4ee;border-top-color:#e4eef9;border-left-color:#dbe8f6;border-bottom-color:#8fd6f3;border-right-color:#93d8f3;border-radius:2px 2px 0 0"></div>
<div class="abs" style="left:1513.00px;top:770.50px;width:238.50px;height:14.50px;background:linear-gradient(#c3d6ec,#a9c4e3);"></div>
<svg class="abs" style="left:1673.00px;top:804.00px;" width="17" height="10" viewBox="0 0 17 10"><path d="M1.5 1.2 H15 L8.2 8.6 Z" fill="#e03444"/><path d="M1.5 1.2 H15 L13.5 2.8 H3 Z" fill="#b82030"/></svg>
<div class="abs" style="left:1634.00px;top:820.00px;width:90.00px;height:50.00px;background:#555;filter:blur(0.6px)"></div>
<div class="abs" style="left:1632.00px;top:818.00px;width:90.00px;height:50.00px;background:#fff;"></div>
<svg class="abs" style="left:1632.00px;top:818.00px;" width="90" height="50" viewBox="0 0 90 50"><path d="M28 47 L28 32 L31 22 L36 14 L42 10 L47 14 L50 24 L52 34 L60 38 L61 43 L50 47 Z" fill="#fff" stroke="#444" stroke-width="0.8" stroke-dasharray="1.2 0.8"/><path d="M28 47 L28 32 L31 24 L36 21 L38 30 L40 40 L44 47 Z" fill="#8d8d8d"/><path d="M36 14 L40 8 L46 9 L47 18 L44 26 L40 22 Z" fill="#e8e8e8" stroke="#555" stroke-width="0.7"/><path d="M40 24 L44 30 L43 40 L40 38 Z" fill="#b0b0b0"/><path d="M52 36 L60 38 L61 43 L52 42 Z" fill="#e8e8e8" stroke="#333" stroke-width="0.8"/></svg>
<div class="t" style="left:1573.00px;top:901.03px;font-size:10.00px;color:#222;letter-spacing:0.003px;">---</div>
<div class="t" style="left:1678.50px;top:901.39px;font-size:11.00px;color:#111;">1</div>
<div class="t" style="left:1541.00px;top:937.69px;font-size:11.00px;color:#111;letter-spacing:-0.656px;">Frame</div>
<div class="t" style="left:1594.00px;top:937.69px;font-size:11.00px;color:#111;">1</div>
<div class="t" style="left:1616.00px;top:937.69px;font-size:11.00px;color:#111;letter-spacing:-0.087px;">of</div>
<div class="t" style="left:1651.00px;top:937.69px;font-size:11.00px;color:#111;">8</div>
<div class="abs" style="left:1533.60px;top:960.00px;width:21.00px;height:20.50px;background:#7272a6;border:1.6px solid;border-color:#a7a7d0 #34345c #34345c #a7a7d0;box-shadow:1.5px 1.5px 0 #55556a"></div>
<svg class="abs" style="left:1532.60px;top:959.00px;" width="22" height="22" viewBox="0 0 22 22"><path d="M6 5.5 H8.2 V16.5 H6 Z M16.5 5.5 V16.5 L8.8 11 Z" fill="#0d0d1a"/></svg>
<div class="abs" style="left:1568.00px;top:960.00px;width:21.00px;height:20.50px;background:#7272a6;border:1.6px solid;border-color:#a7a7d0 #34345c #34345c #a7a7d0;box-shadow:1.5px 1.5px 0 #55556a"></div>
<svg class="abs" style="left:1567.00px;top:959.00px;" width="22" height="22" viewBox="0 0 22 22"><path d="M12 5.5 V16.5 L5 11 Z M13 5.5 H15 V16.5 H13 Z" fill="#0d0d1a"/></svg>
<div class="abs" style="left:1603.00px;top:960.00px;width:21.00px;height:20.50px;background:#7272a6;border:1.6px solid;border-color:#a7a7d0 #34345c #34345c #a7a7d0;box-shadow:1.5px 1.5px 0 #55556a"></div>
<svg class="abs" style="left:1602.00px;top:959.00px;" width="22" height="22" viewBox="0 0 22 22"><rect x="5.5" y="5.5" width="11" height="11" fill="#0d0d1a"/></svg>
<div class="abs" style="left:1638.00px;top:960.00px;width:21.00px;height:20.50px;background:#7272a6;border:1.6px solid;border-color:#a7a7d0 #34345c #34345c #a7a7d0;box-shadow:1.5px 1.5px 0 #55556a"></div>
<svg class="abs" style="left:1637.00px;top:959.00px;" width="22" height="22" viewBox="0 0 22 22"><path d="M6 5 V17 L16.5 11 Z" fill="#0d0d1a"/></svg>
<div class="abs" style="left:1672.80px;top:960.00px;width:21.00px;height:20.50px;background:#7272a6;border:1.6px solid;border-color:#a7a7d0 #34345c #34345c #a7a7d0;box-shadow:1.5px 1.5px 0 #55556a"></div>
<svg class="abs" style="left:1671.80px;top:959.00px;" width="22" height="22" viewBox="0 0 22 22"><path d="M7 5.5 H9 V16.5 H7 Z M10 5.5 V16.5 L17 11 Z" fill="#0d0d1a"/></svg>
<div class="abs" style="left:1708.30px;top:960.00px;width:21.00px;height:20.50px;background:#7272a6;border:1.6px solid;border-color:#a7a7d0 #34345c #34345c #a7a7d0;box-shadow:1.5px 1.5px 0 #55556a"></div>
<svg class="abs" style="left:1707.30px;top:959.00px;" width="22" height="22" viewBox="0 0 22 22"><path d="M5.5 5.5 V16.5 L13.2 11 Z M13.8 5.5 H16 V16.5 H13.8 Z" fill="#0d0d1a"/></svg>
<div class="t" style="left:1529.00px;top:993.69px;font-size:11.00px;color:#111;letter-spacing:-0.299px;">Playback:</div>
<div class="abs" style="left:1577.50px;top:994.00px;width:119.00px;height:11.50px;background:#dcdcdc;border:1.5px solid #222"></div>
<div class="abs" style="left:1586.00px;top:995.50px;width:62.00px;height:8.50px;background:#0a6ad0;"></div>
<svg class="abs" style="left:1577.00px;top:993.00px;" width="122" height="14" viewBox="0 0 122 14"><rect x="2" y="2.5" width="7" height="8" fill="#cfcfcf"/><path d="M7.3 4 L3.8 6.5 L7.3 9 Z" fill="#111"/><rect x="112" y="2.5" width="7" height="8" fill="#cfcfcf"/><path d="M113.5 4 L117 6.5 L113.5 9 Z" fill="#111"/><path d="M71 4 L75 10.5 H67 Z" fill="#cfcfcf" stroke="#333" stroke-width="0.8"/></svg>
<div class="t" style="left:1701.50px;top:993.69px;font-size:11.00px;color:#111;letter-spacing:-0.614px;">25 FPS</div>
<div class="t" style="left:1549.30px;top:1030.69px;font-size:26.00px;color:#858585;letter-spacing:-0.574px;">Activate Windows</div>
<div class="t" style="left:1549.30px;top:1063.51px;font-size:18.30px;color:#7e7e7e;letter-spacing:-0.159px;">Go to Settings to activate Windows.</div>
<!-- p7_taskbar -->
<div class="abs" style="left:0.00px;top:1140.50px;width:1912.00px;height:43.00px;background:#1b1b1b;"></div>
<svg class="abs" style="left:14.00px;top:1155.00px;" width="21" height="21" viewBox="0 0 21 21"><path d="M0 3 L9 1.7 V10 H0 Z M10.2 1.5 L21 0 V10 H10.2 Z M0 11.2 H9 V19.4 L0 18.1 Z M10.2 11.2 H21 V21 L10.2 19.6 Z" fill="#fff"/></svg>
<div class="abs" style="left:55.00px;top:1141.00px;width:430.00px;height:42.00px;background:#f2f2f2;border-top:1px solid #fff"></div>
<svg class="abs" style="left:68.00px;top:1153.00px;" width="24" height="24" viewBox="0 0 24 24"><circle cx="14.5" cy="9" r="6.6" fill="none" stroke="#111" stroke-width="1.7"/><path d="M9.8 13.8 L2 21.5" stroke="#111" stroke-width="1.9"/></svg>
<div class="t" style="left:105.40px;top:1156.56px;font-size:18.00px;color:#1f1f1f;letter-spacing:0.206px;">Type here to search</div>
<div class="abs" style="left:505px;top:1155px;width:20px;height:20px;border-radius:50%;border:2.6px solid #fff"></div>
<svg class="abs" style="left:563.00px;top:1149.00px;" width="31" height="32" viewBox="0 0 31 32"><path d="M9.5 9 V4.5 A2.5 2.5 0 0 1 12 2 H19 A2.5 2.5 0 0 1 21.5 4.5 V9" fill="none" stroke="#e6e6e6" stroke-width="2"/><path d="M1 9 H30 V30 H1 Z" fill="#f3f3f3"/><rect x="10" y="14" width="4.8" height="4.8" fill="#f25022"/><rect x="16" y="14" width="4.8" height="4.8" fill="#7fba00"/><rect x="10" y="20" width="4.8" height="4.8" fill="#00a4ef"/><rect x="16" y="20" width="4.8" height="4.8" fill="#ffb900"/></svg>
<svg class="abs" style="left:627.50px;top:1152.50px;" width="25" height="25" viewBox="0 0 25 25"><g transform="translate(12.5 12.5)"><rect x="-2.6" y="-11.8" width="5.2" height="6" fill="#fff" transform="rotate(0)"/><rect x="-2.6" y="-11.8" width="5.2" height="6" fill="#fff" transform="rotate(45)"/><rect x="-2.6" y="-11.8" width="5.2" height="6" fill="#fff" transform="rotate(90)"/><rect x="-2.6" y="-11.8" width="5.2" height="6" fill="#fff" transform="rotate(135)"/><rect x="-2.6" y="-11.8" width="5.2" height="6" fill="#fff" transform="rotate(180)"/><rect x="-2.6" y="-11.8" width="5.2" height="6" fill="#fff" transform="rotate(225)"/><rect x="-2.6" y="-11.8" width="5.2" height="6" fill="#fff" transform="rotate(270)"/><rect x="-2.6" y="-11.8" width="5.2" height="6" fill="#fff" transform="rotate(315)"/><circle r="7.2" fill="none" stroke="#fff" stroke-width="3.6"/></g></svg>
<svg class="abs" style="left:690.00px;top:1151.00px;" width="26" height="29" viewBox="0 0 26 29"><path d="M1 13.5 C2.5 5 8 1 14 1 C21 1 25.5 6 25.5 13 V16.5 H8.8 C9.2 20.5 12.5 22.6 16.5 22.6 C19.6 22.6 22.2 21.8 24.6 20.4 V26 C22 27.4 19 28.2 15.5 28.2 C7.5 28.2 3 23.5 3 16.5 C3 13 4.5 10 7.5 8.2 C4.5 9 2.2 11 1 13.5 Z M9 11.8 H18.2 C18.2 8.6 16.6 6.6 13.8 6.6 C11.2 6.6 9.4 8.8 9 11.8 Z" fill="#1382e0" fill-rule="evenodd"/></svg>
<svg class="abs" style="left:751.00px;top:1152.00px;" width="28" height="25" viewBox="0 0 28 25"><path d="M0.5 2.5 H10 L12.5 5 H27.5 V22 H0.5 Z" fill="#e9b940"/><path d="M0.5 7 H27.5 V22.5 H0.5 Z" fill="#f9d566"/><path d="M6.5 13.5 H21.5 V22.5 H17.5 V17.5 H10.5 V22.5 H6.5 Z" fill="#3f8fd8"/><rect x="0.5" y="21.5" width="27" height="2" fill="#d9a630"/></svg>
<svg class="abs" style="left:813.00px;top:1149.00px;" width="28" height="30" viewBox="0 0 28 30"><path d="M14 1 L17 1 L24 22 H4 L11 1 Z" fill="#f28a1c"/><path d="M9.6 8.5 H18.4 L19.9 13 H8.1 Z" fill="#f4f4f4"/><path d="M6.9 16.5 H21.1 L22.4 20.5 H5.6 Z" fill="#f4f4f4"/><path d="M3 21.5 H25 L27 28.5 H1 Z" fill="#f39a2e"/><path d="M1 28.5 H27 V29.5 H1 Z" fill="#c96a10"/></svg>
<div class="abs" style="left:875.00px;top:1150.70px;width:27.50px;height:26.30px;background:#0a1e2e;border:1.6px solid #2fc3ee"></div>
<div class="t" style="left:879.50px;top:1156.96px;font-size:16.00px;color:#35c8f2;letter-spacing:-0.785px;font-weight:700;">Ps</div>
<svg class="abs" style="left:935.00px;top:1149.00px;" width="30" height="29" viewBox="0 0 30 29"><path d="M9 1.5 H27.5 V25 H9 Z" fill="#f2f5fa"/><path d="M3 5 L21 2.5 V24 L3 26 Z" fill="#dfe8f5"/><path d="M19 16 L29 19.5 L26 28 L17 24.5 Z" fill="#fbfcfe" stroke="#c9d2e2" stroke-width="0.6"/><path d="M21 20 L27 22 M20.3 22.3 L26 24.2" stroke="#b8c2d4" stroke-width="0.7"/></svg>
<div class="t" style="left:937.00px;top:1151.03px;font-size:23.00px;color:#1f55b5;font-weight:700;">W</div>
<div class="abs" style="left:999.00px;top:1150.70px;width:27.50px;height:26.30px;background:#1d0838;border:1.6px solid #a892ff"></div>
<div class="t" style="left:1003.00px;top:1156.76px;font-size:16.00px;color:#cfa8ff;letter-spacing:-0.727px;font-weight:700;">Ae</div>
<div class="abs" style="left:1060.5px;top:1150.5px;width:28px;height:28px;border-radius:50%;background:conic-gradient(from -60deg,#ea4335 0 120deg,#fbbc05 120deg 240deg,#34a853 240deg 360deg)"></div>
<div class="abs" style="left:1068px;top:1158px;width:13px;height:13px;border-radius:50%;background:#4a8af4;border:2.2px solid #f4f4f4;box-sizing:content-box;margin:-2.2px"></div>
<svg class="abs" style="left:1121.00px;top:1150.00px;" width="33" height="30" viewBox="0 0 33 30"><ellipse cx="15" cy="11.5" rx="13.5" ry="8.5" fill="#f4f4f4" stroke="#d8323a" stroke-width="2.2" transform="rotate(-14 15 11.5)"/><ellipse cx="9" cy="19" rx="6.5" ry="3.2" fill="#8e8e8e" transform="rotate(-10 9 19)"/><path d="M13 4 L23 20 M21 3 L17.5 19" stroke="#c9ccd2" stroke-width="2"/><circle cx="18" cy="24.5" r="3.2" fill="none" stroke="#2a8fe0" stroke-width="2.2"/><circle cx="27" cy="20" r="3.2" fill="none" stroke="#2a8fe0" stroke-width="2.2"/></svg>
<svg class="abs" style="left:1184.00px;top:1150.00px;" width="29" height="29" viewBox="0 0 29 29"><circle cx="14.5" cy="14.5" r="13" fill="#140808" stroke="#e8262c" stroke-width="1.8"/><g transform="translate(14.5 14.5)"><rect x="-2" y="-9" width="4" height="4.5" fill="#e8262c" transform="rotate(0)"/><rect x="-2" y="-9" width="4" height="4.5" fill="#e8262c" transform="rotate(45)"/><rect x="-2" y="-9" width="4" height="4.5" fill="#e8262c" transform="rotate(90)"/><rect x="-2" y="-9" width="4" height="4.5" fill="#e8262c" transform="rotate(135)"/><rect x="-2" y="-9" width="4" height="4.5" fill="#e8262c" transform="rotate(180)"/><rect x="-2" y="-9" width="4" height="4.5" fill="#e8262c" transform="rotate(225)"/><rect x="-2" y="-9" width="4" height="4.5" fill="#e8262c" transform="rotate(270)"/><rect x="-2" y="-9" width="4" height="4.5" fill="#e8262c" transform="rotate(315)"/><circle r="5" fill="none" stroke="#e8262c" stroke-width="3"/><path d="M-1 2 L3 -3 L5 1 Z" fill="#e8262c"/></g></svg>
<svg class="abs" style="left:1246.00px;top:1152.00px;" width="30" height="26" viewBox="0 0 30 26"><path d="M4 1 H26 L29.5 20 H0.5 Z" fill="#e4e7ec"/><path d="M0.5 20 H29.5 V24.5 H0.5 Z" fill="#9aa3b2"/><path d="M0.5 20 H29.5 V21.2 H0.5 Z" fill="#5d79c8"/><ellipse cx="15" cy="10.5" rx="9" ry="4.6" fill="#2a55b8"/><ellipse cx="15" cy="10.5" rx="6" ry="2.4" fill="none" stroke="#dfe6f6" stroke-width="0.9"/></svg>
<div class="abs" style="left:1293.00px;top:1141.00px;width:61.00px;height:42.00px;background:#4b4b4b;"></div>
<svg class="abs" style="left:1306.00px;top:1148.00px;" width="34" height="33" viewBox="0 0 21 21"><path d="M1.2 6.2 L4 6.6 L6 4 L8.5 3 L10 5 L12.5 5.5 L9 12 L6 13.5 L2.5 12 L3 9.5 Z" fill="#f05a28"/>
<path d="M13 7 L15.5 8 L18.5 13.5 L18.8 16.5 L16.5 16.5 L15.8 19.5 L14 19 L12 14.5 L10 12.5 Z" fill="#e03a28"/>
<path d="M15.8 19.5 L14 19 L13 16.5 L15 17 Z" fill="#c8245a"/>
<path d="M16.9 1 L15.7 0.6 L7.4 13.6 L8.6 14.3 Z" fill="#6f7480"/>
<path d="M7.4 13.6 L8.6 14.3 L6.4 17.4 L5.2 16.6 Z" fill="#bda89a"/>
<path d="M5.2 16.6 L6.4 17.4 L5.8 19.6 L2.2 20 L3.4 18 Z" fill="#9a3a24"/></svg>
<div class="abs" style="left:1371.50px;top:1151.00px;width:26.50px;height:27.00px;background:#2b8cf2;border-radius:4px"></div>
<svg class="abs" style="left:1371.50px;top:1151.00px;" width="27" height="27" viewBox="0 0 27 27"><path d="M5 9 L8.5 18.5 L12 11 L15.5 18.5 L19 9 H23 L17 21 H14.5 L12 15.5 L9.5 21 H7 L2 9 Z" fill="#fff"/></svg>
<svg class="abs" style="left:1558.00px;top:1158.00px;" width="18" height="12" viewBox="0 0 18 12"><path d="M1.2 10.5 L9 2.5 L16.8 10.5" fill="none" stroke="#f2f2f2" stroke-width="1.4"/></svg>
<svg class="abs" style="left:1590.00px;top:1154.00px;" width="16" height="21" viewBox="0 0 16 21"><rect x="1" y="6" width="9.5" height="9" rx="2" fill="none" stroke="#f2f2f2" stroke-width="1.2"/><path d="M10.5 9.8 L14.5 7.6 V13.6 L10.5 11.4" fill="none" stroke="#f2f2f2" stroke-width="1.2"/><path d="M2.5 2.8 C5 1 8.5 1 11 2.8 M2.5 18.4 C5 20.2 8.5 20.2 11 18.4" fill="none" stroke="#bdbdbd" stroke-width="1"/></svg>
<svg class="abs" style="left:1616.00px;top:1156.00px;" width="22" height="18" viewBox="0 0 22 18"><rect x="4" y="1.5" width="16.5" height="11.5" fill="none" stroke="#f2f2f2" stroke-width="1.2"/><path d="M12 13 V16 M8 16.5 H16" stroke="#f2f2f2" stroke-width="1.2"/><rect x="1" y="2" width="3.6" height="5" fill="#1b1b1b" stroke="#f2f2f2" stroke-width="1"/><path d="M2.8 7 V16.5" stroke="#f2f2f2" stroke-width="1"/></svg>
<svg class="abs" style="left:1646.00px;top:1156.00px;" width="22" height="18" viewBox="0 0 22 18"><path d="M1.2 6 H4.5 L9 2 V16 L4.5 12 H1.2 Z" fill="none" stroke="#f2f2f2" stroke-width="1.2" stroke-linejoin="round"/><path d="M11.8 6.5 C13 8 13 10 11.8 11.5" fill="none" stroke="#f2f2f2" stroke-width="1.1"/><path d="M14.2 4.5 C16.3 7.2 16.3 10.8 14.2 13.5" fill="none" stroke="#c4c4c4" stroke-width="1.1"/><path d="M16.8 2.5 C20 6.5 20 11.5 16.8 15.5" fill="none" stroke="#7a7a7a" stroke-width="1.1"/></svg>
<svg class="abs" style="left:1681.00px;top:1154.00px;" width="23" height="22" viewBox="0 0 23 22"><path d="M15.5 1.5 L18.5 3.5 L8.5 18.5 L5.5 19.8 L5.6 16.5 Z" fill="none" stroke="#f2f2f2" stroke-width="1.2" stroke-linejoin="round"/><path d="M13.6 4.4 L16.6 6.4" stroke="#f2f2f2" stroke-width="1.1"/><path d="M7 12.5 C3 12.5 1 15 1.5 17.5 C2 19.8 5 20.3 7.5 18.8 M12 14.5 C16 13.5 20 12.5 20.5 10 C20.8 8.6 19.5 8 18 8.2" fill="none" stroke="#f2f2f2" stroke-width="1.2"/></svg>
<div class="t" style="left:1720.50px;top:1158.63px;font-size:14.50px;color:#f4f4f4;letter-spacing:-1.141px;">ENG</div>
<div class="t" style="left:1785.00px;top:1145.90px;font-size:15.00px;color:#f4f4f4;letter-spacing:-0.647px;">21:15</div>
<div class="t" style="left:1765.40px;top:1168.30px;font-size:15.00px;color:#f4f4f4;letter-spacing:-0.022px;">24-11-2020</div>
<svg class="abs" style="left:1863.00px;top:1154.00px;" width="32" height="29" viewBox="0 0 32 29"><path d="M1 1 H21.5 V15.5 H9 L5 19.5 V15.5 H1 Z" fill="#fafafa"/><path d="M5 5 H17.5 M5 8 H17.5 M5 11 H17.5" stroke="#1b1b1b" stroke-width="1.1"/><circle cx="20.3" cy="20.6" r="8.6" fill="#1b1b1b" stroke="#e8e8e8" stroke-width="1.1"/></svg>
<div class="t" style="left:1880.30px;top:1168.30px;font-size:13.00px;color:#fff;">1</div>
<div class="abs" style="left:1908.50px;top:1146.00px;width:1.00px;height:37.00px;background:#6a6a6a;"></div>
</div>
</body>
</html>
